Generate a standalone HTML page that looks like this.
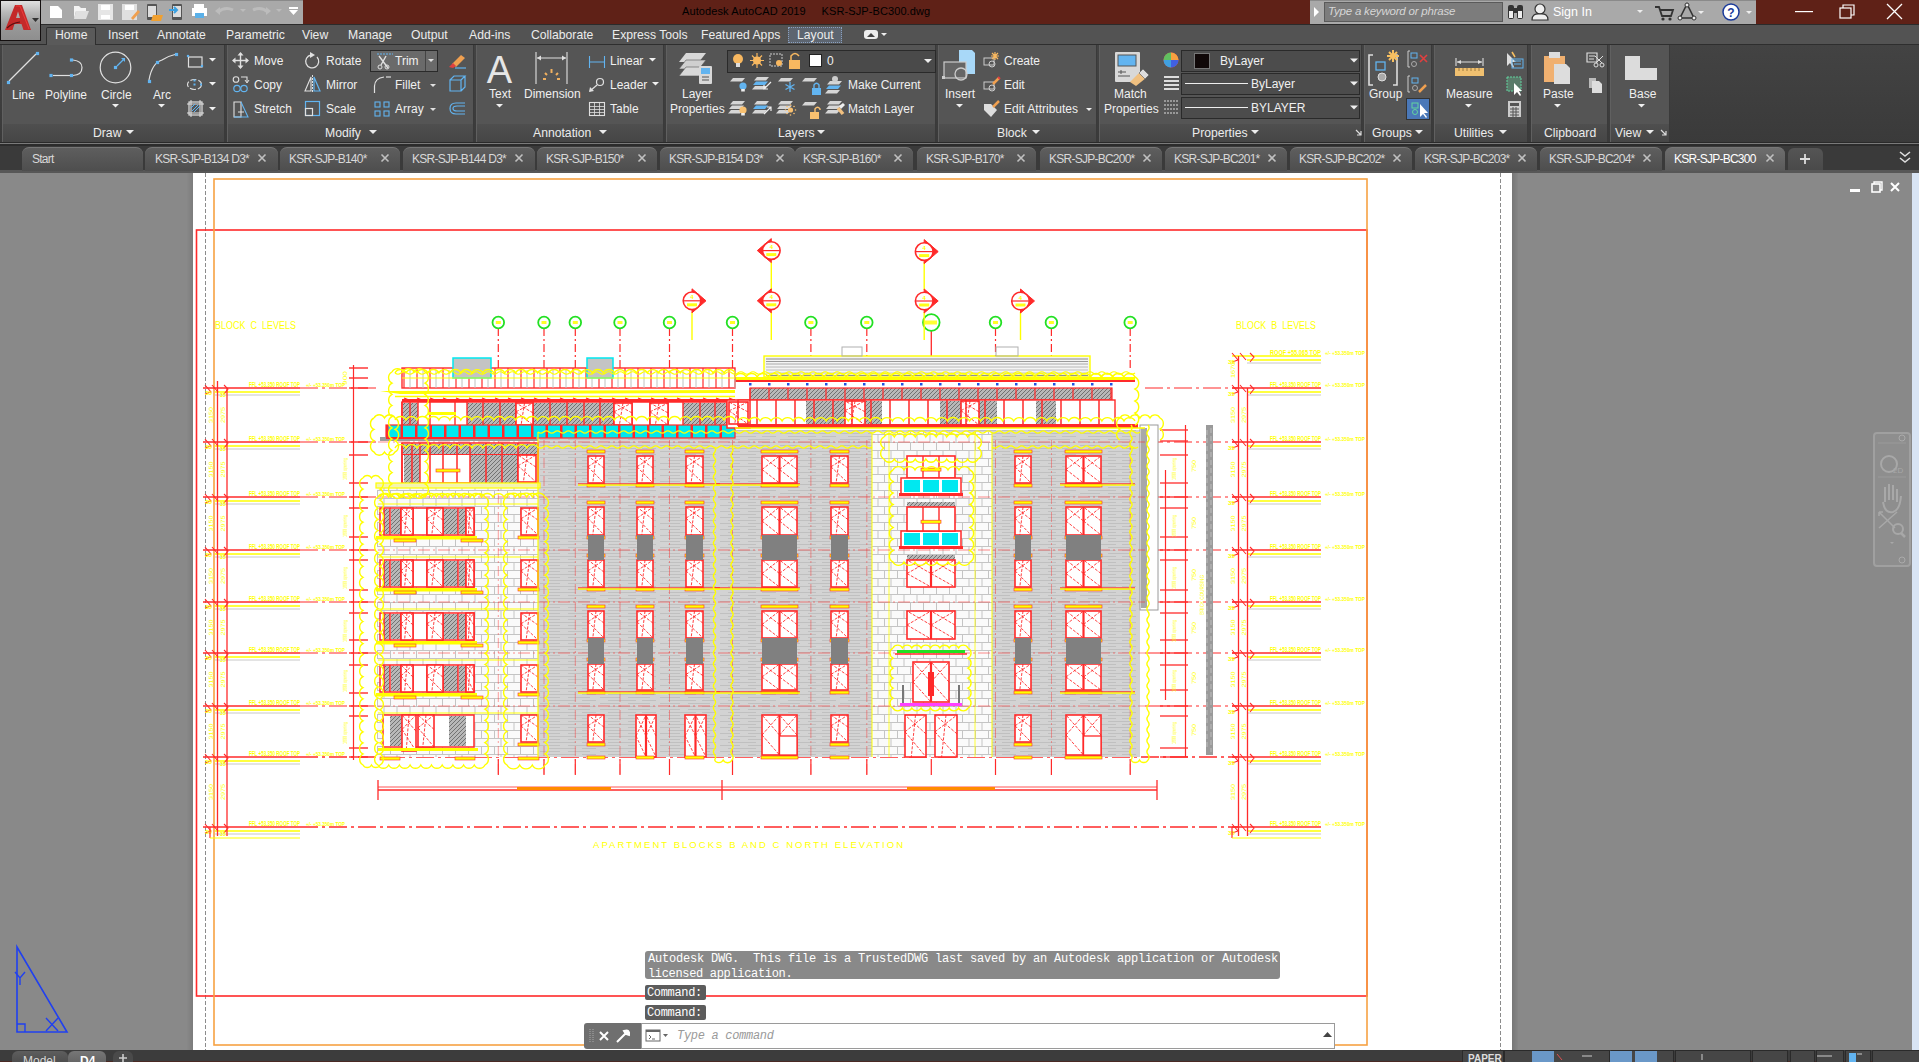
<!DOCTYPE html>
<html><head><meta charset="utf-8"><style>
html,body{margin:0;padding:0;width:1919px;height:1062px;overflow:hidden;background:#3a3a3a;}
body{position:relative;font-family:"Liberation Sans",sans-serif;}
.r{position:absolute;}
.t{position:absolute;white-space:nowrap;line-height:1;}
.s{position:absolute;overflow:visible;}
</style></head><body>
<div class="r" style="left:0px;top:0px;width:1919px;height:24px;background:#5f2117;"></div><div class="r" style="left:0px;top:24px;width:1919px;height:1px;background:#2b2b2b;"></div><div class="r" style="left:41px;top:0px;width:262px;height:24px;background:#a9a9a9;border-top:1px solid #8a8a8a;box-sizing:border-box"></div><svg class="s" style="left:41px;top:0px;" width="262" height="24" viewBox="0 0 262 24"><path d="M9 6 L17 6 L21 10 L21 18 L9 18Z" fill="#fff"/><path d="M33 6 L38 6 L40 8 L45 8 L45 11 L35 11 L33 19Z" fill="#f4f4f4"/><path d="M35 11 L48 11 L45 19 L33 19Z" fill="#e0e0e0"/><path d="M57 4 L72 4 L72 20 L57 20Z" fill="#e6e6e6"/><rect x="60" y="5" width="9" height="5" fill="#fff"/><rect x="60" y="15" width="9" height="4" fill="#fff"/><path d="M81 4 L96 4 L96 20 L81 20Z" fill="#e0e0e0"/><rect x="84" y="5" width="9" height="5" fill="#fff"/><path d="M90 18 L97 10 L99 12 L92 20Z" fill="#f0a050"/><rect x="106" y="4" width="10" height="16" fill="#555" rx="1"/><rect x="107" y="6" width="8" height="11" fill="#ddd"/><path d="M112 15 L122 15 L120 21 L110 21Z" fill="#f0a030"/><rect x="131" y="4" width="10" height="16" fill="#555" rx="1"/><rect x="132" y="6" width="8" height="11" fill="#ddd"/><path d="M128 10 L136 10 M133 7 L136 10 L133 13" stroke="#3aa0e0" stroke-width="2" fill="none"/><rect x="153" y="4" width="10" height="4" fill="#fff"/><rect x="151" y="8" width="15" height="8" fill="#fff"/><rect x="154" y="13" width="9" height="5" fill="#5ab0e8"/><path d="M177 12 Q184 6 192 10" stroke="#bcbcbc" stroke-width="3" fill="none"/><path d="M174 11 L179 7 L179 15Z" fill="#bcbcbc"/><path d="M199 9L205 9L202 12Z" fill="#bcbcbc"/><path d="M212 10 Q220 6 227 12" stroke="#bcbcbc" stroke-width="3" fill="none"/><path d="M230 11 L225 7 L225 15Z" fill="#bcbcbc"/><path d="M235 9L241 9L238 12Z" fill="#bcbcbc"/><rect x="248" y="7" width="9" height="2" fill="#fff"/><path d="M248 10L257 10L252.5 15Z" fill="#fff"/></svg><div class="t" style="left:682px;top:6.3px;font-size:11px;color:#000;letter-spacing:0.1px">Autodesk AutoCAD 2019&nbsp;&nbsp;&nbsp;&nbsp;&nbsp;KSR-SJP-BC300.dwg</div><div class="r" style="left:1310px;top:0px;width:446px;height:24px;background:#a9a9a9;border-top:1px solid #8a8a8a;box-sizing:border-box"></div><svg class="s" style="left:1313px;top:6px;" width="8" height="12" viewBox="0 0 8 12"><path d="M1 1L6 6L1 11Z" fill="#fff"/></svg><div class="r" style="left:1324px;top:2px;width:179px;height:20px;background:#7c7c7c;border:1px solid #5a5a5a;box-sizing:border-box"></div><div class="t" style="left:1328px;top:6.3px;font-size:11.5px;color:#d6d6d6;font-style:italic;letter-spacing:-0.2px">Type a keyword or phrase</div><svg class="s" style="left:1310px;top:0px;" width="446" height="24" viewBox="0 0 446 24"><rect x="198" y="5" width="6" height="14" rx="2" fill="#333"/><rect x="207" y="5" width="6" height="14" rx="2" fill="#333"/><rect x="203" y="8" width="5" height="5" fill="#333"/><rect x="199" y="11" width="4" height="7" fill="#eee"/><rect x="208" y="11" width="4" height="7" fill="#eee"/><circle cx="230" cy="9" r="5" fill="#eee" stroke="#333" stroke-width="1.2"/><path d="M222 20 Q222 13 230 14 Q238 13 238 20Z" fill="#eee" stroke="#333" stroke-width="1.2"/><path d="M327 10L333 10L330 13Z" fill="#eee"/><path d="M345 7 L349 7 L352 16 L361 16 L363 10 L350 10" stroke="#333" stroke-width="1.8" fill="none"/><circle cx="353" cy="19" r="1.6" fill="#333"/><circle cx="360" cy="19" r="1.6" fill="#333"/><path d="M377 4 L384 18 L370 18Z" stroke="#333" stroke-width="1.6" fill="none"/><circle cx="377" cy="5" r="2" fill="#eee" stroke="#333"/><circle cx="370" cy="18" r="2" fill="#eee" stroke="#333"/><circle cx="384" cy="18" r="2" fill="#eee" stroke="#333"/><path d="M388 11L394 11L391 14Z" fill="#eee"/><circle cx="421" cy="12" r="8" fill="#fff" stroke="#1a3a9a" stroke-width="1.5"/><text x="421" y="16.5" font-size="12" font-weight="bold" text-anchor="middle" fill="#1a3a9a" font-family="Liberation Sans">?</text><path d="M436 11L442 11L439 14Z" fill="#eee"/></svg><div class="t" style="left:1553px;top:6.4px;font-size:12.5px;color:#ffffff;">Sign In</div><svg class="s" style="left:1780px;top:0px;" width="139" height="24" viewBox="0 0 139 24"><rect x="15" y="11" width="18" height="1.2" fill="#fff"/><rect x="60" y="8" width="11" height="10" fill="none" stroke="#fff" stroke-width="1.2"/><path d="M63 8 L63 5 L74 5 L74 15 L71 15" fill="none" stroke="#fff" stroke-width="1.2"/><path d="M107 4 L122 19 M122 4 L107 19" stroke="#fff" stroke-width="1.3"/></svg><div class="r" style="left:0px;top:25px;width:1919px;height:19px;background:#535353;"></div><div class="r" style="left:0px;top:44px;width:1919px;height:1px;background:#2e2e2e;"></div><div class="r" style="left:46px;top:27px;width:50px;height:18px;background:#5a5a5a;border:1px solid #2e2e2e;border-bottom:none;border-radius:2px 2px 0 0;box-sizing:border-box"></div><div class="r" style="left:788px;top:27px;width:54px;height:16px;background:#5d6570;border:1px dotted #8aa0c0;box-sizing:border-box"></div><div class="t" style="left:55px;top:28.7px;font-size:12.2px;color:#ececec;">Home</div><div class="t" style="left:108px;top:28.7px;font-size:12.2px;color:#ececec;">Insert</div><div class="t" style="left:157px;top:28.7px;font-size:12.2px;color:#ececec;">Annotate</div><div class="t" style="left:226px;top:28.7px;font-size:12.2px;color:#ececec;">Parametric</div><div class="t" style="left:302px;top:28.7px;font-size:12.2px;color:#ececec;">View</div><div class="t" style="left:348px;top:28.7px;font-size:12.2px;color:#ececec;">Manage</div><div class="t" style="left:411px;top:28.7px;font-size:12.2px;color:#ececec;">Output</div><div class="t" style="left:469px;top:28.7px;font-size:12.2px;color:#ececec;">Add-ins</div><div class="t" style="left:531px;top:28.7px;font-size:12.2px;color:#ececec;">Collaborate</div><div class="t" style="left:612px;top:28.7px;font-size:12.2px;color:#ececec;">Express Tools</div><div class="t" style="left:701px;top:28.7px;font-size:12.2px;color:#ececec;">Featured Apps</div><div class="t" style="left:797px;top:28.7px;font-size:12.2px;color:#ececec;">Layout</div><svg class="s" style="left:862px;top:28px;" width="28" height="14" viewBox="0 0 28 14"><rect x="2" y="2" width="14" height="9" rx="3" fill="#eee"/><path d="M5 9 L9 5 L13 9Z" fill="#444"/><path d="M19 5L25 5L22 8Z" fill="#eee"/></svg><div class="r" style="left:0px;top:0px;width:41px;height:41px;background:#141010;"></div><div class="r" style="left:1px;top:1px;width:39px;height:39px;background:linear-gradient(#e0e0e0,#b8b8b8 30%,#9a9a9a 60%,#8e8e8e);"></div><svg class="s" style="left:3px;top:2px;" width="32" height="30" viewBox="0 0 32 30"><path d="M2 28 L12 3 L19 3 L28 28 L20.5 28 L18.5 22 L11.5 22 L9.5 28Z M13 16 L17 16 L15 9.5Z" fill="#c42a2a" fill-rule="evenodd"/><path d="M4 26 Q9 21 17 20" stroke="#5a1010" stroke-width="1.2" fill="none"/><path d="M13 4 L17 4 L26 27" stroke="#ff4040" stroke-width="1" fill="none" opacity="0.7"/></svg><svg class="s" style="left:31px;top:17px;" width="9" height="6" viewBox="0 0 9 6"><path d="M1 1L8 1L4.5 5Z" fill="#333"/></svg><div class="r" style="left:0px;top:45px;width:1919px;height:98px;background:linear-gradient(#434343,#3a3a3a);"></div><div class="r" style="left:0px;top:142px;width:1919px;height:4px;background:linear-gradient(#2a2a2a,#2a2a2a 25%,#7a7a7a 25%,#7a7a7a 50%,#2c2c2c 50%);"></div><div class="r" style="left:2px;top:45px;width:223px;height:97px;background:#555555;border-left:1px solid #606060;border-right:1px solid #3a3a3a;box-sizing:border-box"></div><div class="r" style="left:3px;top:124px;width:221px;height:18px;background:linear-gradient(#4f4f4f,#464646);"></div><div class="t" style="left:93px;top:126.7px;font-size:12.2px;color:#ececec;">Draw</div><svg class="s" style="left:125px;top:128.5px" width="10" height="6"><path d="M1 1 L9 1 L5 5Z" fill="#ececec"/></svg><div class="r" style="left:227px;top:45px;width:247px;height:97px;background:#555555;border-left:1px solid #606060;border-right:1px solid #3a3a3a;box-sizing:border-box"></div><div class="r" style="left:228px;top:124px;width:245px;height:18px;background:linear-gradient(#4f4f4f,#464646);"></div><div class="t" style="left:325px;top:126.7px;font-size:12.2px;color:#ececec;">Modify</div><svg class="s" style="left:368px;top:128.5px" width="10" height="6"><path d="M1 1 L9 1 L5 5Z" fill="#ececec"/></svg><div class="r" style="left:476px;top:45px;width:188px;height:97px;background:#555555;border-left:1px solid #606060;border-right:1px solid #3a3a3a;box-sizing:border-box"></div><div class="r" style="left:477px;top:124px;width:186px;height:18px;background:linear-gradient(#4f4f4f,#464646);"></div><div class="t" style="left:533px;top:126.7px;font-size:12.2px;color:#ececec;">Annotation</div><svg class="s" style="left:598px;top:128.5px" width="10" height="6"><path d="M1 1 L9 1 L5 5Z" fill="#ececec"/></svg><div class="r" style="left:666px;top:45px;width:270px;height:97px;background:#555555;border-left:1px solid #606060;border-right:1px solid #3a3a3a;box-sizing:border-box"></div><div class="r" style="left:667px;top:124px;width:268px;height:18px;background:linear-gradient(#4f4f4f,#464646);"></div><div class="t" style="left:778px;top:126.7px;font-size:12.2px;color:#ececec;">Layers</div><svg class="s" style="left:816px;top:128.5px" width="10" height="6"><path d="M1 1 L9 1 L5 5Z" fill="#ececec"/></svg><div class="r" style="left:938px;top:45px;width:159px;height:97px;background:#555555;border-left:1px solid #606060;border-right:1px solid #3a3a3a;box-sizing:border-box"></div><div class="r" style="left:939px;top:124px;width:157px;height:18px;background:linear-gradient(#4f4f4f,#464646);"></div><div class="t" style="left:997px;top:126.7px;font-size:12.2px;color:#ececec;">Block</div><svg class="s" style="left:1031px;top:128.5px" width="10" height="6"><path d="M1 1 L9 1 L5 5Z" fill="#ececec"/></svg><div class="r" style="left:1099px;top:45px;width:263px;height:97px;background:#555555;border-left:1px solid #606060;border-right:1px solid #3a3a3a;box-sizing:border-box"></div><div class="r" style="left:1100px;top:124px;width:261px;height:18px;background:linear-gradient(#4f4f4f,#464646);"></div><div class="t" style="left:1192px;top:126.7px;font-size:12.2px;color:#ececec;">Properties</div><svg class="s" style="left:1250px;top:128.5px" width="10" height="6"><path d="M1 1 L9 1 L5 5Z" fill="#ececec"/></svg><svg class="s" style="left:1355px;top:129px;" width="8" height="8" viewBox="0 0 8 8"><path d="M1 1 L6 6 M6 2 L6 6 L2 6" stroke="#ddd" stroke-width="1.2" fill="none"/></svg><div class="r" style="left:1364px;top:45px;width:68px;height:97px;background:#555555;border-left:1px solid #606060;border-right:1px solid #3a3a3a;box-sizing:border-box"></div><div class="r" style="left:1365px;top:124px;width:66px;height:18px;background:linear-gradient(#4f4f4f,#464646);"></div><div class="t" style="left:1372px;top:126.7px;font-size:12.2px;color:#ececec;">Groups</div><svg class="s" style="left:1414px;top:128.5px" width="10" height="6"><path d="M1 1 L9 1 L5 5Z" fill="#ececec"/></svg><div class="r" style="left:1434px;top:45px;width:94px;height:97px;background:#555555;border-left:1px solid #606060;border-right:1px solid #3a3a3a;box-sizing:border-box"></div><div class="r" style="left:1435px;top:124px;width:92px;height:18px;background:linear-gradient(#4f4f4f,#464646);"></div><div class="t" style="left:1454px;top:126.7px;font-size:12.2px;color:#ececec;">Utilities</div><svg class="s" style="left:1498px;top:128.5px" width="10" height="6"><path d="M1 1 L9 1 L5 5Z" fill="#ececec"/></svg><div class="r" style="left:1531px;top:45px;width:77px;height:97px;background:#555555;border-left:1px solid #606060;border-right:1px solid #3a3a3a;box-sizing:border-box"></div><div class="r" style="left:1532px;top:124px;width:75px;height:18px;background:linear-gradient(#4f4f4f,#464646);"></div><div class="t" style="left:1544px;top:126.7px;font-size:12.2px;color:#ececec;">Clipboard</div><div class="r" style="left:1610px;top:45px;width:60px;height:97px;background:#555555;border-left:1px solid #606060;border-right:1px solid #3a3a3a;box-sizing:border-box"></div><div class="r" style="left:1611px;top:124px;width:58px;height:18px;background:linear-gradient(#4f4f4f,#464646);"></div><div class="t" style="left:1615px;top:126.7px;font-size:12.2px;color:#ececec;">View</div><svg class="s" style="left:1645px;top:128.5px" width="10" height="6"><path d="M1 1 L9 1 L5 5Z" fill="#ececec"/></svg><svg class="s" style="left:1660px;top:129px;" width="8" height="8" viewBox="0 0 8 8"><path d="M1 1 L6 6 M6 2 L6 6 L2 6" stroke="#ddd" stroke-width="1.2" fill="none"/></svg><div class="r" style="left:0px;top:146px;width:1919px;height:27px;background:#3a3a3a;"></div><div class="r" style="left:0px;top:170px;width:1919px;height:3px;background:#575757;"></div><div class="r" style="left:22px;top:147px;width:121px;height:24px;background:linear-gradient(#5e5e5e,#4e4e4e);border-radius:7px 7px 0 0;border-top:1px solid #777;box-sizing:border-box"></div><div class="t" style="left:32px;top:153.3px;font-size:12px;color:#d8d8d8;letter-spacing:-0.75px">Start</div><div class="r" style="left:145px;top:147px;width:133px;height:24px;background:linear-gradient(#5e5e5e,#4e4e4e);border-radius:7px 7px 0 0;border-top:1px solid #777;box-sizing:border-box"></div><div class="t" style="left:155px;top:153.3px;font-size:12px;color:#d8d8d8;letter-spacing:-0.75px">KSR-SJP-B134 D3*</div><svg class="s" style="left:257px;top:153px;" width="10" height="10" viewBox="0 0 10 10"><path d="M1.5 1.5 L8.5 8.5 M8.5 1.5 L1.5 8.5" stroke="#c0c0c0" stroke-width="1.6"/></svg><div class="r" style="left:280px;top:147px;width:120px;height:24px;background:linear-gradient(#5e5e5e,#4e4e4e);border-radius:7px 7px 0 0;border-top:1px solid #777;box-sizing:border-box"></div><div class="t" style="left:289px;top:153.3px;font-size:12px;color:#d8d8d8;letter-spacing:-0.75px">KSR-SJP-B140*</div><svg class="s" style="left:380px;top:153px;" width="10" height="10" viewBox="0 0 10 10"><path d="M1.5 1.5 L8.5 8.5 M8.5 1.5 L1.5 8.5" stroke="#c0c0c0" stroke-width="1.6"/></svg><div class="r" style="left:403px;top:147px;width:132px;height:24px;background:linear-gradient(#5e5e5e,#4e4e4e);border-radius:7px 7px 0 0;border-top:1px solid #777;box-sizing:border-box"></div><div class="t" style="left:412px;top:153.3px;font-size:12px;color:#d8d8d8;letter-spacing:-0.75px">KSR-SJP-B144 D3*</div><svg class="s" style="left:514px;top:153px;" width="10" height="10" viewBox="0 0 10 10"><path d="M1.5 1.5 L8.5 8.5 M8.5 1.5 L1.5 8.5" stroke="#c0c0c0" stroke-width="1.6"/></svg><div class="r" style="left:537px;top:147px;width:120px;height:24px;background:linear-gradient(#5e5e5e,#4e4e4e);border-radius:7px 7px 0 0;border-top:1px solid #777;box-sizing:border-box"></div><div class="t" style="left:546px;top:153.3px;font-size:12px;color:#d8d8d8;letter-spacing:-0.75px">KSR-SJP-B150*</div><svg class="s" style="left:637px;top:153px;" width="10" height="10" viewBox="0 0 10 10"><path d="M1.5 1.5 L8.5 8.5 M8.5 1.5 L1.5 8.5" stroke="#c0c0c0" stroke-width="1.6"/></svg><div class="r" style="left:660px;top:147px;width:135px;height:24px;background:linear-gradient(#5e5e5e,#4e4e4e);border-radius:7px 7px 0 0;border-top:1px solid #777;box-sizing:border-box"></div><div class="t" style="left:669px;top:153.3px;font-size:12px;color:#d8d8d8;letter-spacing:-0.75px">KSR-SJP-B154 D3*</div><svg class="s" style="left:775px;top:153px;" width="10" height="10" viewBox="0 0 10 10"><path d="M1.5 1.5 L8.5 8.5 M8.5 1.5 L1.5 8.5" stroke="#c0c0c0" stroke-width="1.6"/></svg><div class="r" style="left:795px;top:147px;width:118px;height:24px;background:linear-gradient(#5e5e5e,#4e4e4e);border-radius:7px 7px 0 0;border-top:1px solid #777;box-sizing:border-box"></div><div class="t" style="left:803px;top:153.3px;font-size:12px;color:#d8d8d8;letter-spacing:-0.75px">KSR-SJP-B160*</div><svg class="s" style="left:893px;top:153px;" width="10" height="10" viewBox="0 0 10 10"><path d="M1.5 1.5 L8.5 8.5 M8.5 1.5 L1.5 8.5" stroke="#c0c0c0" stroke-width="1.6"/></svg><div class="r" style="left:917px;top:147px;width:119px;height:24px;background:linear-gradient(#5e5e5e,#4e4e4e);border-radius:7px 7px 0 0;border-top:1px solid #777;box-sizing:border-box"></div><div class="t" style="left:926px;top:153.3px;font-size:12px;color:#d8d8d8;letter-spacing:-0.75px">KSR-SJP-B170*</div><svg class="s" style="left:1016px;top:153px;" width="10" height="10" viewBox="0 0 10 10"><path d="M1.5 1.5 L8.5 8.5 M8.5 1.5 L1.5 8.5" stroke="#c0c0c0" stroke-width="1.6"/></svg><div class="r" style="left:1040px;top:147px;width:122px;height:24px;background:linear-gradient(#5e5e5e,#4e4e4e);border-radius:7px 7px 0 0;border-top:1px solid #777;box-sizing:border-box"></div><div class="t" style="left:1049px;top:153.3px;font-size:12px;color:#d8d8d8;letter-spacing:-0.75px">KSR-SJP-BC200*</div><svg class="s" style="left:1142px;top:153px;" width="10" height="10" viewBox="0 0 10 10"><path d="M1.5 1.5 L8.5 8.5 M8.5 1.5 L1.5 8.5" stroke="#c0c0c0" stroke-width="1.6"/></svg><div class="r" style="left:1165px;top:147px;width:122px;height:24px;background:linear-gradient(#5e5e5e,#4e4e4e);border-radius:7px 7px 0 0;border-top:1px solid #777;box-sizing:border-box"></div><div class="t" style="left:1174px;top:153.3px;font-size:12px;color:#d8d8d8;letter-spacing:-0.75px">KSR-SJP-BC201*</div><svg class="s" style="left:1267px;top:153px;" width="10" height="10" viewBox="0 0 10 10"><path d="M1.5 1.5 L8.5 8.5 M8.5 1.5 L1.5 8.5" stroke="#c0c0c0" stroke-width="1.6"/></svg><div class="r" style="left:1290px;top:147px;width:122px;height:24px;background:linear-gradient(#5e5e5e,#4e4e4e);border-radius:7px 7px 0 0;border-top:1px solid #777;box-sizing:border-box"></div><div class="t" style="left:1299px;top:153.3px;font-size:12px;color:#d8d8d8;letter-spacing:-0.75px">KSR-SJP-BC202*</div><svg class="s" style="left:1392px;top:153px;" width="10" height="10" viewBox="0 0 10 10"><path d="M1.5 1.5 L8.5 8.5 M8.5 1.5 L1.5 8.5" stroke="#c0c0c0" stroke-width="1.6"/></svg><div class="r" style="left:1415px;top:147px;width:122px;height:24px;background:linear-gradient(#5e5e5e,#4e4e4e);border-radius:7px 7px 0 0;border-top:1px solid #777;box-sizing:border-box"></div><div class="t" style="left:1424px;top:153.3px;font-size:12px;color:#d8d8d8;letter-spacing:-0.75px">KSR-SJP-BC203*</div><svg class="s" style="left:1517px;top:153px;" width="10" height="10" viewBox="0 0 10 10"><path d="M1.5 1.5 L8.5 8.5 M8.5 1.5 L1.5 8.5" stroke="#c0c0c0" stroke-width="1.6"/></svg><div class="r" style="left:1540px;top:147px;width:122px;height:24px;background:linear-gradient(#5e5e5e,#4e4e4e);border-radius:7px 7px 0 0;border-top:1px solid #777;box-sizing:border-box"></div><div class="t" style="left:1549px;top:153.3px;font-size:12px;color:#d8d8d8;letter-spacing:-0.75px">KSR-SJP-BC204*</div><svg class="s" style="left:1642px;top:153px;" width="10" height="10" viewBox="0 0 10 10"><path d="M1.5 1.5 L8.5 8.5 M8.5 1.5 L1.5 8.5" stroke="#c0c0c0" stroke-width="1.6"/></svg><div class="r" style="left:1665px;top:147px;width:120px;height:24px;background:linear-gradient(#6e6e6e,#5a5a5a);border-radius:7px 7px 0 0;border-top:1px solid #777;box-sizing:border-box"></div><div class="t" style="left:1674px;top:153.3px;font-size:12px;color:#ffffff;letter-spacing:-0.75px">KSR-SJP-BC300</div><svg class="s" style="left:1765px;top:153px;" width="10" height="10" viewBox="0 0 10 10"><path d="M1.5 1.5 L8.5 8.5 M8.5 1.5 L1.5 8.5" stroke="#c0c0c0" stroke-width="1.6"/></svg><div class="r" style="left:1788px;top:148px;width:35px;height:22px;background:linear-gradient(#555,#4a4a4a);border-radius:6px 6px 0 0"></div><svg class="s" style="left:1798px;top:152px;" width="14" height="14" viewBox="0 0 14 14"><path d="M7 2 L7 12 M2 7 L12 7" stroke="#ddd" stroke-width="1.8"/></svg><svg class="s" style="left:1898px;top:150px;" width="14" height="16" viewBox="0 0 14 16"><path d="M2 2 L7 6 L12 2 M2 8 L7 12 L12 8" stroke="#ddd" stroke-width="1.6" fill="none"/></svg>
<svg class="s" style="left:0px;top:45px;display:none" width="225" height="80" viewBox="0 0 225 80"></svg><svg class="s" style="left:0;top:0" width="1919" height="145"><path d="M9 81 L36 54" stroke="#e0e0e0" stroke-width="1.2"/><rect x="6.9" y="80.9" width="3.2" height="3.2" fill="#62b4f0"/><rect x="35.9" y="51.9" width="3.2" height="3.2" fill="#62b4f0"/><path d="M53 75.5 L70 75.5" stroke="#e0e0e0" stroke-width="1.2"/><path d="M73 60 Q82 61 82 67.5 Q82 75 73 75.5" stroke="#e0e0e0" stroke-width="1.2" fill="none"/><rect x="49.4" y="73.9" width="3.2" height="3.2" fill="#62b4f0"/><rect x="69.9" y="58.4" width="3.2" height="3.2" fill="#62b4f0"/><rect x="69.9" y="73.9" width="3.2" height="3.2" fill="#62b4f0"/><circle cx="115.5" cy="67.5" r="15.3" stroke="#e0e0e0" stroke-width="1.2" fill="none"/><path d="M117 66 L124 59" stroke="#62b4f0" stroke-width="1.3"/><path d="M121 58 L125 58 L125 62Z" fill="#62b4f0"/><rect x="113.9" y="65.9" width="3.2" height="3.2" fill="#62b4f0"/><path d="M149 80 Q152 63 162 60 Q168 56 175 54.5" stroke="#e0e0e0" stroke-width="1.2" fill="none"/><rect x="147.9" y="79.9" width="3.2" height="3.2" fill="#62b4f0"/><rect x="155.9" y="60.9" width="3.2" height="3.2" fill="#62b4f0"/><rect x="174.9" y="52.9" width="3.2" height="3.2" fill="#62b4f0"/><rect x="188.5" y="57" width="13.5" height="10" stroke="#e0e0e0" stroke-width="1.2" fill="none"/><rect x="186.9" y="54.9" width="2.2" height="2.2" fill="#62b4f0"/><rect x="200.9" y="64.9" width="2.2" height="2.2" fill="#62b4f0"/><ellipse cx="194.5" cy="84.5" rx="7" ry="5" stroke="#e0e0e0" stroke-width="1.1" fill="none" stroke-dasharray="6 2"/><rect x="193.5" y="79.5" width="2" height="2" fill="#62b4f0"/><rect x="193.5" y="83.5" width="2" height="2" fill="#62b4f0"/><rect x="200.0" y="83.5" width="2" height="2" fill="#62b4f0"/><rect x="189" y="102" width="13" height="13" stroke="#e0e0e0" stroke-width="1.2" fill="none"/><path d="M187 104 L204 104 M187 113 L204 113 M191 100 L191 117 M200 100 L200 117" stroke="#e0e0e0" stroke-width="1"/><path d="M192 111 L198 105 M194 112 L200 106 M191 108 L195 104" stroke="#62b4f0" stroke-width="1"/></svg><div class="t" style="left:12px;top:88.8px;font-size:12px;color:#f0f0f0;">Line</div><div class="t" style="left:45px;top:88.8px;font-size:12px;color:#f0f0f0;">Polyline</div><div class="t" style="left:101px;top:88.8px;font-size:12px;color:#f0f0f0;">Circle</div><div class="t" style="left:153px;top:88.8px;font-size:12px;color:#f0f0f0;">Arc</div><svg class="s" style="left:111.0px;top:102.5px" width="9.0" height="5.5"><path d="M1 1 L8.0 1 L4.5 4.5Z" fill="#f0f0f0"/></svg><svg class="s" style="left:157.0px;top:102.5px" width="9.0" height="5.5"><path d="M1 1 L8.0 1 L4.5 4.5Z" fill="#f0f0f0"/></svg><svg class="s" style="left:208.0px;top:56.5px" width="9.0" height="5.5"><path d="M1 1 L8.0 1 L4.5 4.5Z" fill="#f0f0f0"/></svg><svg class="s" style="left:208.0px;top:81.0px" width="9.0" height="5.5"><path d="M1 1 L8.0 1 L4.5 4.5Z" fill="#f0f0f0"/></svg><svg class="s" style="left:208.0px;top:105.5px" width="9.0" height="5.5"><path d="M1 1 L8.0 1 L4.5 4.5Z" fill="#f0f0f0"/></svg><svg class="s" style="left:0;top:0" width="1919" height="145"><path d="M240.5 53 L240.5 68 M233 60.5 L248 60.5" stroke="#e0e0e0" stroke-width="1.4"/><path d="M240.5 52 L237.5 55.5 L243.5 55.5Z M240.5 69 L237.5 65.5 L243.5 65.5Z M232 60.5 L235.5 57.5 L235.5 63.5Z M249 60.5 L245.5 57.5 L245.5 63.5Z" fill="#e0e0e0"/><path d="M317 57 A6.5 6.5 0 1 1 311 55" stroke="#e0e0e0" stroke-width="1.3" fill="none"/><path d="M310 52 L315 55 L310 58Z" fill="#e0e0e0"/><rect x="370.5" y="50.5" width="67" height="21" fill="#6a6a6a" stroke="#2a2a2a"/><path d="M425.5 51 L425.5 71" stroke="#444"/><path d="M377 54 L393 54" stroke="#62b4f0" stroke-width="1" stroke-dasharray="2 1"/><path d="M379 56 L388 68 M386 56 L381 65" stroke="#e0e0e0" stroke-width="1.4"/><circle cx="380" cy="67" r="2" stroke="#e0e0e0" fill="none"/><circle cx="387" cy="67" r="2" stroke="#e0e0e0" fill="none"/><path d="M428 59 L434 59 L431 62Z" fill="#e0e0e0"/><path d="M452 64 L461 55 L465 58 L456 67Z" fill="#f0a050"/><path d="M449 67 L453 63 L456 66 L453 68Z" fill="#e04040"/><path d="M455 68 L466 68" stroke="#62b4f0" stroke-width="1.2"/><circle cx="236" cy="79.5" r="2.8" stroke="#e0e0e0" fill="none" stroke-width="1.1"/><path d="M241 77 L247 77 L247 82" stroke="#e0e0e0" fill="none" stroke-width="1.1"/><path d="M245 80 L247 83 L249 80" stroke="#e0e0e0" fill="none"/><circle cx="237" cy="88.5" r="3.2" stroke="#62b4f0" fill="none" stroke-width="1.2"/><circle cx="244" cy="88.5" r="3.2" stroke="#62b4f0" fill="none" stroke-width="1.2"/><path d="M311 77 L305 91 L311 91Z" stroke="#e0e0e0" fill="none" stroke-width="1.1"/><path d="M314 77 L320 91 L314 91Z" stroke="#62b4f0" fill="none" stroke-width="1.2"/><path d="M312.5 75 L312.5 93" stroke="#e0e0e0" stroke-width="1" stroke-dasharray="2 1"/><path d="M374.5 93 L374.5 86 Q375 78 384 77" stroke="#e0e0e0" fill="none" stroke-width="1.2"/><path d="M386 77 L391 77" stroke="#e0e0e0" stroke-width="1.2"/><path d="M430 84 L436 84 L433 87Z" fill="#e0e0e0"/><path d="M450 80 L461 80 L461 91 L450 91Z M450 80 L454 76 L465 76 L461 80 M465 76 L465 87 L461 91" stroke="#62b4f0" fill="none" stroke-width="1.2"/><path d="M234 117 L234 102 L241 102 L241 117Z" stroke="#e0e0e0" fill="none" stroke-width="1.1"/><path d="M241 102 L248 117 L234 117" stroke="#62b4f0" fill="none" stroke-width="1.1"/><path d="M238 112 L244 112" stroke="#e0e0e0" stroke-width="1"/><rect x="305.5" y="101.5" width="14" height="14" stroke="#62b4f0" fill="none" stroke-width="1.2"/><rect x="305.5" y="108.5" width="7" height="7" stroke="#e0e0e0" fill="none" stroke-width="1.2"/><rect x="375" y="102" width="5" height="5" stroke="#62b4f0" fill="none" stroke-width="1.1"/><rect x="384" y="102" width="5" height="5" stroke="#62b4f0" fill="none" stroke-width="1.1"/><rect x="375" y="111" width="5" height="5" stroke="#62b4f0" fill="none" stroke-width="1.1"/><rect x="384" y="111" width="5" height="5" stroke="#62b4f0" fill="none" stroke-width="1.1"/><path d="M430 108 L436 108 L433 111Z" fill="#e0e0e0"/><path d="M465 103 L456 103 Q450 103 450 108.5 Q450 114 456 114 L465 114 M465 106 L457 106 Q453 106 453 108.5 Q453 111 457 111 L465 111" stroke="#62b4f0" fill="none" stroke-width="1.2"/></svg><div class="t" style="left:254px;top:54.8px;font-size:12px;color:#f0f0f0;">Move</div><div class="t" style="left:326px;top:54.8px;font-size:12px;color:#f0f0f0;">Rotate</div><div class="t" style="left:395px;top:54.8px;font-size:12px;color:#f0f0f0;">Trim</div><div class="t" style="left:254px;top:78.8px;font-size:12px;color:#f0f0f0;">Copy</div><div class="t" style="left:326px;top:78.8px;font-size:12px;color:#f0f0f0;">Mirror</div><div class="t" style="left:395px;top:78.8px;font-size:12px;color:#f0f0f0;">Fillet</div><div class="t" style="left:254px;top:102.8px;font-size:12px;color:#f0f0f0;">Stretch</div><div class="t" style="left:326px;top:102.8px;font-size:12px;color:#f0f0f0;">Scale</div><div class="t" style="left:395px;top:102.8px;font-size:12px;color:#f0f0f0;">Array</div><svg class="s" style="left:0;top:0" width="1919" height="145"><text x="499.5" y="83" font-family="Liberation Sans" font-size="38" fill="#e6e6e6" text-anchor="middle">A</text><path d="M536 52 L536 84 M567 52 L567 84 M537 58 L566 58" stroke="#e0e0e0" stroke-width="1.1"/><path d="M537 58 L541 55.5 L541 60.5Z M566 58 L562 55.5 L562 60.5Z" fill="#e0e0e0"/><path d="M551.5 69 L551.5 73 M545 73 L547 75 M558 73 L556 75 M543 79 L546 79 M557 79 L560 79" stroke="#f0b060" stroke-width="2"/><path d="M589.5 56 L589.5 68 M604.5 56 L604.5 68 M590 62 L604 62" stroke="#62b4f0" stroke-width="1.1"/><circle cx="600" cy="82" r="3.5" stroke="#e0e0e0" fill="none" stroke-width="1.2"/><path d="M597 85 L590 91" stroke="#e0e0e0" stroke-width="1.2"/><path d="M589 92 L590 87 L594 91Z" fill="#e0e0e0"/><rect x="589.5" y="102.5" width="15" height="13" stroke="#e0e0e0" fill="none" stroke-width="1.1"/><path d="M590 106.5 L604 106.5 M590 109.5 L604 109.5 M590 112.5 L604 112.5 M594.5 103 L594.5 115 M599.5 103 L599.5 115" stroke="#e0e0e0" stroke-width="0.8"/></svg><div class="t" style="left:489px;top:87.8px;font-size:12px;color:#f0f0f0;">Text</div><svg class="s" style="left:495.0px;top:102.5px" width="9.0" height="5.5"><path d="M1 1 L8.0 1 L4.5 4.5Z" fill="#f0f0f0"/></svg><div class="t" style="left:524px;top:87.8px;font-size:12px;color:#f0f0f0;">Dimension</div><div class="t" style="left:610px;top:54.8px;font-size:12px;color:#f0f0f0;">Linear</div><svg class="s" style="left:647.5px;top:57.0px" width="9.0" height="5.5"><path d="M1 1 L8.0 1 L4.5 4.5Z" fill="#f0f0f0"/></svg><div class="t" style="left:610px;top:78.8px;font-size:12px;color:#f0f0f0;">Leader</div><svg class="s" style="left:650.5px;top:81.0px" width="9.0" height="5.5"><path d="M1 1 L8.0 1 L4.5 4.5Z" fill="#f0f0f0"/></svg><div class="t" style="left:610px;top:102.8px;font-size:12px;color:#f0f0f0;">Table</div><svg class="s" style="left:0;top:0" width="1919" height="145"><path d="M686 53 L706 53 L699 62 L679 62Z" fill="#d8d8d8"/><path d="M686 60 L706 60 L699 69 L679 69Z" fill="#cfcfcf" stroke="#555" stroke-width="0.6"/><path d="M686 67 L706 67 L699 76 L679 76Z" fill="#d8d8d8" stroke="#555" stroke-width="0.6"/><rect x="699" y="66" width="13" height="18" rx="1" fill="#d8d8d8"/><rect x="701" y="68" width="9" height="6" fill="#62b4f0"/><path d="M702 77 L709 77 M702 80 L709 80" stroke="#555" stroke-width="1"/><rect x="727.5" y="50.5" width="208" height="22" fill="#4a4a4a" stroke="#2a2a2a"/><circle cx="738" cy="59" r="5" fill="#f8b860"/><rect x="736" y="63" width="4" height="4" fill="#ddd"/><circle cx="757" cy="60.5" r="4" fill="#f8b860"/><path d="M757 53 L757 68 M750 60.5 L764 60.5 M752 55.5 L762 65.5 M762 55.5 L752 65.5" stroke="#f8b860" stroke-width="1.2"/><rect x="770" y="54" width="12" height="12" fill="none" stroke="#ccc" stroke-dasharray="2 1"/><circle cx="779" cy="63" r="3" fill="#f8b860"/><rect x="789" y="60" width="11" height="9" fill="#f8b860"/><path d="M791 60 L791 56 Q795 51 799 56" stroke="#f8b860" stroke-width="1.5" fill="none"/><rect x="809.5" y="54.5" width="12" height="12" fill="#fff" stroke="#222"/><path d="M924 59 L932 59 L928 63Z" fill="#eee"/><path d="M733 78 L745 78 L742 81.5 L730 81.5Z" fill="#d6d6d6"/><circle cx="743" cy="86" r="3.6" fill="#62b4f0"/><rect x="741.2" y="89" width="3.6" height="2.5" fill="#eee"/><path d="M757 77 L769 77 L766 80.5 L754 80.5Z" fill="#d6d6d6"/><path d="M756 81.5 L768 81.5 L765 85.0 L753 85.0Z" fill="#62b4f0"/><path d="M755 86 L767 86 L764 89.5 L752 89.5Z" fill="#d6d6d6"/><path d="M771 82 L764 89 M764 85 L764 89 L768 89" stroke="#eee" stroke-width="1.2" fill="none"/><path d="M781 78 L793 78 L790 81.5 L778 81.5Z" fill="#d6d6d6"/><path d="M790 82 L790 92 M785.5 84.5 L794.5 89.5 M794.5 84.5 L785.5 89.5" stroke="#62b4f0" stroke-width="1.3"/><path d="M805 78 L817 78 L814 81.5 L802 81.5Z" fill="#d6d6d6"/><path d="M814 88 L814 85 Q816.5 81.5 819 85 L819 88" stroke="#62b4f0" stroke-width="1.4" fill="none"/><rect x="812" y="88" width="9" height="7" fill="#62b4f0"/><path d="M830 81 L842 81 L839 84.5 L827 84.5Z" fill="#d6d6d6"/><path d="M829 85.5 L841 85.5 L838 89.0 L826 89.0Z" fill="#62b4f0"/><path d="M828 90 L840 90 L837 93.5 L825 93.5Z" fill="#d6d6d6"/><circle cx="835" cy="79" r="3" fill="#ccc"/><path d="M733 101 L745 101 L742 104.5 L730 104.5Z" fill="#d6d6d6"/><path d="M732 105.5 L744 105.5 L741 109.0 L729 109.0Z" fill="#d6d6d6"/><path d="M731 110 L743 110 L740 113.5 L728 113.5Z" fill="#d6d6d6"/><circle cx="743" cy="110" r="3.6" fill="#f8c070"/><rect x="741.2" y="113" width="3.6" height="2.5" fill="#eee"/><path d="M757 101 L769 101 L766 104.5 L754 104.5Z" fill="#d6d6d6"/><path d="M756 105.5 L768 105.5 L765 109.0 L753 109.0Z" fill="#62b4f0"/><path d="M755 110 L767 110 L764 113.5 L752 113.5Z" fill="#d6d6d6"/><path d="M764 114 L771 107 M767 107 L771 107 L771 111" stroke="#eee" stroke-width="1.2" fill="none"/><path d="M781 101 L793 101 L790 104.5 L778 104.5Z" fill="#d6d6d6"/><path d="M780 105.5 L792 105.5 L789 109.0 L777 109.0Z" fill="#d6d6d6"/><path d="M779 110 L791 110 L788 113.5 L776 113.5Z" fill="#d6d6d6"/><circle cx="790.5" cy="110" r="2.6" fill="#f8c070"/><circle cx="795.5" cy="110.0" r="0.8" fill="#f8c070"/><circle cx="794.0" cy="113.5" r="0.8" fill="#f8c070"/><circle cx="790.5" cy="115.0" r="0.8" fill="#f8c070"/><circle cx="787.0" cy="113.5" r="0.8" fill="#f8c070"/><circle cx="785.5" cy="110.0" r="0.8" fill="#f8c070"/><circle cx="787.0" cy="106.5" r="0.8" fill="#f8c070"/><circle cx="790.5" cy="105.0" r="0.8" fill="#f8c070"/><circle cx="794.0" cy="106.5" r="0.8" fill="#f8c070"/><path d="M805 102 L817 102 L814 105.5 L802 105.5Z" fill="#d6d6d6"/><path d="M815 112 L815 109 Q817.5 105.5 820 109 L820 110" stroke="#f8c070" stroke-width="1.4" fill="none"/><rect x="810" y="112" width="9" height="7" fill="#f8c070"/><path d="M830 101 L842 101 L839 104.5 L827 104.5Z" fill="#d6d6d6"/><path d="M829 105.5 L841 105.5 L838 109.0 L826 109.0Z" fill="#d6d6d6"/><path d="M828 110 L840 110 L837 113.5 L825 113.5Z" fill="#d6d6d6"/><path d="M838 108 L843 114" stroke="#f0c080" stroke-width="3.5"/><path d="M839 106 L843 103 L845 105 L841 109Z" fill="#eee"/></svg><div class="t" style="left:827px;top:55.3px;font-size:12px;color:#f0f0f0;">0</div><div class="t" style="left:682px;top:87.8px;font-size:12px;color:#f0f0f0;">Layer</div><div class="t" style="left:670px;top:102.8px;font-size:12px;color:#f0f0f0;">Properties</div><div class="t" style="left:848px;top:78.8px;font-size:12px;color:#f0f0f0;">Make Current</div><div class="t" style="left:848px;top:102.8px;font-size:12px;color:#f0f0f0;">Match Layer</div><svg class="s" style="left:0;top:0" width="1919" height="145"><path d="M959 50 L972 50 L975 53 L975 74 L959 74Z" fill="#a8d8f8"/><rect x="944" y="62" width="22" height="16" fill="#666" stroke="#ccc" stroke-width="1.2"/><circle cx="961" cy="74" r="6" fill="none" stroke="#ccc" stroke-width="1.3"/><rect x="942" y="76" width="3" height="3" fill="#ccc"/><rect x="984" y="58" width="10" height="7" fill="none" stroke="#ccc"/><circle cx="992" cy="64" r="3" fill="none" stroke="#ccc"/><path d="M995 52 L995 60 M991 56 L999 56 M992 53 L998 59 M998 53 L992 59" stroke="#f8b860" stroke-width="1.2"/><rect x="984" y="82" width="10" height="7" fill="none" stroke="#ccc"/><circle cx="992" cy="88" r="3" fill="none" stroke="#ccc"/><path d="M993 84 L999 78" stroke="#f0a050" stroke-width="2.5"/><path d="M998 77 L1000 79" stroke="#e04040" stroke-width="2"/><path d="M984 104 L991 104 L997 110 L991 117 L984 110Z" fill="#ddd"/><path d="M993 107 L999 101" stroke="#f0a050" stroke-width="2.5"/><path d="M1086 108 L1092 108 L1089 111Z" fill="#eee"/></svg><div class="t" style="left:945px;top:87.8px;font-size:12px;color:#f0f0f0;">Insert</div><svg class="s" style="left:955.0px;top:102.5px" width="9.0" height="5.5"><path d="M1 1 L8.0 1 L4.5 4.5Z" fill="#f0f0f0"/></svg><div class="t" style="left:1004px;top:54.8px;font-size:12px;color:#f0f0f0;">Create</div><div class="t" style="left:1004px;top:78.8px;font-size:12px;color:#f0f0f0;">Edit</div><div class="t" style="left:1004px;top:102.8px;font-size:12px;color:#f0f0f0;">Edit Attributes</div><svg class="s" style="left:0;top:0" width="1919" height="145"><rect x="1115" y="52" width="25" height="30" rx="1" fill="#d8d8d8"/><rect x="1118" y="55" width="18" height="11" fill="#62b4f0" stroke="#555"/><path d="M1118 72 L1126 72 M1118 76 L1130 76 M1121 70 L1121 74" stroke="#555" stroke-width="1"/><path d="M1130 82 L1140 72 L1146 78 L1136 86Z" fill="#f0c080"/><path d="M1139 73 L1143 69 L1149 75 L1145 79Z" fill="#ddd" stroke="#555" stroke-width="0.6"/><circle cx="1171" cy="60" r="7.5" fill="#e05050"/><path d="M1171 60 L1171 52.5 A7.5 7.5 0 0 1 1178.5 60Z" fill="#f8a040"/><path d="M1171 60 L1178.5 60 A7.5 7.5 0 0 1 1171 67.5Z" fill="#4060e0"/><path d="M1171 60 L1171 67.5 A7.5 7.5 0 0 1 1163.5 60Z" fill="#40a0e0"/><path d="M1171 60 L1163.5 60 A7.5 7.5 0 0 1 1171 52.5Z" fill="#60c060"/><path d="M1164 77 L1179 77 M1164 81 L1179 81 M1164 85 L1179 85 M1164 89 L1179 89" stroke="#ddd" stroke-width="2"/><path d="M1164 101 L1178 101 M1164 105 L1178 105 M1164 109 L1178 109 M1164 113 L1178 113" stroke="#ddd" stroke-width="1" stroke-dasharray="2 1"/><rect x="1181.5" y="50.5" width="178" height="21" fill="#4c4c4c" stroke="#2a2a2a"/><path d="M1350 58.5 L1358 58.5 L1354 62.5Z" fill="#eee"/><rect x="1181.5" y="73.5" width="178" height="21" fill="#4c4c4c" stroke="#2a2a2a"/><path d="M1350 81.5 L1358 81.5 L1354 85.5Z" fill="#eee"/><rect x="1181.5" y="97.5" width="178" height="21" fill="#4c4c4c" stroke="#2a2a2a"/><path d="M1350 105.5 L1358 105.5 L1354 109.5Z" fill="#eee"/><rect x="1194.5" y="53.5" width="15" height="15" fill="#100808" stroke="#777"/><path d="M1185 83.5 L1248 83.5 M1185 107.5 L1248 107.5" stroke="#eee" stroke-width="1"/></svg><div class="t" style="left:1114px;top:87.8px;font-size:12px;color:#f0f0f0;">Match</div><div class="t" style="left:1104px;top:102.8px;font-size:12px;color:#f0f0f0;">Properties</div><div class="t" style="left:1220px;top:55.3px;font-size:12px;color:#f0f0f0;">ByLayer</div><div class="t" style="left:1251px;top:78.3px;font-size:12px;color:#f0f0f0;">ByLayer</div><div class="t" style="left:1251px;top:101.8px;font-size:12px;color:#f0f0f0;">BYLAYER</div><svg class="s" style="left:0;top:0" width="1919" height="145"><path d="M1373 55 L1369 55 L1369 85 L1373 85 M1393 55 L1397 55 L1397 85 L1393 85" stroke="#ddd" stroke-width="1.6" fill="none"/><rect x="1376" y="62" width="9" height="8" fill="none" stroke="#62b4f0" stroke-width="1.3"/><circle cx="1382" cy="77" r="4" fill="#aaa" stroke="#ddd"/><path d="M1393 50 L1393 62 M1387 56 L1399 56 M1389 52 L1397 60 M1397 52 L1389 60" stroke="#f8c060" stroke-width="2"/><rect x="1411" y="53" width="6" height="5" fill="none" stroke="#62b4f0"/><circle cx="1414" cy="64" r="2.5" fill="none" stroke="#aaa"/><path d="M1420 55 L1427 62 M1427 55 L1420 62" stroke="#e04040" stroke-width="1.6"/><path d="M1410 51 L1408 51 L1408 67 L1410 67" stroke="#ccc" fill="none"/><rect x="1412" y="78" width="6" height="5" fill="none" stroke="#62b4f0"/><circle cx="1415" cy="88" r="2.5" fill="none" stroke="#aaa"/><path d="M1419 92 L1426 85" stroke="#f0a050" stroke-width="2.5"/><path d="M1410 76 L1408 76 L1408 92 L1410 92" stroke="#ccc" fill="none"/><rect x="1406.5" y="98.5" width="23" height="21" fill="#4a78b8" stroke="#333"/><rect x="1412" y="103" width="6" height="5" fill="none" stroke="#62d4a0"/><circle cx="1415" cy="112" r="2.5" fill="none" stroke="#62d4a0"/><path d="M1420 104 L1420 117 L1423 114 L1426 118 L1427 117 L1424 113 L1428 113Z" fill="#fff"/></svg><div class="t" style="left:1369px;top:87.8px;font-size:12px;color:#f0f0f0;">Group</div><svg class="s" style="left:0;top:0" width="1919" height="145"><path d="M1456 58 L1456 66 M1483 58 L1483 66 M1457 62 L1482 62" stroke="#ddd" stroke-width="1.1"/><path d="M1457 62 L1461 60 L1461 64Z M1482 62 L1478 60 L1478 64Z" fill="#ddd"/><rect x="1455" y="68" width="29" height="8" fill="#f0c070"/><path d="M1459 68 L1459 71 M1463 68 L1463 71 M1467 68 L1467 71 M1471 68 L1471 71 M1475 68 L1475 71 M1479 68 L1479 71" stroke="#8a6a30" stroke-width="0.8"/><path d="M1507 53 L1507 66 L1510 63 L1513 68 L1514 67 L1512 62 L1516 62Z" fill="#ddd"/><rect x="1512" y="59" width="11" height="9" fill="none" stroke="#62b4f0"/><path d="M1514 61 L1521 61 M1514 64 L1521 64" stroke="#62b4f0"/><path d="M1512 52 L1515 57" stroke="#f8c060" stroke-width="1.5"/><rect x="1507" y="77" width="14" height="14" fill="#5a7a6a" stroke="#62d4a0" stroke-dasharray="2 1"/><path d="M1514 83 L1514 95 L1517 92 L1520 96 L1521 95 L1519 91 L1522 91Z" fill="#fff"/><rect x="1508" y="101" width="13" height="16" fill="#ccc"/><rect x="1510" y="103" width="9" height="3" fill="#555"/><path d="M1510 109 L1519 109 M1510 112 L1519 112 M1510 115 L1519 115 M1513 107 L1513 117 M1516 107 L1516 117" stroke="#555" stroke-width="1"/></svg><div class="t" style="left:1446px;top:87.8px;font-size:12px;color:#f0f0f0;">Measure</div><svg class="s" style="left:1464.0px;top:102.5px" width="9.0" height="5.5"><path d="M1 1 L8.0 1 L4.5 4.5Z" fill="#f0f0f0"/></svg><svg class="s" style="left:0;top:0" width="1919" height="145"><rect x="1544" y="56" width="21" height="26" fill="#f0b070"/><rect x="1549" y="52" width="11" height="6" fill="#ddd"/><path d="M1554 64 L1566 64 L1570 68 L1570 84 L1554 84Z" fill="#ddd"/><path d="M1587 53 L1597 53 L1597 62 L1587 62Z" fill="none" stroke="#ddd" stroke-width="1.2"/><path d="M1589 56 L1595 56 M1589 59 L1594 59" stroke="#ddd"/><circle cx="1596" cy="65" r="2" fill="none" stroke="#ddd"/><circle cx="1602" cy="65" r="2" fill="none" stroke="#ddd"/><path d="M1596 63 L1603 56 M1602 63 L1595 56" stroke="#ddd"/><path d="M1589 78 L1596 78 L1596 88 L1589 88Z" fill="#bbb"/><path d="M1592 81 L1599 81 L1602 84 L1602 93 L1592 93Z" fill="#ddd"/></svg><div class="t" style="left:1543px;top:87.8px;font-size:12px;color:#f0f0f0;">Paste</div><svg class="s" style="left:1553.0px;top:102.5px" width="9.0" height="5.5"><path d="M1 1 L8.0 1 L4.5 4.5Z" fill="#f0f0f0"/></svg><svg class="s" style="left:0;top:0" width="1919" height="145"><path d="M1625 56 L1640 56 L1640 68 L1657 68 L1657 80 L1625 80Z" fill="#dcdcdc"/></svg><div class="t" style="left:1629px;top:87.8px;font-size:12px;color:#f0f0f0;">Base</div><svg class="s" style="left:1637.0px;top:102.5px" width="9.0" height="5.5"><path d="M1 1 L8.0 1 L4.5 4.5Z" fill="#f0f0f0"/></svg>
<div class="r" style="left:0px;top:173px;width:1919px;height:877px;background:#898989;"></div><div class="r" style="left:187px;top:173px;width:6px;height:877px;background:linear-gradient(to right,#888,#7c7c7c);"></div><div class="r" style="left:1512px;top:173px;width:6px;height:877px;background:linear-gradient(to right,#777,#868686);"></div><div class="r" style="left:193px;top:173px;width:1319px;height:877px;background:#ffffff;"></div><div class="r" style="left:1912px;top:173px;width:7px;height:877px;background:#d8e4f4;"></div><svg class="s" style="left:1846px;top:180px;" width="60" height="16" viewBox="0 0 60 16"><rect x="4" y="9" width="10" height="3" fill="#fff"/><rect x="26" y="4" width="8" height="8" fill="none" stroke="#fff" stroke-width="1.6"/><path d="M28 4 L28 2 L36 2 L36 10 L34 10" fill="none" stroke="#fff" stroke-width="1.4"/><path d="M45 3 L53 11 M53 3 L45 11" stroke="#fff" stroke-width="2"/></svg><div class="r" style="left:1873px;top:432px;width:38px;height:135px;background:#8e8e8e;border:2px solid #a0a0a0;border-radius:4px;box-sizing:border-box"></div><svg class="s" style="left:1873px;top:432px;" width="38" height="135" viewBox="0 0 38 135"><circle cx="29" cy="6" r="3" fill="none" stroke="#aaa"/><path d="M5 11 L33 11 M5 45 L33 45" stroke="#9a9a9a"/><circle cx="16" cy="32" r="8" fill="none" stroke="#a8a8a8" stroke-width="2"/><text x="20" y="41" font-size="8" fill="#a8a8a8" font-family="Liberation Sans">2D</text><path d="M12 70 L12 55 M16 68 L16 52 M20 68 L20 53 M24 70 L24 57 M10 70 Q12 82 20 80 Q27 78 28 64" stroke="#a8a8a8" stroke-width="2" fill="none"/><path d="M6 80 L22 96 M6 80 L10 80 M6 80 L6 84 M24 80 L6 96" stroke="#a8a8a8" stroke-width="1.5"/><circle cx="25" cy="97" r="5" fill="none" stroke="#a8a8a8" stroke-width="2"/><path d="M28 101 L32 105" stroke="#a8a8a8" stroke-width="2.5"/><path d="M17 110 L21 110 L19 112Z" fill="#a8a8a8"/><circle cx="29" cy="128" r="3" fill="none" stroke="#aaa"/></svg><svg class="s" style="left:10px;top:940px;" width="70" height="100" viewBox="0 0 70 100"><path d="M7 7 L7 92 L57 92Z" fill="none" stroke="#2040f0" stroke-width="1.6"/><path d="M7 84 L15 84 L15 92" fill="none" stroke="#2040f0" stroke-width="1.4"/><path d="M5 32 L10 38 L15 32 M10 38 L10 45" stroke="#2040f0" stroke-width="1.4" fill="none"/><path d="M36 78 L48 91 M48 78 L36 91" stroke="#2040f0" stroke-width="1.4"/></svg><div class="r" style="left:0px;top:1050px;width:1919px;height:12px;background:#3c3c3c;"></div><div class="r" style="left:0px;top:1061px;width:1919px;height:1px;background:#4a2a24;"></div><div class="r" style="left:12px;top:1051px;width:56px;height:11px;background:linear-gradient(#5e5e5e,#4e4e4e);border-radius:6px 6px 0 0"></div><div class="t" style="left:23px;top:1054.8px;font-size:12px;color:#d8d8d8;">Model</div><div class="r" style="left:68px;top:1051px;width:38px;height:11px;background:linear-gradient(#777,#666);border-radius:6px 6px 0 0"></div><div class="t" style="left:80px;top:1054.8px;font-size:12px;color:#ffffff;font-weight:bold">D4</div><div class="r" style="left:113px;top:1051px;width:20px;height:11px;background:#4a4a4a;border-radius:6px 6px 0 0"></div><svg class="s" style="left:117px;top:1052px;" width="12" height="10" viewBox="0 0 12 10"><path d="M6 2 L6 10 M2 6 L10 6" stroke="#ccc" stroke-width="1.6"/></svg><svg class="s" style="left:1462px;top:1048px;" width="457" height="14" viewBox="0 0 457 14"><rect x="0.5" y="2.5" width="41" height="12" fill="#464646" stroke="#2a2a2a"/><rect x="42.5" y="2.5" width="105" height="12" fill="#464646" stroke="#2a2a2a"/><rect x="149.5" y="2.5" width="62" height="12" fill="#464646" stroke="#2a2a2a"/><rect x="213.5" y="2.5" width="75" height="12" fill="#464646" stroke="#2a2a2a"/><rect x="290.5" y="2.5" width="35" height="12" fill="#464646" stroke="#2a2a2a"/><rect x="328.5" y="2.5" width="24" height="12" fill="#464646" stroke="#2a2a2a"/><rect x="354.5" y="2.5" width="27" height="12" fill="#464646" stroke="#2a2a2a"/><rect x="383.5" y="2.5" width="25" height="12" fill="#464646" stroke="#2a2a2a"/><rect x="410.5" y="2.5" width="47" height="12" fill="#464646" stroke="#2a2a2a"/><rect x="70" y="3" width="22" height="12" fill="#6a98c8"/><rect x="148" y="3" width="22" height="12" fill="#6a98c8"/><rect x="173" y="3" width="22" height="12" fill="#6a98c8"/><rect x="387" y="5" width="7" height="10" fill="#62b4f0"/><text x="6" y="14" font-size="10" fill="#ddd" font-family="Liberation Sans" font-weight="bold">PAPER</text><path d="M95 6 L100 12" stroke="#e05050"/><path d="M120 8 L130 8 M240 6 L240 12 M 355 8 L370 8 M395 6 L400 6" stroke="#ccc"/></svg>
<svg class="s" style="left:0;top:0" width="1919" height="1062"><defs>
<pattern id="brick" width="26" height="16" patternUnits="userSpaceOnUse" x="377" y="490">
<rect width="26" height="16" fill="#fafafa"/>
<path d="M0 0.5 H26 M0 8.5 H26 M0.5 0 V8 M13.5 0 V8 M7 8 V16 M20 8 V16" stroke="#c4c4c4" stroke-width="1"/>
</pattern>
<pattern id="grayf" width="60" height="6" patternUnits="userSpaceOnUse" x="538" y="432">
<rect width="60" height="6" fill="#d3d3d3"/>
<path d="M2 1.5 H22 M30 1.5 H52 M10 4.5 H38 M44 4.5 H58" stroke="#c0c0c0" stroke-width="1"/>
</pattern>
<pattern id="hatch" width="4" height="4" patternUnits="userSpaceOnUse">
<rect width="4" height="4" fill="#b8b8b8"/>
<path d="M0 4 L4 0 M-1 1 L1 -1 M3 5 L5 3" stroke="#6a6a6a" stroke-width="0.9"/>
</pattern>
</defs><line x1="205.5" y1="173" x2="205.5" y2="1050" stroke="#8c8c8c" stroke-width="1" stroke-dasharray="4 2"/><line x1="1500.5" y1="173" x2="1500.5" y2="1050" stroke="#8c8c8c" stroke-width="1" stroke-dasharray="4 2"/><rect x="196.5" y="230" width="1170.5" height="766" fill="none" stroke="#ff2a2a" stroke-width="1.6" /><rect x="214" y="179" width="1153" height="866" fill="none" stroke="#f7a243" stroke-width="1.6" /><text x="215" y="328.5" font-family="Liberation Sans" font-size="10" fill="#ffff00" textLength="81" lengthAdjust="spacingAndGlyphs">BLOCK&#160; C&#160; LEVELS</text><text x="1236" y="328.5" font-family="Liberation Sans" font-size="10" fill="#ffff00" textLength="80" lengthAdjust="spacingAndGlyphs">BLOCK&#160; B&#160; LEVELS</text><text x="593" y="848" font-family="Liberation Sans" font-size="9.5" fill="#ffff00" textLength="310" lengthAdjust="spacing">APARTMENT BLOCKS B AND C NORTH ELEVATION</text><line x1="203" y1="388" x2="300" y2="388" stroke="#ff2a2a" stroke-width="1.4" /><line x1="215" y1="392" x2="300" y2="392" stroke="#ffff00" stroke-width="1.6" /><line x1="215" y1="395" x2="300" y2="395" stroke="#c8c8c8" stroke-width="1" /><path d="M205 385 L211 392 L205 394 M212 385 L218 392 M224 385 L228 389 L224 394" stroke="#ff2a2a" stroke-width="1.1" fill="none"/><text x="249" y="387" font-family="Liberation Sans" font-size="6.5" font-weight="bold" fill="#ffff00" textLength="51" lengthAdjust="spacingAndGlyphs">FFL +53.350 ROOF TOP</text><text x="306" y="387" font-family="Liberation Sans" font-size="6" font-weight="bold" fill="#ffff00" textLength="39" lengthAdjust="spacingAndGlyphs">+/- +53.350m TOP</text><text x="205" y="395" font-family="Liberation Sans" font-size="5" font-weight="bold" fill="#ffff00" textLength="7" lengthAdjust="spacingAndGlyphs">35</text><text x="220" y="397" font-family="Liberation Sans" font-size="5" font-weight="bold" fill="#ffff00" textLength="6" lengthAdjust="spacingAndGlyphs">35</text><line x1="1232" y1="388" x2="1321" y2="388" stroke="#ff2a2a" stroke-width="1.4" /><line x1="1247" y1="392" x2="1321" y2="392" stroke="#ffff00" stroke-width="1.6" /><line x1="1247" y1="395" x2="1321" y2="395" stroke="#c8c8c8" stroke-width="1" /><path d="M1232 385 L1238 392 L1232 394 M1240 385 L1246 392 M1250 385 L1254 389 L1250 394" stroke="#ff2a2a" stroke-width="1.1" fill="none"/><text x="1270" y="387" font-family="Liberation Sans" font-size="6.5" font-weight="bold" fill="#ffff00" textLength="51" lengthAdjust="spacingAndGlyphs">FFL +53.350 ROOF TOP</text><text x="1325" y="387" font-family="Liberation Sans" font-size="6" font-weight="bold" fill="#ffff00" textLength="40" lengthAdjust="spacingAndGlyphs">+/- +53.350m TOP</text><text x="1228" y="396" font-family="Liberation Sans" font-size="5" font-weight="bold" fill="#ffff00" textLength="7" lengthAdjust="spacingAndGlyphs">35</text><line x1="203" y1="442" x2="300" y2="442" stroke="#ff2a2a" stroke-width="1.4" /><line x1="215" y1="446" x2="300" y2="446" stroke="#ffff00" stroke-width="1.6" /><line x1="215" y1="449" x2="300" y2="449" stroke="#c8c8c8" stroke-width="1" /><path d="M205 439 L211 446 L205 448 M212 439 L218 446 M224 439 L228 443 L224 448" stroke="#ff2a2a" stroke-width="1.1" fill="none"/><text x="249" y="441" font-family="Liberation Sans" font-size="6.5" font-weight="bold" fill="#ffff00" textLength="51" lengthAdjust="spacingAndGlyphs">FFL +53.350 ROOF TOP</text><text x="306" y="441" font-family="Liberation Sans" font-size="6" font-weight="bold" fill="#ffff00" textLength="39" lengthAdjust="spacingAndGlyphs">+/- +53.350m TOP</text><text x="205" y="449" font-family="Liberation Sans" font-size="5" font-weight="bold" fill="#ffff00" textLength="7" lengthAdjust="spacingAndGlyphs">35</text><text x="220" y="451" font-family="Liberation Sans" font-size="5" font-weight="bold" fill="#ffff00" textLength="6" lengthAdjust="spacingAndGlyphs">35</text><line x1="1232" y1="442" x2="1321" y2="442" stroke="#ff2a2a" stroke-width="1.4" /><line x1="1247" y1="446" x2="1321" y2="446" stroke="#ffff00" stroke-width="1.6" /><line x1="1247" y1="449" x2="1321" y2="449" stroke="#c8c8c8" stroke-width="1" /><path d="M1232 439 L1238 446 L1232 448 M1240 439 L1246 446 M1250 439 L1254 443 L1250 448" stroke="#ff2a2a" stroke-width="1.1" fill="none"/><text x="1270" y="441" font-family="Liberation Sans" font-size="6.5" font-weight="bold" fill="#ffff00" textLength="51" lengthAdjust="spacingAndGlyphs">FFL +53.350 ROOF TOP</text><text x="1325" y="441" font-family="Liberation Sans" font-size="6" font-weight="bold" fill="#ffff00" textLength="40" lengthAdjust="spacingAndGlyphs">+/- +53.350m TOP</text><text x="1228" y="450" font-family="Liberation Sans" font-size="5" font-weight="bold" fill="#ffff00" textLength="7" lengthAdjust="spacingAndGlyphs">35</text><line x1="203" y1="497" x2="300" y2="497" stroke="#ff2a2a" stroke-width="1.4" /><line x1="215" y1="501" x2="300" y2="501" stroke="#ffff00" stroke-width="1.6" /><line x1="215" y1="504" x2="300" y2="504" stroke="#c8c8c8" stroke-width="1" /><path d="M205 494 L211 501 L205 503 M212 494 L218 501 M224 494 L228 498 L224 503" stroke="#ff2a2a" stroke-width="1.1" fill="none"/><text x="249" y="496" font-family="Liberation Sans" font-size="6.5" font-weight="bold" fill="#ffff00" textLength="51" lengthAdjust="spacingAndGlyphs">FFL +53.350 ROOF TOP</text><text x="306" y="496" font-family="Liberation Sans" font-size="6" font-weight="bold" fill="#ffff00" textLength="39" lengthAdjust="spacingAndGlyphs">+/- +53.350m TOP</text><text x="205" y="504" font-family="Liberation Sans" font-size="5" font-weight="bold" fill="#ffff00" textLength="7" lengthAdjust="spacingAndGlyphs">35</text><text x="220" y="506" font-family="Liberation Sans" font-size="5" font-weight="bold" fill="#ffff00" textLength="6" lengthAdjust="spacingAndGlyphs">35</text><line x1="1232" y1="497" x2="1321" y2="497" stroke="#ff2a2a" stroke-width="1.4" /><line x1="1247" y1="501" x2="1321" y2="501" stroke="#ffff00" stroke-width="1.6" /><line x1="1247" y1="504" x2="1321" y2="504" stroke="#c8c8c8" stroke-width="1" /><path d="M1232 494 L1238 501 L1232 503 M1240 494 L1246 501 M1250 494 L1254 498 L1250 503" stroke="#ff2a2a" stroke-width="1.1" fill="none"/><text x="1270" y="496" font-family="Liberation Sans" font-size="6.5" font-weight="bold" fill="#ffff00" textLength="51" lengthAdjust="spacingAndGlyphs">FFL +53.350 ROOF TOP</text><text x="1325" y="496" font-family="Liberation Sans" font-size="6" font-weight="bold" fill="#ffff00" textLength="40" lengthAdjust="spacingAndGlyphs">+/- +53.350m TOP</text><text x="1228" y="505" font-family="Liberation Sans" font-size="5" font-weight="bold" fill="#ffff00" textLength="7" lengthAdjust="spacingAndGlyphs">35</text><line x1="203" y1="550" x2="300" y2="550" stroke="#ff2a2a" stroke-width="1.4" /><line x1="215" y1="554" x2="300" y2="554" stroke="#ffff00" stroke-width="1.6" /><line x1="215" y1="557" x2="300" y2="557" stroke="#c8c8c8" stroke-width="1" /><path d="M205 547 L211 554 L205 556 M212 547 L218 554 M224 547 L228 551 L224 556" stroke="#ff2a2a" stroke-width="1.1" fill="none"/><text x="249" y="549" font-family="Liberation Sans" font-size="6.5" font-weight="bold" fill="#ffff00" textLength="51" lengthAdjust="spacingAndGlyphs">FFL +53.350 ROOF TOP</text><text x="306" y="549" font-family="Liberation Sans" font-size="6" font-weight="bold" fill="#ffff00" textLength="39" lengthAdjust="spacingAndGlyphs">+/- +53.350m TOP</text><text x="205" y="557" font-family="Liberation Sans" font-size="5" font-weight="bold" fill="#ffff00" textLength="7" lengthAdjust="spacingAndGlyphs">35</text><text x="220" y="559" font-family="Liberation Sans" font-size="5" font-weight="bold" fill="#ffff00" textLength="6" lengthAdjust="spacingAndGlyphs">35</text><line x1="1232" y1="550" x2="1321" y2="550" stroke="#ff2a2a" stroke-width="1.4" /><line x1="1247" y1="554" x2="1321" y2="554" stroke="#ffff00" stroke-width="1.6" /><line x1="1247" y1="557" x2="1321" y2="557" stroke="#c8c8c8" stroke-width="1" /><path d="M1232 547 L1238 554 L1232 556 M1240 547 L1246 554 M1250 547 L1254 551 L1250 556" stroke="#ff2a2a" stroke-width="1.1" fill="none"/><text x="1270" y="549" font-family="Liberation Sans" font-size="6.5" font-weight="bold" fill="#ffff00" textLength="51" lengthAdjust="spacingAndGlyphs">FFL +53.350 ROOF TOP</text><text x="1325" y="549" font-family="Liberation Sans" font-size="6" font-weight="bold" fill="#ffff00" textLength="40" lengthAdjust="spacingAndGlyphs">+/- +53.350m TOP</text><text x="1228" y="558" font-family="Liberation Sans" font-size="5" font-weight="bold" fill="#ffff00" textLength="7" lengthAdjust="spacingAndGlyphs">35</text><line x1="203" y1="602" x2="300" y2="602" stroke="#ff2a2a" stroke-width="1.4" /><line x1="215" y1="606" x2="300" y2="606" stroke="#ffff00" stroke-width="1.6" /><line x1="215" y1="609" x2="300" y2="609" stroke="#c8c8c8" stroke-width="1" /><path d="M205 599 L211 606 L205 608 M212 599 L218 606 M224 599 L228 603 L224 608" stroke="#ff2a2a" stroke-width="1.1" fill="none"/><text x="249" y="601" font-family="Liberation Sans" font-size="6.5" font-weight="bold" fill="#ffff00" textLength="51" lengthAdjust="spacingAndGlyphs">FFL +53.350 ROOF TOP</text><text x="306" y="601" font-family="Liberation Sans" font-size="6" font-weight="bold" fill="#ffff00" textLength="39" lengthAdjust="spacingAndGlyphs">+/- +53.350m TOP</text><text x="205" y="609" font-family="Liberation Sans" font-size="5" font-weight="bold" fill="#ffff00" textLength="7" lengthAdjust="spacingAndGlyphs">35</text><text x="220" y="611" font-family="Liberation Sans" font-size="5" font-weight="bold" fill="#ffff00" textLength="6" lengthAdjust="spacingAndGlyphs">35</text><line x1="1232" y1="602" x2="1321" y2="602" stroke="#ff2a2a" stroke-width="1.4" /><line x1="1247" y1="606" x2="1321" y2="606" stroke="#ffff00" stroke-width="1.6" /><line x1="1247" y1="609" x2="1321" y2="609" stroke="#c8c8c8" stroke-width="1" /><path d="M1232 599 L1238 606 L1232 608 M1240 599 L1246 606 M1250 599 L1254 603 L1250 608" stroke="#ff2a2a" stroke-width="1.1" fill="none"/><text x="1270" y="601" font-family="Liberation Sans" font-size="6.5" font-weight="bold" fill="#ffff00" textLength="51" lengthAdjust="spacingAndGlyphs">FFL +53.350 ROOF TOP</text><text x="1325" y="601" font-family="Liberation Sans" font-size="6" font-weight="bold" fill="#ffff00" textLength="40" lengthAdjust="spacingAndGlyphs">+/- +53.350m TOP</text><text x="1228" y="610" font-family="Liberation Sans" font-size="5" font-weight="bold" fill="#ffff00" textLength="7" lengthAdjust="spacingAndGlyphs">35</text><line x1="203" y1="653" x2="300" y2="653" stroke="#ff2a2a" stroke-width="1.4" /><line x1="215" y1="657" x2="300" y2="657" stroke="#ffff00" stroke-width="1.6" /><line x1="215" y1="660" x2="300" y2="660" stroke="#c8c8c8" stroke-width="1" /><path d="M205 650 L211 657 L205 659 M212 650 L218 657 M224 650 L228 654 L224 659" stroke="#ff2a2a" stroke-width="1.1" fill="none"/><text x="249" y="652" font-family="Liberation Sans" font-size="6.5" font-weight="bold" fill="#ffff00" textLength="51" lengthAdjust="spacingAndGlyphs">FFL +53.350 ROOF TOP</text><text x="306" y="652" font-family="Liberation Sans" font-size="6" font-weight="bold" fill="#ffff00" textLength="39" lengthAdjust="spacingAndGlyphs">+/- +53.350m TOP</text><text x="205" y="660" font-family="Liberation Sans" font-size="5" font-weight="bold" fill="#ffff00" textLength="7" lengthAdjust="spacingAndGlyphs">35</text><text x="220" y="662" font-family="Liberation Sans" font-size="5" font-weight="bold" fill="#ffff00" textLength="6" lengthAdjust="spacingAndGlyphs">35</text><line x1="1232" y1="653" x2="1321" y2="653" stroke="#ff2a2a" stroke-width="1.4" /><line x1="1247" y1="657" x2="1321" y2="657" stroke="#ffff00" stroke-width="1.6" /><line x1="1247" y1="660" x2="1321" y2="660" stroke="#c8c8c8" stroke-width="1" /><path d="M1232 650 L1238 657 L1232 659 M1240 650 L1246 657 M1250 650 L1254 654 L1250 659" stroke="#ff2a2a" stroke-width="1.1" fill="none"/><text x="1270" y="652" font-family="Liberation Sans" font-size="6.5" font-weight="bold" fill="#ffff00" textLength="51" lengthAdjust="spacingAndGlyphs">FFL +53.350 ROOF TOP</text><text x="1325" y="652" font-family="Liberation Sans" font-size="6" font-weight="bold" fill="#ffff00" textLength="40" lengthAdjust="spacingAndGlyphs">+/- +53.350m TOP</text><text x="1228" y="661" font-family="Liberation Sans" font-size="5" font-weight="bold" fill="#ffff00" textLength="7" lengthAdjust="spacingAndGlyphs">35</text><line x1="203" y1="706" x2="300" y2="706" stroke="#ff2a2a" stroke-width="1.4" /><line x1="215" y1="710" x2="300" y2="710" stroke="#ffff00" stroke-width="1.6" /><line x1="215" y1="713" x2="300" y2="713" stroke="#c8c8c8" stroke-width="1" /><path d="M205 703 L211 710 L205 712 M212 703 L218 710 M224 703 L228 707 L224 712" stroke="#ff2a2a" stroke-width="1.1" fill="none"/><text x="249" y="705" font-family="Liberation Sans" font-size="6.5" font-weight="bold" fill="#ffff00" textLength="51" lengthAdjust="spacingAndGlyphs">FFL +53.350 ROOF TOP</text><text x="306" y="705" font-family="Liberation Sans" font-size="6" font-weight="bold" fill="#ffff00" textLength="39" lengthAdjust="spacingAndGlyphs">+/- +53.350m TOP</text><text x="205" y="713" font-family="Liberation Sans" font-size="5" font-weight="bold" fill="#ffff00" textLength="7" lengthAdjust="spacingAndGlyphs">35</text><text x="220" y="715" font-family="Liberation Sans" font-size="5" font-weight="bold" fill="#ffff00" textLength="6" lengthAdjust="spacingAndGlyphs">35</text><line x1="1232" y1="706" x2="1321" y2="706" stroke="#ff2a2a" stroke-width="1.4" /><line x1="1247" y1="710" x2="1321" y2="710" stroke="#ffff00" stroke-width="1.6" /><line x1="1247" y1="713" x2="1321" y2="713" stroke="#c8c8c8" stroke-width="1" /><path d="M1232 703 L1238 710 L1232 712 M1240 703 L1246 710 M1250 703 L1254 707 L1250 712" stroke="#ff2a2a" stroke-width="1.1" fill="none"/><text x="1270" y="705" font-family="Liberation Sans" font-size="6.5" font-weight="bold" fill="#ffff00" textLength="51" lengthAdjust="spacingAndGlyphs">FFL +53.350 ROOF TOP</text><text x="1325" y="705" font-family="Liberation Sans" font-size="6" font-weight="bold" fill="#ffff00" textLength="40" lengthAdjust="spacingAndGlyphs">+/- +53.350m TOP</text><text x="1228" y="714" font-family="Liberation Sans" font-size="5" font-weight="bold" fill="#ffff00" textLength="7" lengthAdjust="spacingAndGlyphs">35</text><line x1="203" y1="757" x2="300" y2="757" stroke="#ff2a2a" stroke-width="1.4" /><line x1="215" y1="761" x2="300" y2="761" stroke="#ffff00" stroke-width="1.6" /><line x1="215" y1="764" x2="300" y2="764" stroke="#c8c8c8" stroke-width="1" /><path d="M205 754 L211 761 L205 763 M212 754 L218 761 M224 754 L228 758 L224 763" stroke="#ff2a2a" stroke-width="1.1" fill="none"/><text x="249" y="756" font-family="Liberation Sans" font-size="6.5" font-weight="bold" fill="#ffff00" textLength="51" lengthAdjust="spacingAndGlyphs">FFL +53.350 ROOF TOP</text><text x="306" y="756" font-family="Liberation Sans" font-size="6" font-weight="bold" fill="#ffff00" textLength="39" lengthAdjust="spacingAndGlyphs">+/- +53.350m TOP</text><text x="205" y="764" font-family="Liberation Sans" font-size="5" font-weight="bold" fill="#ffff00" textLength="7" lengthAdjust="spacingAndGlyphs">35</text><text x="220" y="766" font-family="Liberation Sans" font-size="5" font-weight="bold" fill="#ffff00" textLength="6" lengthAdjust="spacingAndGlyphs">35</text><line x1="1232" y1="757" x2="1321" y2="757" stroke="#ff2a2a" stroke-width="1.4" /><line x1="1247" y1="761" x2="1321" y2="761" stroke="#ffff00" stroke-width="1.6" /><line x1="1247" y1="764" x2="1321" y2="764" stroke="#c8c8c8" stroke-width="1" /><path d="M1232 754 L1238 761 L1232 763 M1240 754 L1246 761 M1250 754 L1254 758 L1250 763" stroke="#ff2a2a" stroke-width="1.1" fill="none"/><text x="1270" y="756" font-family="Liberation Sans" font-size="6.5" font-weight="bold" fill="#ffff00" textLength="51" lengthAdjust="spacingAndGlyphs">FFL +53.350 ROOF TOP</text><text x="1325" y="756" font-family="Liberation Sans" font-size="6" font-weight="bold" fill="#ffff00" textLength="40" lengthAdjust="spacingAndGlyphs">+/- +53.350m TOP</text><text x="1228" y="765" font-family="Liberation Sans" font-size="5" font-weight="bold" fill="#ffff00" textLength="7" lengthAdjust="spacingAndGlyphs">35</text><line x1="203" y1="827" x2="300" y2="827" stroke="#ff2a2a" stroke-width="1.4" /><line x1="215" y1="831" x2="300" y2="831" stroke="#ffff00" stroke-width="1.6" /><line x1="215" y1="834" x2="300" y2="834" stroke="#c8c8c8" stroke-width="1" /><path d="M205 824 L211 831 L205 833 M212 824 L218 831 M224 824 L228 828 L224 833" stroke="#ff2a2a" stroke-width="1.1" fill="none"/><text x="249" y="826" font-family="Liberation Sans" font-size="6.5" font-weight="bold" fill="#ffff00" textLength="51" lengthAdjust="spacingAndGlyphs">FFL +53.350 ROOF TOP</text><text x="306" y="826" font-family="Liberation Sans" font-size="6" font-weight="bold" fill="#ffff00" textLength="39" lengthAdjust="spacingAndGlyphs">+/- +53.350m TOP</text><text x="205" y="834" font-family="Liberation Sans" font-size="5" font-weight="bold" fill="#ffff00" textLength="7" lengthAdjust="spacingAndGlyphs">35</text><text x="220" y="836" font-family="Liberation Sans" font-size="5" font-weight="bold" fill="#ffff00" textLength="6" lengthAdjust="spacingAndGlyphs">35</text><line x1="1232" y1="827" x2="1321" y2="827" stroke="#ff2a2a" stroke-width="1.4" /><line x1="1247" y1="831" x2="1321" y2="831" stroke="#ffff00" stroke-width="1.6" /><line x1="1247" y1="834" x2="1321" y2="834" stroke="#c8c8c8" stroke-width="1" /><path d="M1232 824 L1238 831 L1232 833 M1240 824 L1246 831 M1250 824 L1254 828 L1250 833" stroke="#ff2a2a" stroke-width="1.1" fill="none"/><text x="1270" y="826" font-family="Liberation Sans" font-size="6.5" font-weight="bold" fill="#ffff00" textLength="51" lengthAdjust="spacingAndGlyphs">FFL +53.350 ROOF TOP</text><text x="1325" y="826" font-family="Liberation Sans" font-size="6" font-weight="bold" fill="#ffff00" textLength="40" lengthAdjust="spacingAndGlyphs">+/- +53.350m TOP</text><text x="1228" y="835" font-family="Liberation Sans" font-size="5" font-weight="bold" fill="#ffff00" textLength="7" lengthAdjust="spacingAndGlyphs">35</text><line x1="1232" y1="356" x2="1321" y2="356" stroke="#ffff00" stroke-width="1.4" /><line x1="1247" y1="360" x2="1321" y2="360" stroke="#ffff00" stroke-width="1.6" /><line x1="1247" y1="363" x2="1321" y2="363" stroke="#c8c8c8" stroke-width="1" /><path d="M1232 353 L1238 360 L1232 362 M1240 353 L1246 360 M1250 353 L1254 357 L1250 362" stroke="#ff2a2a" stroke-width="1.1" fill="none"/><text x="1270" y="355" font-family="Liberation Sans" font-size="6.5" font-weight="bold" fill="#ffff00" textLength="51" lengthAdjust="spacingAndGlyphs">ROOF +55.065 TOP</text><text x="1325" y="355" font-family="Liberation Sans" font-size="6" font-weight="bold" fill="#ffff00" textLength="40" lengthAdjust="spacingAndGlyphs">+/- +53.350m TOP</text><text x="1228" y="364" font-family="Liberation Sans" font-size="5" font-weight="bold" fill="#ffff00" textLength="7" lengthAdjust="spacingAndGlyphs">35</text><line x1="217.5" y1="381" x2="217.5" y2="836" stroke="#ff2a2a" stroke-width="1.3" /><line x1="227" y1="388" x2="227" y2="836" stroke="#ff2a2a" stroke-width="1.3" /><line x1="1238.5" y1="356" x2="1238.5" y2="836" stroke="#ff2a2a" stroke-width="1.3" /><line x1="1247.5" y1="388" x2="1247.5" y2="836" stroke="#ff2a2a" stroke-width="1.3" /><line x1="210" y1="827" x2="210" y2="838" stroke="#ff2a2a" stroke-width="1.2" /><line x1="210" y1="838" x2="300" y2="838" stroke="#ffff00" stroke-width="1.2" /><line x1="1232" y1="827" x2="1232" y2="838" stroke="#ff2a2a" stroke-width="1.2" /><line x1="1232" y1="838" x2="1321" y2="838" stroke="#ffff00" stroke-width="1.2" /><text transform="translate(213 423) rotate(-90)" font-family="Liberation Sans" font-size="6" fill="#ffff00" textLength="16" lengthAdjust="spacingAndGlyphs">3150</text><text transform="translate(224.5 423) rotate(-90)" font-family="Liberation Sans" font-size="6" fill="#ffff00" textLength="16" lengthAdjust="spacingAndGlyphs">2975</text><text transform="translate(1235 423) rotate(-90)" font-family="Liberation Sans" font-size="6" fill="#ffff00" textLength="16" lengthAdjust="spacingAndGlyphs">3150</text><text transform="translate(1245.5 423) rotate(-90)" font-family="Liberation Sans" font-size="6" fill="#ffff00" textLength="16" lengthAdjust="spacingAndGlyphs">2975</text><text transform="translate(213 477.5) rotate(-90)" font-family="Liberation Sans" font-size="6" fill="#ffff00" textLength="16" lengthAdjust="spacingAndGlyphs">3150</text><text transform="translate(224.5 477.5) rotate(-90)" font-family="Liberation Sans" font-size="6" fill="#ffff00" textLength="16" lengthAdjust="spacingAndGlyphs">2975</text><text transform="translate(1235 477.5) rotate(-90)" font-family="Liberation Sans" font-size="6" fill="#ffff00" textLength="16" lengthAdjust="spacingAndGlyphs">3150</text><text transform="translate(1245.5 477.5) rotate(-90)" font-family="Liberation Sans" font-size="6" fill="#ffff00" textLength="16" lengthAdjust="spacingAndGlyphs">2975</text><text transform="translate(213 531.5) rotate(-90)" font-family="Liberation Sans" font-size="6" fill="#ffff00" textLength="16" lengthAdjust="spacingAndGlyphs">3150</text><text transform="translate(224.5 531.5) rotate(-90)" font-family="Liberation Sans" font-size="6" fill="#ffff00" textLength="16" lengthAdjust="spacingAndGlyphs">2975</text><text transform="translate(1235 531.5) rotate(-90)" font-family="Liberation Sans" font-size="6" fill="#ffff00" textLength="16" lengthAdjust="spacingAndGlyphs">3150</text><text transform="translate(1245.5 531.5) rotate(-90)" font-family="Liberation Sans" font-size="6" fill="#ffff00" textLength="16" lengthAdjust="spacingAndGlyphs">2975</text><text transform="translate(213 584) rotate(-90)" font-family="Liberation Sans" font-size="6" fill="#ffff00" textLength="16" lengthAdjust="spacingAndGlyphs">3150</text><text transform="translate(224.5 584) rotate(-90)" font-family="Liberation Sans" font-size="6" fill="#ffff00" textLength="16" lengthAdjust="spacingAndGlyphs">2975</text><text transform="translate(1235 584) rotate(-90)" font-family="Liberation Sans" font-size="6" fill="#ffff00" textLength="16" lengthAdjust="spacingAndGlyphs">3150</text><text transform="translate(1245.5 584) rotate(-90)" font-family="Liberation Sans" font-size="6" fill="#ffff00" textLength="16" lengthAdjust="spacingAndGlyphs">2975</text><text transform="translate(213 635.5) rotate(-90)" font-family="Liberation Sans" font-size="6" fill="#ffff00" textLength="16" lengthAdjust="spacingAndGlyphs">3150</text><text transform="translate(224.5 635.5) rotate(-90)" font-family="Liberation Sans" font-size="6" fill="#ffff00" textLength="16" lengthAdjust="spacingAndGlyphs">2975</text><text transform="translate(1235 635.5) rotate(-90)" font-family="Liberation Sans" font-size="6" fill="#ffff00" textLength="16" lengthAdjust="spacingAndGlyphs">3150</text><text transform="translate(1245.5 635.5) rotate(-90)" font-family="Liberation Sans" font-size="6" fill="#ffff00" textLength="16" lengthAdjust="spacingAndGlyphs">2975</text><text transform="translate(213 687.5) rotate(-90)" font-family="Liberation Sans" font-size="6" fill="#ffff00" textLength="16" lengthAdjust="spacingAndGlyphs">3150</text><text transform="translate(224.5 687.5) rotate(-90)" font-family="Liberation Sans" font-size="6" fill="#ffff00" textLength="16" lengthAdjust="spacingAndGlyphs">2975</text><text transform="translate(1235 687.5) rotate(-90)" font-family="Liberation Sans" font-size="6" fill="#ffff00" textLength="16" lengthAdjust="spacingAndGlyphs">3150</text><text transform="translate(1245.5 687.5) rotate(-90)" font-family="Liberation Sans" font-size="6" fill="#ffff00" textLength="16" lengthAdjust="spacingAndGlyphs">2975</text><text transform="translate(213 739.5) rotate(-90)" font-family="Liberation Sans" font-size="6" fill="#ffff00" textLength="16" lengthAdjust="spacingAndGlyphs">3150</text><text transform="translate(224.5 739.5) rotate(-90)" font-family="Liberation Sans" font-size="6" fill="#ffff00" textLength="16" lengthAdjust="spacingAndGlyphs">2975</text><text transform="translate(1235 739.5) rotate(-90)" font-family="Liberation Sans" font-size="6" fill="#ffff00" textLength="16" lengthAdjust="spacingAndGlyphs">3150</text><text transform="translate(1245.5 739.5) rotate(-90)" font-family="Liberation Sans" font-size="6" fill="#ffff00" textLength="16" lengthAdjust="spacingAndGlyphs">2975</text><text transform="translate(213 800) rotate(-90)" font-family="Liberation Sans" font-size="6" fill="#ffff00" textLength="16" lengthAdjust="spacingAndGlyphs">3150</text><text transform="translate(224.5 800) rotate(-90)" font-family="Liberation Sans" font-size="6" fill="#ffff00" textLength="16" lengthAdjust="spacingAndGlyphs">2975</text><text transform="translate(1235 800) rotate(-90)" font-family="Liberation Sans" font-size="6" fill="#ffff00" textLength="16" lengthAdjust="spacingAndGlyphs">3150</text><text transform="translate(1245.5 800) rotate(-90)" font-family="Liberation Sans" font-size="6" fill="#ffff00" textLength="16" lengthAdjust="spacingAndGlyphs">2975</text><text transform="translate(1235 378) rotate(-90)" font-family="Liberation Sans" font-size="6" fill="#ffff00" textLength="16" lengthAdjust="spacingAndGlyphs">1670</text><line x1="300" y1="388" x2="378" y2="388" stroke="#ff2a2a" stroke-width="1.2" stroke-dasharray="18 4 3 4"/><line x1="1145" y1="388" x2="1238" y2="388" stroke="#ff2a2a" stroke-width="1.2" stroke-dasharray="18 4 3 4"/><line x1="300" y1="442" x2="378" y2="442" stroke="#ff2a2a" stroke-width="1.2" stroke-dasharray="18 4 3 4"/><line x1="1145" y1="442" x2="1238" y2="442" stroke="#ff2a2a" stroke-width="1.2" stroke-dasharray="18 4 3 4"/><line x1="300" y1="497" x2="378" y2="497" stroke="#ff2a2a" stroke-width="1.2" stroke-dasharray="18 4 3 4"/><line x1="1145" y1="497" x2="1238" y2="497" stroke="#ff2a2a" stroke-width="1.2" stroke-dasharray="18 4 3 4"/><line x1="300" y1="550" x2="378" y2="550" stroke="#ff2a2a" stroke-width="1.2" stroke-dasharray="18 4 3 4"/><line x1="1145" y1="550" x2="1238" y2="550" stroke="#ff2a2a" stroke-width="1.2" stroke-dasharray="18 4 3 4"/><line x1="300" y1="602" x2="378" y2="602" stroke="#ff2a2a" stroke-width="1.2" stroke-dasharray="18 4 3 4"/><line x1="1145" y1="602" x2="1238" y2="602" stroke="#ff2a2a" stroke-width="1.2" stroke-dasharray="18 4 3 4"/><line x1="300" y1="653" x2="378" y2="653" stroke="#ff2a2a" stroke-width="1.2" stroke-dasharray="18 4 3 4"/><line x1="1145" y1="653" x2="1238" y2="653" stroke="#ff2a2a" stroke-width="1.2" stroke-dasharray="18 4 3 4"/><line x1="300" y1="706" x2="378" y2="706" stroke="#ff2a2a" stroke-width="1.2" stroke-dasharray="18 4 3 4"/><line x1="1145" y1="706" x2="1238" y2="706" stroke="#ff2a2a" stroke-width="1.2" stroke-dasharray="18 4 3 4"/><line x1="300" y1="757" x2="1238" y2="757" stroke="#ff2a2a" stroke-width="1.3" stroke-dasharray="18 4 3 4"/><line x1="300" y1="827" x2="1238" y2="827" stroke="#ff2a2a" stroke-width="1.3" stroke-dasharray="18 4 3 4"/><line x1="353.5" y1="365" x2="353.5" y2="760" stroke="#ff2a2a" stroke-width="1.2" /><line x1="349" y1="368" x2="368" y2="368" stroke="#ff2a2a" stroke-width="1.4" /><line x1="349" y1="378" x2="368" y2="378" stroke="#ff2a2a" stroke-width="1.4" /><line x1="349" y1="388" x2="368" y2="388" stroke="#ff2a2a" stroke-width="1.4" /><line x1="349" y1="442" x2="368" y2="442" stroke="#ff2a2a" stroke-width="1.4" /><line x1="349" y1="455" x2="368" y2="455" stroke="#ff2a2a" stroke-width="1.4" /><line x1="349" y1="483" x2="368" y2="483" stroke="#ff2a2a" stroke-width="1.4" /><line x1="349" y1="497" x2="368" y2="497" stroke="#ff2a2a" stroke-width="1.4" /><line x1="349" y1="508" x2="368" y2="508" stroke="#ff2a2a" stroke-width="1.4" /><line x1="349" y1="537" x2="368" y2="537" stroke="#ff2a2a" stroke-width="1.4" /><line x1="349" y1="550" x2="368" y2="550" stroke="#ff2a2a" stroke-width="1.4" /><line x1="349" y1="560" x2="368" y2="560" stroke="#ff2a2a" stroke-width="1.4" /><line x1="349" y1="590" x2="368" y2="590" stroke="#ff2a2a" stroke-width="1.4" /><line x1="349" y1="602" x2="368" y2="602" stroke="#ff2a2a" stroke-width="1.4" /><line x1="349" y1="613" x2="368" y2="613" stroke="#ff2a2a" stroke-width="1.4" /><line x1="349" y1="640" x2="368" y2="640" stroke="#ff2a2a" stroke-width="1.4" /><line x1="349" y1="653" x2="368" y2="653" stroke="#ff2a2a" stroke-width="1.4" /><line x1="349" y1="665" x2="368" y2="665" stroke="#ff2a2a" stroke-width="1.4" /><line x1="349" y1="693" x2="368" y2="693" stroke="#ff2a2a" stroke-width="1.4" /><line x1="349" y1="706" x2="368" y2="706" stroke="#ff2a2a" stroke-width="1.4" /><line x1="349" y1="716" x2="368" y2="716" stroke="#ff2a2a" stroke-width="1.4" /><line x1="349" y1="748" x2="368" y2="748" stroke="#ff2a2a" stroke-width="1.4" /><line x1="349" y1="757" x2="368" y2="757" stroke="#ff2a2a" stroke-width="1.4" /><text transform="translate(347 480) rotate(-90)" font-family="Liberation Sans" font-size="5.5" fill="#ffff00" textLength="22" lengthAdjust="spacingAndGlyphs">1800 opening</text><text transform="translate(347 537) rotate(-90)" font-family="Liberation Sans" font-size="5.5" fill="#ffff00" textLength="22" lengthAdjust="spacingAndGlyphs">1800 opening</text><text transform="translate(347 589) rotate(-90)" font-family="Liberation Sans" font-size="5.5" fill="#ffff00" textLength="22" lengthAdjust="spacingAndGlyphs">1800 opening</text><text transform="translate(347 642) rotate(-90)" font-family="Liberation Sans" font-size="5.5" fill="#ffff00" textLength="22" lengthAdjust="spacingAndGlyphs">1800 opening</text><text transform="translate(347 692) rotate(-90)" font-family="Liberation Sans" font-size="5.5" fill="#ffff00" textLength="22" lengthAdjust="spacingAndGlyphs">1800 opening</text><text transform="translate(347 744) rotate(-90)" font-family="Liberation Sans" font-size="5.5" fill="#ffff00" textLength="22" lengthAdjust="spacingAndGlyphs">1800 opening</text><text transform="translate(347 385) rotate(-90)" font-family="Liberation Sans" font-size="5.5" fill="#ffff00" textLength="14" lengthAdjust="spacingAndGlyphs">900</text><line x1="1185.5" y1="425" x2="1185.5" y2="757" stroke="#ff2a2a" stroke-width="1.2" /><line x1="1165.5" y1="470" x2="1165.5" y2="700" stroke="#ff2a2a" stroke-width="1.2" /><line x1="1160" y1="430" x2="1188" y2="430" stroke="#ff2a2a" stroke-width="1.3" /><line x1="1160" y1="441" x2="1188" y2="441" stroke="#ff2a2a" stroke-width="1.3" /><line x1="1160" y1="455" x2="1188" y2="455" stroke="#ff2a2a" stroke-width="1.3" /><line x1="1160" y1="483" x2="1188" y2="483" stroke="#ff2a2a" stroke-width="1.3" /><line x1="1160" y1="497" x2="1188" y2="497" stroke="#ff2a2a" stroke-width="1.3" /><line x1="1160" y1="508" x2="1188" y2="508" stroke="#ff2a2a" stroke-width="1.3" /><line x1="1160" y1="537" x2="1188" y2="537" stroke="#ff2a2a" stroke-width="1.3" /><line x1="1160" y1="550" x2="1188" y2="550" stroke="#ff2a2a" stroke-width="1.3" /><line x1="1160" y1="560" x2="1188" y2="560" stroke="#ff2a2a" stroke-width="1.3" /><line x1="1160" y1="590" x2="1188" y2="590" stroke="#ff2a2a" stroke-width="1.3" /><line x1="1160" y1="602" x2="1188" y2="602" stroke="#ff2a2a" stroke-width="1.3" /><line x1="1160" y1="613" x2="1188" y2="613" stroke="#ff2a2a" stroke-width="1.3" /><line x1="1160" y1="640" x2="1188" y2="640" stroke="#ff2a2a" stroke-width="1.3" /><line x1="1160" y1="653" x2="1188" y2="653" stroke="#ff2a2a" stroke-width="1.3" /><line x1="1160" y1="665" x2="1188" y2="665" stroke="#ff2a2a" stroke-width="1.3" /><line x1="1160" y1="690" x2="1188" y2="690" stroke="#ff2a2a" stroke-width="1.3" /><line x1="1160" y1="706" x2="1188" y2="706" stroke="#ff2a2a" stroke-width="1.3" /><line x1="1160" y1="716" x2="1188" y2="716" stroke="#ff2a2a" stroke-width="1.3" /><line x1="1160" y1="748" x2="1188" y2="748" stroke="#ff2a2a" stroke-width="1.3" /><line x1="1160" y1="757" x2="1188" y2="757" stroke="#ff2a2a" stroke-width="1.3" /><text transform="translate(1176 480) rotate(-90)" font-family="Liberation Sans" font-size="5.5" fill="#ffff00" textLength="22" lengthAdjust="spacingAndGlyphs">1800 opening</text><text transform="translate(1196 472) rotate(-90)" font-family="Liberation Sans" font-size="5.5" fill="#ffff00" textLength="12" lengthAdjust="spacingAndGlyphs">750</text><text transform="translate(1176 537) rotate(-90)" font-family="Liberation Sans" font-size="5.5" fill="#ffff00" textLength="22" lengthAdjust="spacingAndGlyphs">1800 opening</text><text transform="translate(1196 529) rotate(-90)" font-family="Liberation Sans" font-size="5.5" fill="#ffff00" textLength="12" lengthAdjust="spacingAndGlyphs">750</text><text transform="translate(1176 589) rotate(-90)" font-family="Liberation Sans" font-size="5.5" fill="#ffff00" textLength="22" lengthAdjust="spacingAndGlyphs">1800 opening</text><text transform="translate(1196 581) rotate(-90)" font-family="Liberation Sans" font-size="5.5" fill="#ffff00" textLength="12" lengthAdjust="spacingAndGlyphs">750</text><text transform="translate(1176 642) rotate(-90)" font-family="Liberation Sans" font-size="5.5" fill="#ffff00" textLength="22" lengthAdjust="spacingAndGlyphs">1800 opening</text><text transform="translate(1196 634) rotate(-90)" font-family="Liberation Sans" font-size="5.5" fill="#ffff00" textLength="12" lengthAdjust="spacingAndGlyphs">750</text><text transform="translate(1176 692) rotate(-90)" font-family="Liberation Sans" font-size="5.5" fill="#ffff00" textLength="22" lengthAdjust="spacingAndGlyphs">1800 opening</text><text transform="translate(1196 684) rotate(-90)" font-family="Liberation Sans" font-size="5.5" fill="#ffff00" textLength="12" lengthAdjust="spacingAndGlyphs">750</text><text transform="translate(1176 744) rotate(-90)" font-family="Liberation Sans" font-size="5.5" fill="#ffff00" textLength="22" lengthAdjust="spacingAndGlyphs">1800 opening</text><text transform="translate(1196 736) rotate(-90)" font-family="Liberation Sans" font-size="5.5" fill="#ffff00" textLength="12" lengthAdjust="spacingAndGlyphs">750</text><rect x="1206" y="425" width="7" height="330" fill="#9a9a9a" stroke="none" stroke-width="1" /><path d="M1207 430 V750 M1211 428 V752" stroke="#c8c8c8" stroke-width="0.8" stroke-dasharray="5 3"/><text transform="translate(1204 615) rotate(-90)" font-family="Liberation Sans" font-size="6" fill="#ffff00" textLength="40" lengthAdjust="spacingAndGlyphs">BRICK COURSING</text><line x1="498.3" y1="328" x2="498.3" y2="368" stroke="#ff2a2a" stroke-width="1.2" stroke-dasharray="8 3 2 3"/><circle cx="498.3" cy="322.5" r="5.8" fill="#fff" stroke="#22e022" stroke-width="1.8"/><rect x="495.8" y="321" width="5" height="3" fill="#ffff00" opacity="0.85"/><line x1="544" y1="328" x2="544" y2="368" stroke="#ff2a2a" stroke-width="1.2" stroke-dasharray="8 3 2 3"/><circle cx="544" cy="322.5" r="5.8" fill="#fff" stroke="#22e022" stroke-width="1.8"/><rect x="541.5" y="321" width="5" height="3" fill="#ffff00" opacity="0.85"/><line x1="575.3" y1="328" x2="575.3" y2="368" stroke="#ff2a2a" stroke-width="1.2" stroke-dasharray="8 3 2 3"/><circle cx="575.3" cy="322.5" r="5.8" fill="#fff" stroke="#22e022" stroke-width="1.8"/><rect x="572.8" y="321" width="5" height="3" fill="#ffff00" opacity="0.85"/><line x1="620" y1="328" x2="620" y2="368" stroke="#ff2a2a" stroke-width="1.2" stroke-dasharray="8 3 2 3"/><circle cx="620" cy="322.5" r="5.8" fill="#fff" stroke="#22e022" stroke-width="1.8"/><rect x="617.5" y="321" width="5" height="3" fill="#ffff00" opacity="0.85"/><line x1="669.5" y1="328" x2="669.5" y2="368" stroke="#ff2a2a" stroke-width="1.2" stroke-dasharray="8 3 2 3"/><circle cx="669.5" cy="322.5" r="5.8" fill="#fff" stroke="#22e022" stroke-width="1.8"/><rect x="667" y="321" width="5" height="3" fill="#ffff00" opacity="0.85"/><line x1="732.5" y1="328" x2="732.5" y2="368" stroke="#ff2a2a" stroke-width="1.2" stroke-dasharray="8 3 2 3"/><circle cx="732.5" cy="322.5" r="5.8" fill="#fff" stroke="#22e022" stroke-width="1.8"/><rect x="730" y="321" width="5" height="3" fill="#ffff00" opacity="0.85"/><line x1="810.9" y1="328" x2="810.9" y2="368" stroke="#ff2a2a" stroke-width="1.2" stroke-dasharray="8 3 2 3"/><circle cx="810.9" cy="322.5" r="5.8" fill="#fff" stroke="#22e022" stroke-width="1.8"/><rect x="808.4" y="321" width="5" height="3" fill="#ffff00" opacity="0.85"/><line x1="866.8" y1="328" x2="866.8" y2="368" stroke="#ff2a2a" stroke-width="1.2" stroke-dasharray="8 3 2 3"/><circle cx="866.8" cy="322.5" r="5.8" fill="#fff" stroke="#22e022" stroke-width="1.8"/><rect x="864.3" y="321" width="5" height="3" fill="#ffff00" opacity="0.85"/><line x1="995.5" y1="328" x2="995.5" y2="368" stroke="#ff2a2a" stroke-width="1.2" stroke-dasharray="8 3 2 3"/><circle cx="995.5" cy="322.5" r="5.8" fill="#fff" stroke="#22e022" stroke-width="1.8"/><rect x="993" y="321" width="5" height="3" fill="#ffff00" opacity="0.85"/><line x1="1051.4" y1="328" x2="1051.4" y2="368" stroke="#ff2a2a" stroke-width="1.2" stroke-dasharray="8 3 2 3"/><circle cx="1051.4" cy="322.5" r="5.8" fill="#fff" stroke="#22e022" stroke-width="1.8"/><rect x="1048.9" y="321" width="5" height="3" fill="#ffff00" opacity="0.85"/><line x1="1130.2" y1="328" x2="1130.2" y2="368" stroke="#ff2a2a" stroke-width="1.2" stroke-dasharray="8 3 2 3"/><circle cx="1130.2" cy="322.5" r="5.8" fill="#fff" stroke="#22e022" stroke-width="1.8"/><rect x="1127.7" y="321" width="5" height="3" fill="#ffff00" opacity="0.85"/><line x1="931.3" y1="331" x2="931.3" y2="368" stroke="#ff2a2a" stroke-width="1.3" /><circle cx="931.3" cy="322.5" r="8.3" fill="#fff" stroke="#22e022" stroke-width="1.8"/><rect x="925" y="320.5" width="12" height="4" fill="#ffff00" opacity="0.8"/><line x1="692" y1="312" x2="692" y2="340" stroke="#ffff00" stroke-width="1.4" /><line x1="771.3" y1="312" x2="771.3" y2="340" stroke="#ffff00" stroke-width="1.4" /><line x1="924.2" y1="312" x2="924.2" y2="340" stroke="#ffff00" stroke-width="1.4" /><line x1="1020.5" y1="312" x2="1020.5" y2="340" stroke="#ffff00" stroke-width="1.4" /><line x1="771.3" y1="262" x2="771.3" y2="290" stroke="#ffff00" stroke-width="1.4" /><line x1="924.2" y1="262" x2="924.2" y2="290" stroke="#ffff00" stroke-width="1.4" /><path d="M692 288.8 L706 300.8 L692 312.8 Z" fill="#ff2a2a" stroke="#ff2a2a" stroke-width="1"/><circle cx="692" cy="300.8" r="8.8" fill="#fff" stroke="#ff2a2a" stroke-width="1.6"/><line x1="683.5" y1="300.8" x2="700.5" y2="300.8" stroke="#ff2a2a" stroke-width="1.2"/><text x="692" y="299.3" font-family="Liberation Sans" font-size="6" font-weight="bold" fill="#ffff00" text-anchor="middle">4</text><rect x="687" y="303.3" width="10" height="3" fill="#ffff00" opacity="0.9"/><path d="M771.3 288.8 L757.3 300.8 L771.3 312.8 Z" fill="#ff2a2a" stroke="#ff2a2a" stroke-width="1"/><circle cx="771.3" cy="300.8" r="8.8" fill="#fff" stroke="#ff2a2a" stroke-width="1.6"/><line x1="762.8" y1="300.8" x2="779.8" y2="300.8" stroke="#ff2a2a" stroke-width="1.2"/><text x="771.3" y="299.3" font-family="Liberation Sans" font-size="6" font-weight="bold" fill="#ffff00" text-anchor="middle">4</text><rect x="766.3" y="303.3" width="10" height="3" fill="#ffff00" opacity="0.9"/><path d="M771.3 238.6 L757.3 250.6 L771.3 262.6 Z" fill="#ff2a2a" stroke="#ff2a2a" stroke-width="1"/><circle cx="771.3" cy="250.6" r="8.8" fill="#fff" stroke="#ff2a2a" stroke-width="1.6"/><line x1="762.8" y1="250.6" x2="779.8" y2="250.6" stroke="#ff2a2a" stroke-width="1.2"/><text x="771.3" y="249.1" font-family="Liberation Sans" font-size="6" font-weight="bold" fill="#ffff00" text-anchor="middle">4</text><rect x="766.3" y="253.1" width="10" height="3" fill="#ffff00" opacity="0.9"/><path d="M924.2 239.6 L938.2 251.6 L924.2 263.6 Z" fill="#ff2a2a" stroke="#ff2a2a" stroke-width="1"/><circle cx="924.2" cy="251.6" r="8.8" fill="#fff" stroke="#ff2a2a" stroke-width="1.6"/><line x1="915.7" y1="251.6" x2="932.7" y2="251.6" stroke="#ff2a2a" stroke-width="1.2"/><text x="924.2" y="250.1" font-family="Liberation Sans" font-size="6" font-weight="bold" fill="#ffff00" text-anchor="middle">4</text><rect x="919.2" y="254.1" width="10" height="3" fill="#ffff00" opacity="0.9"/><path d="M924.2 289 L938.2 301 L924.2 313 Z" fill="#ff2a2a" stroke="#ff2a2a" stroke-width="1"/><circle cx="924.2" cy="301" r="8.8" fill="#fff" stroke="#ff2a2a" stroke-width="1.6"/><line x1="915.7" y1="301" x2="932.7" y2="301" stroke="#ff2a2a" stroke-width="1.2"/><text x="924.2" y="299.5" font-family="Liberation Sans" font-size="6" font-weight="bold" fill="#ffff00" text-anchor="middle">4</text><rect x="919.2" y="303.5" width="10" height="3" fill="#ffff00" opacity="0.9"/><path d="M1020.5 289 L1034.5 301 L1020.5 313 Z" fill="#ff2a2a" stroke="#ff2a2a" stroke-width="1"/><circle cx="1020.5" cy="301" r="8.8" fill="#fff" stroke="#ff2a2a" stroke-width="1.6"/><line x1="1012" y1="301" x2="1029" y2="301" stroke="#ff2a2a" stroke-width="1.2"/><text x="1020.5" y="299.5" font-family="Liberation Sans" font-size="6" font-weight="bold" fill="#ffff00" text-anchor="middle">4</text><rect x="1015.5" y="303.5" width="10" height="3" fill="#ffff00" opacity="0.9"/><rect x="377" y="488" width="161" height="269" fill="url(#brick)" stroke="none" stroke-width="1" /><rect x="538" y="430" width="602" height="327" fill="url(#grayf)" stroke="none" stroke-width="1" /><rect x="872" y="432" width="120" height="325" fill="url(#brick)" stroke="none" stroke-width="1" /><line x1="872" y1="432" x2="872" y2="757" stroke="#ffff00" stroke-width="1" /><line x1="992" y1="432" x2="992" y2="757" stroke="#ffff00" stroke-width="1" /><line x1="889" y1="432" x2="889" y2="757" stroke="#ffff00" stroke-width="0.8" /><line x1="975" y1="432" x2="975" y2="757" stroke="#ffff00" stroke-width="0.8" /><rect x="1140" y="425" width="18" height="185" fill="#ffffff" stroke="#9a9a9a" stroke-width="1" /><rect x="1141" y="428" width="6" height="180" fill="#a8a8a8" stroke="none" stroke-width="1" /><line x1="544" y1="440" x2="544" y2="775" stroke="#ff2a2a" stroke-width="0.8" stroke-dasharray="10 3 2 3" opacity="0.55"/><line x1="575.3" y1="440" x2="575.3" y2="775" stroke="#ff2a2a" stroke-width="0.8" stroke-dasharray="10 3 2 3" opacity="0.55"/><line x1="620" y1="440" x2="620" y2="775" stroke="#ff2a2a" stroke-width="0.8" stroke-dasharray="10 3 2 3" opacity="0.55"/><line x1="669.5" y1="440" x2="669.5" y2="775" stroke="#ff2a2a" stroke-width="0.8" stroke-dasharray="10 3 2 3" opacity="0.55"/><line x1="732.5" y1="440" x2="732.5" y2="775" stroke="#ff2a2a" stroke-width="0.8" stroke-dasharray="10 3 2 3" opacity="0.55"/><line x1="810.9" y1="440" x2="810.9" y2="775" stroke="#ff2a2a" stroke-width="0.8" stroke-dasharray="10 3 2 3" opacity="0.55"/><line x1="866.8" y1="440" x2="866.8" y2="775" stroke="#ff2a2a" stroke-width="0.8" stroke-dasharray="10 3 2 3" opacity="0.55"/><line x1="995.5" y1="440" x2="995.5" y2="775" stroke="#ff2a2a" stroke-width="0.8" stroke-dasharray="10 3 2 3" opacity="0.55"/><line x1="1051.4" y1="440" x2="1051.4" y2="775" stroke="#ff2a2a" stroke-width="0.8" stroke-dasharray="10 3 2 3" opacity="0.55"/><line x1="1130.2" y1="440" x2="1130.2" y2="775" stroke="#ff2a2a" stroke-width="0.8" stroke-dasharray="10 3 2 3" opacity="0.55"/><line x1="498.3" y1="440" x2="498.3" y2="775" stroke="#ff2a2a" stroke-width="0.8" stroke-dasharray="10 3 2 3" opacity="0.55"/><line x1="498.3" y1="759" x2="498.3" y2="775" stroke="#ff2a2a" stroke-width="1.2" /><line x1="544" y1="759" x2="544" y2="775" stroke="#ff2a2a" stroke-width="1.2" /><line x1="575.3" y1="759" x2="575.3" y2="775" stroke="#ff2a2a" stroke-width="1.2" /><line x1="620" y1="759" x2="620" y2="775" stroke="#ff2a2a" stroke-width="1.2" /><line x1="669.5" y1="759" x2="669.5" y2="775" stroke="#ff2a2a" stroke-width="1.2" /><line x1="732.5" y1="759" x2="732.5" y2="775" stroke="#ff2a2a" stroke-width="1.2" /><line x1="810.9" y1="759" x2="810.9" y2="775" stroke="#ff2a2a" stroke-width="1.2" /><line x1="866.8" y1="759" x2="866.8" y2="775" stroke="#ff2a2a" stroke-width="1.2" /><line x1="931.3" y1="759" x2="931.3" y2="775" stroke="#ff2a2a" stroke-width="1.2" /><line x1="995.5" y1="759" x2="995.5" y2="775" stroke="#ff2a2a" stroke-width="1.2" /><line x1="1051.4" y1="759" x2="1051.4" y2="775" stroke="#ff2a2a" stroke-width="1.2" /><line x1="1130.2" y1="759" x2="1130.2" y2="775" stroke="#ff2a2a" stroke-width="1.2" /><line x1="378" y1="442" x2="1145" y2="442" stroke="#ff2a2a" stroke-width="0.9" stroke-dasharray="12 3 2 3" opacity="0.6"/><line x1="378" y1="497" x2="1145" y2="497" stroke="#ff2a2a" stroke-width="0.9" stroke-dasharray="12 3 2 3" opacity="0.6"/><line x1="378" y1="550" x2="1145" y2="550" stroke="#ff2a2a" stroke-width="0.9" stroke-dasharray="12 3 2 3" opacity="0.6"/><line x1="378" y1="602" x2="1145" y2="602" stroke="#ff2a2a" stroke-width="0.9" stroke-dasharray="12 3 2 3" opacity="0.6"/><line x1="378" y1="653" x2="1145" y2="653" stroke="#ff2a2a" stroke-width="0.9" stroke-dasharray="12 3 2 3" opacity="0.6"/><line x1="378" y1="706" x2="1145" y2="706" stroke="#ff2a2a" stroke-width="0.9" stroke-dasharray="12 3 2 3" opacity="0.6"/><rect x="764" y="356" width="326" height="21" fill="#f4f4f4" stroke="#ffff00" stroke-width="1.4" /><line x1="766" y1="359" x2="1088" y2="359" stroke="#808080" stroke-width="0.9" /><line x1="766" y1="361.5" x2="1088" y2="361.5" stroke="#909090" stroke-width="0.9" /><line x1="766" y1="364" x2="1088" y2="364" stroke="#a0a0a0" stroke-width="0.9" /><line x1="766" y1="367" x2="1088" y2="367" stroke="#b0b0b0" stroke-width="0.9" /><line x1="766" y1="370" x2="1088" y2="370" stroke="#b8b8b8" stroke-width="0.9" /><line x1="766" y1="373" x2="1088" y2="373" stroke="#c0c0c0" stroke-width="0.9" /><line x1="766" y1="375.5" x2="1088" y2="375.5" stroke="#888" stroke-width="0.9" /><rect x="842" y="347" width="20" height="9" fill="none" stroke="#b0b0b0" stroke-width="1" /><rect x="996" y="347" width="22" height="9" fill="none" stroke="#b0b0b0" stroke-width="1" /><rect x="735" y="377" width="400" height="3.5" fill="#ffff00" stroke="none" stroke-width="1" /><rect x="735" y="380" width="400" height="2" fill="#ff2a2a" stroke="none" stroke-width="1" /><rect x="402" y="368" width="333" height="20" fill="#ffffff" stroke="#ff2a2a" stroke-width="1.4" /><line x1="404" y1="368" x2="404" y2="388" stroke="#ff2a2a" stroke-width="1.2" /><line x1="410" y1="370" x2="410" y2="388" stroke="#c0c0c0" stroke-width="1" /><line x1="417" y1="368" x2="417" y2="388" stroke="#ff2a2a" stroke-width="1.2" /><line x1="423" y1="370" x2="423" y2="388" stroke="#c0c0c0" stroke-width="1" /><line x1="430" y1="368" x2="430" y2="388" stroke="#ff2a2a" stroke-width="1.2" /><line x1="436" y1="370" x2="436" y2="388" stroke="#c0c0c0" stroke-width="1" /><line x1="443" y1="368" x2="443" y2="388" stroke="#ff2a2a" stroke-width="1.2" /><line x1="449" y1="370" x2="449" y2="388" stroke="#c0c0c0" stroke-width="1" /><line x1="456" y1="368" x2="456" y2="388" stroke="#ff2a2a" stroke-width="1.2" /><line x1="462" y1="370" x2="462" y2="388" stroke="#c0c0c0" stroke-width="1" /><line x1="469" y1="368" x2="469" y2="388" stroke="#ff2a2a" stroke-width="1.2" /><line x1="475" y1="370" x2="475" y2="388" stroke="#c0c0c0" stroke-width="1" /><line x1="482" y1="368" x2="482" y2="388" stroke="#ff2a2a" stroke-width="1.2" /><line x1="488" y1="370" x2="488" y2="388" stroke="#c0c0c0" stroke-width="1" /><line x1="495" y1="368" x2="495" y2="388" stroke="#ff2a2a" stroke-width="1.2" /><line x1="501" y1="370" x2="501" y2="388" stroke="#c0c0c0" stroke-width="1" /><line x1="508" y1="368" x2="508" y2="388" stroke="#ff2a2a" stroke-width="1.2" /><line x1="514" y1="370" x2="514" y2="388" stroke="#c0c0c0" stroke-width="1" /><line x1="521" y1="368" x2="521" y2="388" stroke="#ff2a2a" stroke-width="1.2" /><line x1="527" y1="370" x2="527" y2="388" stroke="#c0c0c0" stroke-width="1" /><line x1="534" y1="368" x2="534" y2="388" stroke="#ff2a2a" stroke-width="1.2" /><line x1="540" y1="370" x2="540" y2="388" stroke="#c0c0c0" stroke-width="1" /><line x1="547" y1="368" x2="547" y2="388" stroke="#ff2a2a" stroke-width="1.2" /><line x1="553" y1="370" x2="553" y2="388" stroke="#c0c0c0" stroke-width="1" /><line x1="560" y1="368" x2="560" y2="388" stroke="#ff2a2a" stroke-width="1.2" /><line x1="566" y1="370" x2="566" y2="388" stroke="#c0c0c0" stroke-width="1" /><line x1="573" y1="368" x2="573" y2="388" stroke="#ff2a2a" stroke-width="1.2" /><line x1="579" y1="370" x2="579" y2="388" stroke="#c0c0c0" stroke-width="1" /><line x1="586" y1="368" x2="586" y2="388" stroke="#ff2a2a" stroke-width="1.2" /><line x1="592" y1="370" x2="592" y2="388" stroke="#c0c0c0" stroke-width="1" /><line x1="599" y1="368" x2="599" y2="388" stroke="#ff2a2a" stroke-width="1.2" /><line x1="605" y1="370" x2="605" y2="388" stroke="#c0c0c0" stroke-width="1" /><line x1="612" y1="368" x2="612" y2="388" stroke="#ff2a2a" stroke-width="1.2" /><line x1="618" y1="370" x2="618" y2="388" stroke="#c0c0c0" stroke-width="1" /><line x1="625" y1="368" x2="625" y2="388" stroke="#ff2a2a" stroke-width="1.2" /><line x1="631" y1="370" x2="631" y2="388" stroke="#c0c0c0" stroke-width="1" /><line x1="638" y1="368" x2="638" y2="388" stroke="#ff2a2a" stroke-width="1.2" /><line x1="644" y1="370" x2="644" y2="388" stroke="#c0c0c0" stroke-width="1" /><line x1="651" y1="368" x2="651" y2="388" stroke="#ff2a2a" stroke-width="1.2" /><line x1="657" y1="370" x2="657" y2="388" stroke="#c0c0c0" stroke-width="1" /><line x1="664" y1="368" x2="664" y2="388" stroke="#ff2a2a" stroke-width="1.2" /><line x1="670" y1="370" x2="670" y2="388" stroke="#c0c0c0" stroke-width="1" /><line x1="677" y1="368" x2="677" y2="388" stroke="#ff2a2a" stroke-width="1.2" /><line x1="683" y1="370" x2="683" y2="388" stroke="#c0c0c0" stroke-width="1" /><line x1="690" y1="368" x2="690" y2="388" stroke="#ff2a2a" stroke-width="1.2" /><line x1="696" y1="370" x2="696" y2="388" stroke="#c0c0c0" stroke-width="1" /><line x1="703" y1="368" x2="703" y2="388" stroke="#ff2a2a" stroke-width="1.2" /><line x1="709" y1="370" x2="709" y2="388" stroke="#c0c0c0" stroke-width="1" /><line x1="716" y1="368" x2="716" y2="388" stroke="#ff2a2a" stroke-width="1.2" /><line x1="722" y1="370" x2="722" y2="388" stroke="#c0c0c0" stroke-width="1" /><line x1="729" y1="368" x2="729" y2="388" stroke="#ff2a2a" stroke-width="1.2" /><line x1="735" y1="370" x2="735" y2="388" stroke="#c0c0c0" stroke-width="1" /><rect x="453" y="358" width="38" height="20" fill="#c4c4c4" stroke="#00e8f0" stroke-width="1.5" /><rect x="587" y="358" width="26" height="20" fill="#c4c4c4" stroke="#00e8f0" stroke-width="1.5" /><line x1="402" y1="378" x2="735" y2="378" stroke="#ffff00" stroke-width="1.2" /><path d="M395 373Q398 375.5 401 373Q404 370.5 407 373Q410 375.5 413 373Q416.1 370.5 419.1 373Q422.1 375.5 425.1 373Q428.1 370.5 431.1 373Q434.1 375.5 437.1 373Q440.1 370.5 443.1 373Q446.1 375.5 449.1 373Q452.2 370.5 455.2 373Q458.2 375.5 461.2 373Q464.2 370.5 467.2 373Q470.2 375.5 473.2 373Q476.2 370.5 479.2 373Q482.2 375.5 485.2 373Q488.3 370.5 491.3 373Q494.3 375.5 497.3 373Q500.3 370.5 503.3 373Q506.3 375.5 509.3 373Q512.3 370.5 515.3 373Q518.3 375.5 521.3 373Q524.3 370.5 527.4 373Q530.4 375.5 533.4 373Q536.4 370.5 539.4 373Q542.4 375.5 545.4 373Q548.4 370.5 551.4 373Q554.4 375.5 557.4 373Q560.4 370.5 563.5 373Q566.5 375.5 569.5 373Q572.5 370.5 575.5 373Q578.5 375.5 581.5 373Q584.5 370.5 587.5 373Q590.5 375.5 593.5 373Q596.5 370.5 599.6 373Q602.6 375.5 605.6 373Q608.6 370.5 611.6 373Q614.6 375.5 617.6 373Q620.6 370.5 623.6 373Q626.6 375.5 629.6 373Q632.6 370.5 635.7 373Q638.7 375.5 641.7 373Q644.7 370.5 647.7 373Q650.7 375.5 653.7 373Q656.7 370.5 659.7 373Q662.7 375.5 665.7 373Q668.7 370.5 671.7 373Q674.8 375.5 677.8 373Q680.8 370.5 683.8 373Q686.8 375.5 689.8 373Q692.8 370.5 695.8 373Q698.8 375.5 701.8 373Q704.8 370.5 707.8 373Q710.9 375.5 713.9 373Q716.9 370.5 719.9 373Q722.9 375.5 725.9 373Q728.9 370.5 731.9 373Q734.9 375.5 737.9 373Q740.9 370.5 743.9 373Q747 375.5 750 373Q753 370.5 756 373Q759 375.5 762 373Q765 370.5 768 373Q771 375.5 774 373Q777 370.5 780 373Q783 375.5 786.1 373Q789.1 370.5 792.1 373Q795.1 375.5 798.1 373Q801.1 370.5 804.1 373Q807.1 375.5 810.1 373Q813.1 370.5 816.1 373Q819.1 375.5 822.2 373Q825.2 370.5 828.2 373Q831.2 375.5 834.2 373Q837.2 370.5 840.2 373Q843.2 375.5 846.2 373Q849.2 370.5 852.2 373Q855.2 375.5 858.3 373Q861.3 370.5 864.3 373Q867.3 375.5 870.3 373Q873.3 370.5 876.3 373Q879.3 375.5 882.3 373Q885.3 370.5 888.3 373Q891.3 375.5 894.3 373Q897.4 370.5 900.4 373Q903.4 375.5 906.4 373Q909.4 370.5 912.4 373Q915.4 375.5 918.4 373Q921.4 370.5 924.4 373Q927.4 375.5 930.4 373Q933.5 370.5 936.5 373Q939.5 375.5 942.5 373Q945.5 370.5 948.5 373Q951.5 375.5 954.5 373Q957.5 370.5 960.5 373Q963.5 375.5 966.5 373Q969.6 370.5 972.6 373Q975.6 375.5 978.6 373Q981.6 370.5 984.6 373Q987.6 375.5 990.6 373Q993.6 370.5 996.6 373Q999.6 375.5 1002.6 373Q1005.7 370.5 1008.7 373Q1011.7 375.5 1014.7 373Q1017.7 370.5 1020.7 373Q1023.7 375.5 1026.7 373Q1029.7 370.5 1032.7 373Q1035.7 375.5 1038.7 373Q1041.7 370.5 1044.8 373Q1047.8 375.5 1050.8 373Q1053.8 370.5 1056.8 373Q1059.8 375.5 1062.8 373Q1065.8 370.5 1068.8 373Q1071.8 375.5 1074.8 373Q1077.8 370.5 1080.9 373Q1083.9 375.5 1086.9 373Q1089.9 370.5 1092.9 373Q1095.9 375.5 1098.9 373Q1101.9 370.5 1104.9 373Q1107.9 375.5 1110.9 373Q1113.9 370.5 1117 373Q1120 375.5 1123 373Q1126 370.5 1129 373Q1132 375.5 1135 373" stroke="#ffff00" stroke-width="1.1" fill="none"/><path d="M380 391 L735 390 L735 393 L400 394Z" fill="#ffff00"/><line x1="395" y1="396.5" x2="735" y2="396.5" stroke="#ffff00" stroke-width="1.5" /><line x1="404" y1="398" x2="414" y2="402" stroke="#ff2a2a" stroke-width="1.2" /><line x1="417" y1="398" x2="427" y2="402" stroke="#ff2a2a" stroke-width="1.2" /><line x1="430" y1="398" x2="440" y2="402" stroke="#ff2a2a" stroke-width="1.2" /><line x1="443" y1="398" x2="453" y2="402" stroke="#ff2a2a" stroke-width="1.2" /><line x1="456" y1="398" x2="466" y2="402" stroke="#ff2a2a" stroke-width="1.2" /><line x1="469" y1="398" x2="479" y2="402" stroke="#ff2a2a" stroke-width="1.2" /><line x1="482" y1="398" x2="492" y2="402" stroke="#ff2a2a" stroke-width="1.2" /><line x1="495" y1="398" x2="505" y2="402" stroke="#ff2a2a" stroke-width="1.2" /><line x1="508" y1="398" x2="518" y2="402" stroke="#ff2a2a" stroke-width="1.2" /><line x1="521" y1="398" x2="531" y2="402" stroke="#ff2a2a" stroke-width="1.2" /><line x1="534" y1="398" x2="544" y2="402" stroke="#ff2a2a" stroke-width="1.2" /><line x1="547" y1="398" x2="557" y2="402" stroke="#ff2a2a" stroke-width="1.2" /><line x1="560" y1="398" x2="570" y2="402" stroke="#ff2a2a" stroke-width="1.2" /><line x1="573" y1="398" x2="583" y2="402" stroke="#ff2a2a" stroke-width="1.2" /><line x1="586" y1="398" x2="596" y2="402" stroke="#ff2a2a" stroke-width="1.2" /><line x1="599" y1="398" x2="609" y2="402" stroke="#ff2a2a" stroke-width="1.2" /><line x1="612" y1="398" x2="622" y2="402" stroke="#ff2a2a" stroke-width="1.2" /><line x1="625" y1="398" x2="635" y2="402" stroke="#ff2a2a" stroke-width="1.2" /><line x1="638" y1="398" x2="648" y2="402" stroke="#ff2a2a" stroke-width="1.2" /><line x1="651" y1="398" x2="661" y2="402" stroke="#ff2a2a" stroke-width="1.2" /><line x1="664" y1="398" x2="674" y2="402" stroke="#ff2a2a" stroke-width="1.2" /><line x1="677" y1="398" x2="687" y2="402" stroke="#ff2a2a" stroke-width="1.2" /><line x1="690" y1="398" x2="700" y2="402" stroke="#ff2a2a" stroke-width="1.2" /><line x1="703" y1="398" x2="713" y2="402" stroke="#ff2a2a" stroke-width="1.2" /><line x1="716" y1="398" x2="726" y2="402" stroke="#ff2a2a" stroke-width="1.2" /><line x1="729" y1="398" x2="739" y2="402" stroke="#ff2a2a" stroke-width="1.2" /><rect x="402" y="399" width="333" height="3" fill="#ff2a2a" stroke="none" stroke-width="1" /><rect x="402" y="402" width="333" height="24" fill="#ffffff" stroke="#ff2a2a" stroke-width="1.5" /><rect x="403" y="403" width="15" height="22" fill="url(#hatch)" stroke="none" stroke-width="1" /><rect x="467" y="403" width="49" height="22" fill="url(#hatch)" stroke="none" stroke-width="1" /><rect x="533" y="403" width="81" height="22" fill="url(#hatch)" stroke="none" stroke-width="1" /><rect x="683" y="403" width="44" height="22" fill="url(#hatch)" stroke="none" stroke-width="1" /><line x1="402" y1="402" x2="402" y2="426" stroke="#ff2a2a" stroke-width="1.4" /><line x1="410" y1="402" x2="410" y2="426" stroke="#ff2a2a" stroke-width="1.4" /><line x1="418" y1="402" x2="418" y2="426" stroke="#ff2a2a" stroke-width="1.4" /><line x1="430" y1="402" x2="430" y2="426" stroke="#ff2a2a" stroke-width="1.4" /><line x1="455" y1="402" x2="455" y2="426" stroke="#ff2a2a" stroke-width="1.4" /><line x1="467" y1="402" x2="467" y2="426" stroke="#ff2a2a" stroke-width="1.4" /><line x1="483" y1="402" x2="483" y2="426" stroke="#ff2a2a" stroke-width="1.4" /><line x1="500" y1="402" x2="500" y2="426" stroke="#ff2a2a" stroke-width="1.4" /><line x1="516" y1="402" x2="516" y2="426" stroke="#ff2a2a" stroke-width="1.4" /><line x1="533" y1="402" x2="533" y2="426" stroke="#ff2a2a" stroke-width="1.4" /><line x1="550" y1="402" x2="550" y2="426" stroke="#ff2a2a" stroke-width="1.4" /><line x1="567" y1="402" x2="567" y2="426" stroke="#ff2a2a" stroke-width="1.4" /><line x1="584" y1="402" x2="584" y2="426" stroke="#ff2a2a" stroke-width="1.4" /><line x1="600" y1="402" x2="600" y2="426" stroke="#ff2a2a" stroke-width="1.4" /><line x1="614" y1="402" x2="614" y2="426" stroke="#ff2a2a" stroke-width="1.4" /><line x1="632" y1="402" x2="632" y2="426" stroke="#ff2a2a" stroke-width="1.4" /><line x1="650" y1="402" x2="650" y2="426" stroke="#ff2a2a" stroke-width="1.4" /><line x1="668" y1="402" x2="668" y2="426" stroke="#ff2a2a" stroke-width="1.4" /><line x1="683" y1="402" x2="683" y2="426" stroke="#ff2a2a" stroke-width="1.4" /><line x1="700" y1="402" x2="700" y2="426" stroke="#ff2a2a" stroke-width="1.4" /><line x1="715" y1="402" x2="715" y2="426" stroke="#ff2a2a" stroke-width="1.4" /><line x1="727" y1="402" x2="727" y2="426" stroke="#ff2a2a" stroke-width="1.4" /><line x1="735" y1="402" x2="735" y2="426" stroke="#ff2a2a" stroke-width="1.4" /><rect x="516" y="403" width="17" height="22" fill="#ffffff" stroke="#ff2a2a" stroke-width="1.6" /><path d="M516 411.8 L533 403 M516 411.8 L533 425 M533 412.9 L516 403 M524.5 403 L521.1 425" stroke="#ff2a2a" stroke-width="0.9" fill="none" stroke-dasharray="3 1.5"/><rect x="614" y="403" width="18" height="22" fill="#ffffff" stroke="#ff2a2a" stroke-width="1.6" /><path d="M614 411.8 L632 403 M614 411.8 L632 425 M632 412.9 L614 403 M623 403 L619.4 425" stroke="#ff2a2a" stroke-width="0.9" fill="none" stroke-dasharray="3 1.5"/><rect x="650" y="403" width="18" height="22" fill="#ffffff" stroke="#ff2a2a" stroke-width="1.6" /><path d="M650 411.8 L668 403 M650 411.8 L668 425 M668 412.9 L650 403 M659 403 L655.4 425" stroke="#ff2a2a" stroke-width="0.9" fill="none" stroke-dasharray="3 1.5"/><rect x="428" y="412" width="28" height="3" fill="#ffff00" stroke="none" stroke-width="1" /><rect x="386" y="425" width="349" height="13" fill="#00e8f0" stroke="#ff2a2a" stroke-width="1.2" /><rect x="386" y="425" width="2.5" height="13" fill="#ff2a2a" stroke="none" stroke-width="1" /><rect x="400.5" y="425" width="2.5" height="13" fill="#ff2a2a" stroke="none" stroke-width="1" /><rect x="415" y="425" width="2.5" height="13" fill="#ff2a2a" stroke="none" stroke-width="1" /><rect x="429.5" y="425" width="2.5" height="13" fill="#ff2a2a" stroke="none" stroke-width="1" /><rect x="444" y="425" width="2.5" height="13" fill="#ff2a2a" stroke="none" stroke-width="1" /><rect x="458.5" y="425" width="2.5" height="13" fill="#ff2a2a" stroke="none" stroke-width="1" /><rect x="473" y="425" width="2.5" height="13" fill="#ff2a2a" stroke="none" stroke-width="1" /><rect x="487.5" y="425" width="2.5" height="13" fill="#ff2a2a" stroke="none" stroke-width="1" /><rect x="502" y="425" width="2.5" height="13" fill="#ff2a2a" stroke="none" stroke-width="1" /><rect x="516.5" y="425" width="2.5" height="13" fill="#ff2a2a" stroke="none" stroke-width="1" /><rect x="531" y="425" width="2.5" height="13" fill="#ff2a2a" stroke="none" stroke-width="1" /><rect x="545.5" y="425" width="2.5" height="13" fill="#ff2a2a" stroke="none" stroke-width="1" /><rect x="560" y="425" width="2.5" height="13" fill="#ff2a2a" stroke="none" stroke-width="1" /><rect x="574.5" y="425" width="2.5" height="13" fill="#ff2a2a" stroke="none" stroke-width="1" /><rect x="589" y="425" width="2.5" height="13" fill="#ff2a2a" stroke="none" stroke-width="1" /><rect x="603.5" y="425" width="2.5" height="13" fill="#ff2a2a" stroke="none" stroke-width="1" /><rect x="618" y="425" width="2.5" height="13" fill="#ff2a2a" stroke="none" stroke-width="1" /><rect x="632.5" y="425" width="2.5" height="13" fill="#ff2a2a" stroke="none" stroke-width="1" /><rect x="647" y="425" width="2.5" height="13" fill="#ff2a2a" stroke="none" stroke-width="1" /><rect x="661.5" y="425" width="2.5" height="13" fill="#ff2a2a" stroke="none" stroke-width="1" /><rect x="676" y="425" width="2.5" height="13" fill="#ff2a2a" stroke="none" stroke-width="1" /><rect x="690.5" y="425" width="2.5" height="13" fill="#ff2a2a" stroke="none" stroke-width="1" /><rect x="705" y="425" width="2.5" height="13" fill="#ff2a2a" stroke="none" stroke-width="1" /><rect x="719.5" y="425" width="2.5" height="13" fill="#ff2a2a" stroke="none" stroke-width="1" /><rect x="380" y="437" width="158" height="4" fill="#9a9a9a" stroke="none" stroke-width="1" /><rect x="386" y="437" width="150" height="2" fill="#ff2a2a" stroke="none" stroke-width="1" /><rect x="750" y="388" width="362" height="12" fill="url(#hatch)" stroke="#ff2a2a" stroke-width="1.2" /><line x1="750" y1="388" x2="750" y2="400" stroke="#ff2a2a" stroke-width="1.2" /><line x1="769" y1="388" x2="769" y2="400" stroke="#ff2a2a" stroke-width="1.2" /><line x1="788" y1="388" x2="788" y2="400" stroke="#ff2a2a" stroke-width="1.2" /><line x1="807" y1="388" x2="807" y2="400" stroke="#ff2a2a" stroke-width="1.2" /><line x1="826" y1="388" x2="826" y2="400" stroke="#ff2a2a" stroke-width="1.2" /><line x1="845" y1="388" x2="845" y2="400" stroke="#ff2a2a" stroke-width="1.2" /><line x1="864" y1="388" x2="864" y2="400" stroke="#ff2a2a" stroke-width="1.2" /><line x1="883" y1="388" x2="883" y2="400" stroke="#ff2a2a" stroke-width="1.2" /><line x1="902" y1="388" x2="902" y2="400" stroke="#ff2a2a" stroke-width="1.2" /><line x1="921" y1="388" x2="921" y2="400" stroke="#ff2a2a" stroke-width="1.2" /><line x1="940" y1="388" x2="940" y2="400" stroke="#ff2a2a" stroke-width="1.2" /><line x1="959" y1="388" x2="959" y2="400" stroke="#ff2a2a" stroke-width="1.2" /><line x1="978" y1="388" x2="978" y2="400" stroke="#ff2a2a" stroke-width="1.2" /><line x1="997" y1="388" x2="997" y2="400" stroke="#ff2a2a" stroke-width="1.2" /><line x1="1016" y1="388" x2="1016" y2="400" stroke="#ff2a2a" stroke-width="1.2" /><line x1="1035" y1="388" x2="1035" y2="400" stroke="#ff2a2a" stroke-width="1.2" /><line x1="1054" y1="388" x2="1054" y2="400" stroke="#ff2a2a" stroke-width="1.2" /><line x1="1073" y1="388" x2="1073" y2="400" stroke="#ff2a2a" stroke-width="1.2" /><line x1="1092" y1="388" x2="1092" y2="400" stroke="#ff2a2a" stroke-width="1.2" /><line x1="1111" y1="388" x2="1111" y2="400" stroke="#ff2a2a" stroke-width="1.2" /><rect x="738" y="400" width="377" height="26" fill="#ffffff" stroke="#ff2a2a" stroke-width="1.4" /><rect x="806" y="401" width="39" height="24" fill="url(#hatch)" stroke="none" stroke-width="1" /><rect x="865" y="401" width="17" height="24" fill="url(#hatch)" stroke="none" stroke-width="1" /><rect x="940" y="401" width="21" height="24" fill="url(#hatch)" stroke="none" stroke-width="1" /><rect x="979" y="401" width="18" height="24" fill="url(#hatch)" stroke="none" stroke-width="1" /><rect x="1036" y="401" width="20" height="24" fill="url(#hatch)" stroke="none" stroke-width="1" /><rect x="845" y="401" width="20" height="24" fill="#ffffff" stroke="#ff2a2a" stroke-width="1.6" /><path d="M845 410.6 L865 401 M845 410.6 L865 425 M865 411.8 L845 401 M855 401 L851 425" stroke="#ff2a2a" stroke-width="0.9" fill="none" stroke-dasharray="3 1.5"/><rect x="961" y="401" width="18" height="24" fill="#ffffff" stroke="#ff2a2a" stroke-width="1.6" /><path d="M961 410.6 L979 401 M961 410.6 L979 425 M979 411.8 L961 401 M970 401 L966.4 425" stroke="#ff2a2a" stroke-width="0.9" fill="none" stroke-dasharray="3 1.5"/><rect x="727" y="400" width="23" height="28" fill="#ffffff" stroke="#ff2a2a" stroke-width="1.5" /><rect x="729" y="402" width="19" height="22" fill="#ffffff" stroke="#ff2a2a" stroke-width="1.6" /><path d="M729 410.8 L748 402 M729 410.8 L748 424 M748 411.9 L729 402 M738.5 402 L734.7 424" stroke="#ff2a2a" stroke-width="0.9" fill="none" stroke-dasharray="3 1.5"/><line x1="738" y1="400" x2="738" y2="426" stroke="#ff2a2a" stroke-width="1.5" /><line x1="757" y1="400" x2="757" y2="426" stroke="#ff2a2a" stroke-width="1.5" /><line x1="776" y1="400" x2="776" y2="426" stroke="#ff2a2a" stroke-width="1.5" /><line x1="795" y1="400" x2="795" y2="426" stroke="#ff2a2a" stroke-width="1.5" /><line x1="814" y1="400" x2="814" y2="426" stroke="#ff2a2a" stroke-width="1.5" /><line x1="833" y1="400" x2="833" y2="426" stroke="#ff2a2a" stroke-width="1.5" /><line x1="852" y1="400" x2="852" y2="426" stroke="#ff2a2a" stroke-width="1.5" /><line x1="871" y1="400" x2="871" y2="426" stroke="#ff2a2a" stroke-width="1.5" /><line x1="890" y1="400" x2="890" y2="426" stroke="#ff2a2a" stroke-width="1.5" /><line x1="909" y1="400" x2="909" y2="426" stroke="#ff2a2a" stroke-width="1.5" /><line x1="928" y1="400" x2="928" y2="426" stroke="#ff2a2a" stroke-width="1.5" /><line x1="947" y1="400" x2="947" y2="426" stroke="#ff2a2a" stroke-width="1.5" /><line x1="966" y1="400" x2="966" y2="426" stroke="#ff2a2a" stroke-width="1.5" /><line x1="985" y1="400" x2="985" y2="426" stroke="#ff2a2a" stroke-width="1.5" /><line x1="1004" y1="400" x2="1004" y2="426" stroke="#ff2a2a" stroke-width="1.5" /><line x1="1023" y1="400" x2="1023" y2="426" stroke="#ff2a2a" stroke-width="1.5" /><line x1="1042" y1="400" x2="1042" y2="426" stroke="#ff2a2a" stroke-width="1.5" /><line x1="1061" y1="400" x2="1061" y2="426" stroke="#ff2a2a" stroke-width="1.5" /><line x1="1080" y1="400" x2="1080" y2="426" stroke="#ff2a2a" stroke-width="1.5" /><line x1="1099" y1="400" x2="1099" y2="426" stroke="#ff2a2a" stroke-width="1.5" /><rect x="738" y="424" width="400" height="4" fill="#ff2a2a" stroke="none" stroke-width="1" /><line x1="735" y1="428" x2="1145" y2="428" stroke="#ffff00" stroke-width="1.5" /><rect x="749" y="383" width="2.5" height="2.5" fill="#2050e0" stroke="none" stroke-width="1" /><rect x="768" y="383" width="2.5" height="2.5" fill="#2050e0" stroke="none" stroke-width="1" /><rect x="787" y="383" width="2.5" height="2.5" fill="#2050e0" stroke="none" stroke-width="1" /><rect x="806" y="383" width="2.5" height="2.5" fill="#2050e0" stroke="none" stroke-width="1" /><rect x="825" y="383" width="2.5" height="2.5" fill="#2050e0" stroke="none" stroke-width="1" /><rect x="844" y="383" width="2.5" height="2.5" fill="#2050e0" stroke="none" stroke-width="1" /><rect x="863" y="383" width="2.5" height="2.5" fill="#2050e0" stroke="none" stroke-width="1" /><rect x="882" y="383" width="2.5" height="2.5" fill="#2050e0" stroke="none" stroke-width="1" /><rect x="901" y="383" width="2.5" height="2.5" fill="#2050e0" stroke="none" stroke-width="1" /><rect x="920" y="383" width="2.5" height="2.5" fill="#2050e0" stroke="none" stroke-width="1" /><rect x="939" y="383" width="2.5" height="2.5" fill="#2050e0" stroke="none" stroke-width="1" /><rect x="958" y="383" width="2.5" height="2.5" fill="#2050e0" stroke="none" stroke-width="1" /><rect x="977" y="383" width="2.5" height="2.5" fill="#2050e0" stroke="none" stroke-width="1" /><rect x="996" y="383" width="2.5" height="2.5" fill="#2050e0" stroke="none" stroke-width="1" /><rect x="1015" y="383" width="2.5" height="2.5" fill="#2050e0" stroke="none" stroke-width="1" /><rect x="1034" y="383" width="2.5" height="2.5" fill="#2050e0" stroke="none" stroke-width="1" /><rect x="1053" y="383" width="2.5" height="2.5" fill="#2050e0" stroke="none" stroke-width="1" /><rect x="1072" y="383" width="2.5" height="2.5" fill="#2050e0" stroke="none" stroke-width="1" /><rect x="1091" y="383" width="2.5" height="2.5" fill="#2050e0" stroke="none" stroke-width="1" /><rect x="1110" y="383" width="2.5" height="2.5" fill="#2050e0" stroke="none" stroke-width="1" /><rect x="402" y="443" width="136" height="40" fill="#ffffff" stroke="#ff2a2a" stroke-width="1.5" /><rect x="403" y="444" width="134" height="10" fill="url(#hatch)" stroke="none" stroke-width="1" /><rect x="404" y="454" width="16" height="29" fill="url(#hatch)" stroke="none" stroke-width="1" /><rect x="470" y="454" width="48" height="29" fill="url(#hatch)" stroke="none" stroke-width="1" /><line x1="402" y1="443" x2="402" y2="483" stroke="#ff2a2a" stroke-width="1.5" /><line x1="412" y1="443" x2="412" y2="483" stroke="#ff2a2a" stroke-width="1.5" /><line x1="420" y1="443" x2="420" y2="483" stroke="#ff2a2a" stroke-width="1.5" /><line x1="430" y1="443" x2="430" y2="483" stroke="#ff2a2a" stroke-width="1.5" /><line x1="443" y1="443" x2="443" y2="483" stroke="#ff2a2a" stroke-width="1.5" /><line x1="457" y1="443" x2="457" y2="483" stroke="#ff2a2a" stroke-width="1.5" /><line x1="470" y1="443" x2="470" y2="483" stroke="#ff2a2a" stroke-width="1.5" /><line x1="486" y1="443" x2="486" y2="483" stroke="#ff2a2a" stroke-width="1.5" /><line x1="502" y1="443" x2="502" y2="483" stroke="#ff2a2a" stroke-width="1.5" /><line x1="518" y1="443" x2="518" y2="483" stroke="#ff2a2a" stroke-width="1.5" /><line x1="538" y1="443" x2="538" y2="483" stroke="#ff2a2a" stroke-width="1.5" /><rect x="518" y="455" width="18" height="27" fill="#ffffff" stroke="#ff2a2a" stroke-width="1.6" /><path d="M518 465.8 L536 455 M518 465.8 L536 482 M536 467.1 L518 455 M527 455 L523.4 482" stroke="#ff2a2a" stroke-width="0.9" fill="none" stroke-dasharray="3 1.5"/><rect x="436" y="469" width="24" height="3" fill="#ffff00" stroke="#ff2a2a" stroke-width="0.6" /><line x1="402" y1="454.5" x2="538" y2="454.5" stroke="#ff2a2a" stroke-width="1.2" /><rect x="376" y="483" width="164" height="5" fill="#f4f4b0" stroke="#ffff00" stroke-width="1.2" /><rect x="588" y="456" width="16" height="27" fill="#ffffff" stroke="#ff2a2a" stroke-width="1.6" /><path d="M588 466.8 L604 456 M588 466.8 L604 483 M604 468.1 L588 456 M596 456 L592.8 483" stroke="#ff2a2a" stroke-width="0.9" fill="none" stroke-dasharray="3 1.5"/><rect x="587" y="484" width="18" height="3" fill="#ffff00" stroke="#ff2a2a" stroke-width="0.6" /><rect x="587" y="450" width="18" height="3" fill="#ffff00" stroke="#ff2a2a" stroke-width="0.6" /><rect x="588" y="507" width="16" height="28" fill="#ffffff" stroke="#ff2a2a" stroke-width="1.6" /><path d="M588 518.2 L604 507 M588 518.2 L604 535 M604 519.6 L588 507 M596 507 L592.8 535" stroke="#ff2a2a" stroke-width="0.9" fill="none" stroke-dasharray="3 1.5"/><rect x="587" y="536" width="18" height="3" fill="#ffff00" stroke="#ff2a2a" stroke-width="0.6" /><rect x="587" y="501" width="18" height="3" fill="#ffff00" stroke="#ff2a2a" stroke-width="0.6" /><rect x="588" y="560" width="16" height="27" fill="#ffffff" stroke="#ff2a2a" stroke-width="1.6" /><path d="M588 570.8 L604 560 M588 570.8 L604 587 M604 572.1 L588 560 M596 560 L592.8 587" stroke="#ff2a2a" stroke-width="0.9" fill="none" stroke-dasharray="3 1.5"/><rect x="587" y="588" width="18" height="3" fill="#ffff00" stroke="#ff2a2a" stroke-width="0.6" /><rect x="587" y="554" width="18" height="3" fill="#ffff00" stroke="#ff2a2a" stroke-width="0.6" /><rect x="588" y="611" width="16" height="27" fill="#ffffff" stroke="#ff2a2a" stroke-width="1.6" /><path d="M588 621.8 L604 611 M588 621.8 L604 638 M604 623.1 L588 611 M596 611 L592.8 638" stroke="#ff2a2a" stroke-width="0.9" fill="none" stroke-dasharray="3 1.5"/><rect x="587" y="639" width="18" height="3" fill="#ffff00" stroke="#ff2a2a" stroke-width="0.6" /><rect x="587" y="605" width="18" height="3" fill="#ffff00" stroke="#ff2a2a" stroke-width="0.6" /><rect x="588" y="664" width="16" height="26" fill="#ffffff" stroke="#ff2a2a" stroke-width="1.6" /><path d="M588 674.4 L604 664 M588 674.4 L604 690 M604 675.7 L588 664 M596 664 L592.8 690" stroke="#ff2a2a" stroke-width="0.9" fill="none" stroke-dasharray="3 1.5"/><rect x="587" y="691" width="18" height="3" fill="#ffff00" stroke="#ff2a2a" stroke-width="0.6" /><rect x="587" y="658" width="18" height="3" fill="#ffff00" stroke="#ff2a2a" stroke-width="0.6" /><rect x="588" y="535" width="16" height="25" fill="#808080" stroke="none" stroke-width="1" /><rect x="588" y="638" width="16" height="26" fill="#808080" stroke="none" stroke-width="1" /><rect x="588" y="715" width="16" height="27" fill="#ffffff" stroke="#ff2a2a" stroke-width="1.6" /><path d="M588 725.8 L604 715 M588 725.8 L604 742 M604 727.1 L588 715 M596 715 L592.8 742" stroke="#ff2a2a" stroke-width="0.9" fill="none" stroke-dasharray="3 1.5"/><rect x="587" y="743" width="18" height="3" fill="#ffff00" stroke="#ff2a2a" stroke-width="0.6" /><rect x="587" y="756" width="18" height="3" fill="#ffff00" stroke="#ff2a2a" stroke-width="0.6" /><rect x="637" y="456" width="16" height="27" fill="#ffffff" stroke="#ff2a2a" stroke-width="1.6" /><path d="M637 466.8 L653 456 M637 466.8 L653 483 M653 468.1 L637 456 M645 456 L641.8 483" stroke="#ff2a2a" stroke-width="0.9" fill="none" stroke-dasharray="3 1.5"/><rect x="636" y="484" width="18" height="3" fill="#ffff00" stroke="#ff2a2a" stroke-width="0.6" /><rect x="636" y="450" width="18" height="3" fill="#ffff00" stroke="#ff2a2a" stroke-width="0.6" /><rect x="637" y="507" width="16" height="28" fill="#ffffff" stroke="#ff2a2a" stroke-width="1.6" /><path d="M637 518.2 L653 507 M637 518.2 L653 535 M653 519.6 L637 507 M645 507 L641.8 535" stroke="#ff2a2a" stroke-width="0.9" fill="none" stroke-dasharray="3 1.5"/><rect x="636" y="536" width="18" height="3" fill="#ffff00" stroke="#ff2a2a" stroke-width="0.6" /><rect x="636" y="501" width="18" height="3" fill="#ffff00" stroke="#ff2a2a" stroke-width="0.6" /><rect x="637" y="560" width="16" height="27" fill="#ffffff" stroke="#ff2a2a" stroke-width="1.6" /><path d="M637 570.8 L653 560 M637 570.8 L653 587 M653 572.1 L637 560 M645 560 L641.8 587" stroke="#ff2a2a" stroke-width="0.9" fill="none" stroke-dasharray="3 1.5"/><rect x="636" y="588" width="18" height="3" fill="#ffff00" stroke="#ff2a2a" stroke-width="0.6" /><rect x="636" y="554" width="18" height="3" fill="#ffff00" stroke="#ff2a2a" stroke-width="0.6" /><rect x="637" y="611" width="16" height="27" fill="#ffffff" stroke="#ff2a2a" stroke-width="1.6" /><path d="M637 621.8 L653 611 M637 621.8 L653 638 M653 623.1 L637 611 M645 611 L641.8 638" stroke="#ff2a2a" stroke-width="0.9" fill="none" stroke-dasharray="3 1.5"/><rect x="636" y="639" width="18" height="3" fill="#ffff00" stroke="#ff2a2a" stroke-width="0.6" /><rect x="636" y="605" width="18" height="3" fill="#ffff00" stroke="#ff2a2a" stroke-width="0.6" /><rect x="637" y="664" width="16" height="26" fill="#ffffff" stroke="#ff2a2a" stroke-width="1.6" /><path d="M637 674.4 L653 664 M637 674.4 L653 690 M653 675.7 L637 664 M645 664 L641.8 690" stroke="#ff2a2a" stroke-width="0.9" fill="none" stroke-dasharray="3 1.5"/><rect x="636" y="691" width="18" height="3" fill="#ffff00" stroke="#ff2a2a" stroke-width="0.6" /><rect x="636" y="658" width="18" height="3" fill="#ffff00" stroke="#ff2a2a" stroke-width="0.6" /><rect x="637" y="535" width="16" height="25" fill="#808080" stroke="none" stroke-width="1" /><rect x="637" y="638" width="16" height="26" fill="#808080" stroke="none" stroke-width="1" /><rect x="636" y="715" width="20" height="42" fill="#ffffff" stroke="#ff2a2a" stroke-width="1.6" /><line x1="646" y1="715" x2="646" y2="757" stroke="#ff2a2a" stroke-width="2.2" /><path d="M636 736 L646 715 M636 736 L646 757 M646 736 L636 715" stroke="#ff2a2a" stroke-width="0.9" fill="none" stroke-dasharray="3 1.5"/><path d="M646 736 L656 715 M646 736 L656 757 M656 736 L646 715" stroke="#ff2a2a" stroke-width="0.9" fill="none" stroke-dasharray="3 1.5"/><rect x="636" y="756" width="18" height="3" fill="#ffff00" stroke="#ff2a2a" stroke-width="0.6" /><rect x="686" y="456" width="17" height="27" fill="#ffffff" stroke="#ff2a2a" stroke-width="1.6" /><path d="M686 466.8 L703 456 M686 466.8 L703 483 M703 468.1 L686 456 M694.5 456 L691.1 483" stroke="#ff2a2a" stroke-width="0.9" fill="none" stroke-dasharray="3 1.5"/><rect x="685" y="484" width="19" height="3" fill="#ffff00" stroke="#ff2a2a" stroke-width="0.6" /><rect x="685" y="450" width="19" height="3" fill="#ffff00" stroke="#ff2a2a" stroke-width="0.6" /><rect x="686" y="507" width="17" height="28" fill="#ffffff" stroke="#ff2a2a" stroke-width="1.6" /><path d="M686 518.2 L703 507 M686 518.2 L703 535 M703 519.6 L686 507 M694.5 507 L691.1 535" stroke="#ff2a2a" stroke-width="0.9" fill="none" stroke-dasharray="3 1.5"/><rect x="685" y="536" width="19" height="3" fill="#ffff00" stroke="#ff2a2a" stroke-width="0.6" /><rect x="685" y="501" width="19" height="3" fill="#ffff00" stroke="#ff2a2a" stroke-width="0.6" /><rect x="686" y="560" width="17" height="27" fill="#ffffff" stroke="#ff2a2a" stroke-width="1.6" /><path d="M686 570.8 L703 560 M686 570.8 L703 587 M703 572.1 L686 560 M694.5 560 L691.1 587" stroke="#ff2a2a" stroke-width="0.9" fill="none" stroke-dasharray="3 1.5"/><rect x="685" y="588" width="19" height="3" fill="#ffff00" stroke="#ff2a2a" stroke-width="0.6" /><rect x="685" y="554" width="19" height="3" fill="#ffff00" stroke="#ff2a2a" stroke-width="0.6" /><rect x="686" y="611" width="17" height="27" fill="#ffffff" stroke="#ff2a2a" stroke-width="1.6" /><path d="M686 621.8 L703 611 M686 621.8 L703 638 M703 623.1 L686 611 M694.5 611 L691.1 638" stroke="#ff2a2a" stroke-width="0.9" fill="none" stroke-dasharray="3 1.5"/><rect x="685" y="639" width="19" height="3" fill="#ffff00" stroke="#ff2a2a" stroke-width="0.6" /><rect x="685" y="605" width="19" height="3" fill="#ffff00" stroke="#ff2a2a" stroke-width="0.6" /><rect x="686" y="664" width="17" height="26" fill="#ffffff" stroke="#ff2a2a" stroke-width="1.6" /><path d="M686 674.4 L703 664 M686 674.4 L703 690 M703 675.7 L686 664 M694.5 664 L691.1 690" stroke="#ff2a2a" stroke-width="0.9" fill="none" stroke-dasharray="3 1.5"/><rect x="685" y="691" width="19" height="3" fill="#ffff00" stroke="#ff2a2a" stroke-width="0.6" /><rect x="685" y="658" width="19" height="3" fill="#ffff00" stroke="#ff2a2a" stroke-width="0.6" /><rect x="686" y="535" width="17" height="25" fill="#808080" stroke="none" stroke-width="1" /><rect x="686" y="638" width="17" height="26" fill="#808080" stroke="none" stroke-width="1" /><rect x="685" y="715" width="21" height="42" fill="#ffffff" stroke="#ff2a2a" stroke-width="1.6" /><line x1="695.5" y1="715" x2="695.5" y2="757" stroke="#ff2a2a" stroke-width="2.2" /><path d="M685 736 L695.5 715 M685 736 L695.5 757 M695.5 736 L685 715" stroke="#ff2a2a" stroke-width="0.9" fill="none" stroke-dasharray="3 1.5"/><path d="M695.5 736 L706 715 M695.5 736 L706 757 M706 736 L695.5 715" stroke="#ff2a2a" stroke-width="0.9" fill="none" stroke-dasharray="3 1.5"/><rect x="685" y="756" width="19" height="3" fill="#ffff00" stroke="#ff2a2a" stroke-width="0.6" /><rect x="762" y="456" width="35" height="27" fill="#ffffff" stroke="#ff2a2a" stroke-width="1.6" /><line x1="779.5" y1="456" x2="779.5" y2="483" stroke="#ff2a2a" stroke-width="2.2" /><path d="M762 469.5 L779.5 456 M762 469.5 L779.5 483 M779.5 469.5 L762 456" stroke="#ff2a2a" stroke-width="0.9" fill="none" stroke-dasharray="3 1.5"/><path d="M779.5 469.5 L797 456 M779.5 469.5 L797 483 M797 469.5 L779.5 456" stroke="#ff2a2a" stroke-width="0.9" fill="none" stroke-dasharray="3 1.5"/><rect x="761" y="484" width="37" height="3" fill="#ffff00" stroke="#ff2a2a" stroke-width="0.6" /><rect x="761" y="450" width="37" height="3" fill="#ffff00" stroke="#ff2a2a" stroke-width="0.6" /><rect x="762" y="507" width="35" height="28" fill="#ffffff" stroke="#ff2a2a" stroke-width="1.6" /><line x1="779.5" y1="507" x2="779.5" y2="535" stroke="#ff2a2a" stroke-width="2.2" /><path d="M762 521 L779.5 507 M762 521 L779.5 535 M779.5 521 L762 507" stroke="#ff2a2a" stroke-width="0.9" fill="none" stroke-dasharray="3 1.5"/><path d="M779.5 521 L797 507 M779.5 521 L797 535 M797 521 L779.5 507" stroke="#ff2a2a" stroke-width="0.9" fill="none" stroke-dasharray="3 1.5"/><rect x="761" y="536" width="37" height="3" fill="#ffff00" stroke="#ff2a2a" stroke-width="0.6" /><rect x="761" y="501" width="37" height="3" fill="#ffff00" stroke="#ff2a2a" stroke-width="0.6" /><rect x="762" y="560" width="35" height="27" fill="#ffffff" stroke="#ff2a2a" stroke-width="1.6" /><line x1="779.5" y1="560" x2="779.5" y2="587" stroke="#ff2a2a" stroke-width="2.2" /><path d="M762 573.5 L779.5 560 M762 573.5 L779.5 587 M779.5 573.5 L762 560" stroke="#ff2a2a" stroke-width="0.9" fill="none" stroke-dasharray="3 1.5"/><path d="M779.5 573.5 L797 560 M779.5 573.5 L797 587 M797 573.5 L779.5 560" stroke="#ff2a2a" stroke-width="0.9" fill="none" stroke-dasharray="3 1.5"/><rect x="761" y="588" width="37" height="3" fill="#ffff00" stroke="#ff2a2a" stroke-width="0.6" /><rect x="761" y="554" width="37" height="3" fill="#ffff00" stroke="#ff2a2a" stroke-width="0.6" /><rect x="762" y="611" width="35" height="27" fill="#ffffff" stroke="#ff2a2a" stroke-width="1.6" /><line x1="779.5" y1="611" x2="779.5" y2="638" stroke="#ff2a2a" stroke-width="2.2" /><path d="M762 624.5 L779.5 611 M762 624.5 L779.5 638 M779.5 624.5 L762 611" stroke="#ff2a2a" stroke-width="0.9" fill="none" stroke-dasharray="3 1.5"/><path d="M779.5 624.5 L797 611 M779.5 624.5 L797 638 M797 624.5 L779.5 611" stroke="#ff2a2a" stroke-width="0.9" fill="none" stroke-dasharray="3 1.5"/><rect x="761" y="639" width="37" height="3" fill="#ffff00" stroke="#ff2a2a" stroke-width="0.6" /><rect x="761" y="605" width="37" height="3" fill="#ffff00" stroke="#ff2a2a" stroke-width="0.6" /><rect x="762" y="664" width="35" height="26" fill="#ffffff" stroke="#ff2a2a" stroke-width="1.6" /><line x1="779.5" y1="664" x2="779.5" y2="690" stroke="#ff2a2a" stroke-width="2.2" /><path d="M762 677 L779.5 664 M762 677 L779.5 690 M779.5 677 L762 664" stroke="#ff2a2a" stroke-width="0.9" fill="none" stroke-dasharray="3 1.5"/><path d="M779.5 677 L797 664 M779.5 677 L797 690 M797 677 L779.5 664" stroke="#ff2a2a" stroke-width="0.9" fill="none" stroke-dasharray="3 1.5"/><rect x="761" y="691" width="37" height="3" fill="#ffff00" stroke="#ff2a2a" stroke-width="0.6" /><rect x="761" y="658" width="37" height="3" fill="#ffff00" stroke="#ff2a2a" stroke-width="0.6" /><rect x="762" y="535" width="35" height="25" fill="#808080" stroke="none" stroke-width="1" /><rect x="762" y="638" width="35" height="26" fill="#808080" stroke="none" stroke-width="1" /><rect x="762" y="715" width="35" height="40" fill="#ffffff" stroke="#ff2a2a" stroke-width="1.6" /><line x1="779.5" y1="715" x2="779.5" y2="755" stroke="#ff2a2a" stroke-width="2.2" /><path d="M762 735 L779.5 715 M762 735 L779.5 755 M779.5 735 L762 715" stroke="#ff2a2a" stroke-width="0.9" fill="none" stroke-dasharray="3 1.5"/><path d="M779.5 735 L797 715 M779.5 735 L797 755 M797 735 L779.5 715" stroke="#ff2a2a" stroke-width="0.9" fill="none" stroke-dasharray="3 1.5"/><rect x="779.5" y="736" width="17.5" height="19" fill="#ffffff" stroke="#ff2a2a" stroke-width="1.3" /><rect x="761" y="756" width="37" height="3" fill="#ffff00" stroke="#ff2a2a" stroke-width="0.6" /><rect x="831" y="456" width="17" height="27" fill="#ffffff" stroke="#ff2a2a" stroke-width="1.6" /><path d="M831 466.8 L848 456 M831 466.8 L848 483 M848 468.1 L831 456 M839.5 456 L836.1 483" stroke="#ff2a2a" stroke-width="0.9" fill="none" stroke-dasharray="3 1.5"/><rect x="830" y="484" width="19" height="3" fill="#ffff00" stroke="#ff2a2a" stroke-width="0.6" /><rect x="830" y="450" width="19" height="3" fill="#ffff00" stroke="#ff2a2a" stroke-width="0.6" /><rect x="831" y="507" width="17" height="28" fill="#ffffff" stroke="#ff2a2a" stroke-width="1.6" /><path d="M831 518.2 L848 507 M831 518.2 L848 535 M848 519.6 L831 507 M839.5 507 L836.1 535" stroke="#ff2a2a" stroke-width="0.9" fill="none" stroke-dasharray="3 1.5"/><rect x="830" y="536" width="19" height="3" fill="#ffff00" stroke="#ff2a2a" stroke-width="0.6" /><rect x="830" y="501" width="19" height="3" fill="#ffff00" stroke="#ff2a2a" stroke-width="0.6" /><rect x="831" y="560" width="17" height="27" fill="#ffffff" stroke="#ff2a2a" stroke-width="1.6" /><path d="M831 570.8 L848 560 M831 570.8 L848 587 M848 572.1 L831 560 M839.5 560 L836.1 587" stroke="#ff2a2a" stroke-width="0.9" fill="none" stroke-dasharray="3 1.5"/><rect x="830" y="588" width="19" height="3" fill="#ffff00" stroke="#ff2a2a" stroke-width="0.6" /><rect x="830" y="554" width="19" height="3" fill="#ffff00" stroke="#ff2a2a" stroke-width="0.6" /><rect x="831" y="611" width="17" height="27" fill="#ffffff" stroke="#ff2a2a" stroke-width="1.6" /><path d="M831 621.8 L848 611 M831 621.8 L848 638 M848 623.1 L831 611 M839.5 611 L836.1 638" stroke="#ff2a2a" stroke-width="0.9" fill="none" stroke-dasharray="3 1.5"/><rect x="830" y="639" width="19" height="3" fill="#ffff00" stroke="#ff2a2a" stroke-width="0.6" /><rect x="830" y="605" width="19" height="3" fill="#ffff00" stroke="#ff2a2a" stroke-width="0.6" /><rect x="831" y="664" width="17" height="26" fill="#ffffff" stroke="#ff2a2a" stroke-width="1.6" /><path d="M831 674.4 L848 664 M831 674.4 L848 690 M848 675.7 L831 664 M839.5 664 L836.1 690" stroke="#ff2a2a" stroke-width="0.9" fill="none" stroke-dasharray="3 1.5"/><rect x="830" y="691" width="19" height="3" fill="#ffff00" stroke="#ff2a2a" stroke-width="0.6" /><rect x="830" y="658" width="19" height="3" fill="#ffff00" stroke="#ff2a2a" stroke-width="0.6" /><rect x="831" y="535" width="17" height="25" fill="#808080" stroke="none" stroke-width="1" /><rect x="831" y="638" width="17" height="26" fill="#808080" stroke="none" stroke-width="1" /><rect x="831" y="715" width="17" height="27" fill="#ffffff" stroke="#ff2a2a" stroke-width="1.6" /><path d="M831 725.8 L848 715 M831 725.8 L848 742 M848 727.1 L831 715 M839.5 715 L836.1 742" stroke="#ff2a2a" stroke-width="0.9" fill="none" stroke-dasharray="3 1.5"/><rect x="830" y="743" width="19" height="3" fill="#ffff00" stroke="#ff2a2a" stroke-width="0.6" /><rect x="830" y="756" width="19" height="3" fill="#ffff00" stroke="#ff2a2a" stroke-width="0.6" /><rect x="1015" y="456" width="16" height="27" fill="#ffffff" stroke="#ff2a2a" stroke-width="1.6" /><path d="M1015 466.8 L1031 456 M1015 466.8 L1031 483 M1031 468.1 L1015 456 M1023 456 L1019.8 483" stroke="#ff2a2a" stroke-width="0.9" fill="none" stroke-dasharray="3 1.5"/><rect x="1014" y="484" width="18" height="3" fill="#ffff00" stroke="#ff2a2a" stroke-width="0.6" /><rect x="1014" y="450" width="18" height="3" fill="#ffff00" stroke="#ff2a2a" stroke-width="0.6" /><rect x="1015" y="507" width="16" height="28" fill="#ffffff" stroke="#ff2a2a" stroke-width="1.6" /><path d="M1015 518.2 L1031 507 M1015 518.2 L1031 535 M1031 519.6 L1015 507 M1023 507 L1019.8 535" stroke="#ff2a2a" stroke-width="0.9" fill="none" stroke-dasharray="3 1.5"/><rect x="1014" y="536" width="18" height="3" fill="#ffff00" stroke="#ff2a2a" stroke-width="0.6" /><rect x="1014" y="501" width="18" height="3" fill="#ffff00" stroke="#ff2a2a" stroke-width="0.6" /><rect x="1015" y="560" width="16" height="27" fill="#ffffff" stroke="#ff2a2a" stroke-width="1.6" /><path d="M1015 570.8 L1031 560 M1015 570.8 L1031 587 M1031 572.1 L1015 560 M1023 560 L1019.8 587" stroke="#ff2a2a" stroke-width="0.9" fill="none" stroke-dasharray="3 1.5"/><rect x="1014" y="588" width="18" height="3" fill="#ffff00" stroke="#ff2a2a" stroke-width="0.6" /><rect x="1014" y="554" width="18" height="3" fill="#ffff00" stroke="#ff2a2a" stroke-width="0.6" /><rect x="1015" y="611" width="16" height="27" fill="#ffffff" stroke="#ff2a2a" stroke-width="1.6" /><path d="M1015 621.8 L1031 611 M1015 621.8 L1031 638 M1031 623.1 L1015 611 M1023 611 L1019.8 638" stroke="#ff2a2a" stroke-width="0.9" fill="none" stroke-dasharray="3 1.5"/><rect x="1014" y="639" width="18" height="3" fill="#ffff00" stroke="#ff2a2a" stroke-width="0.6" /><rect x="1014" y="605" width="18" height="3" fill="#ffff00" stroke="#ff2a2a" stroke-width="0.6" /><rect x="1015" y="664" width="16" height="26" fill="#ffffff" stroke="#ff2a2a" stroke-width="1.6" /><path d="M1015 674.4 L1031 664 M1015 674.4 L1031 690 M1031 675.7 L1015 664 M1023 664 L1019.8 690" stroke="#ff2a2a" stroke-width="0.9" fill="none" stroke-dasharray="3 1.5"/><rect x="1014" y="691" width="18" height="3" fill="#ffff00" stroke="#ff2a2a" stroke-width="0.6" /><rect x="1014" y="658" width="18" height="3" fill="#ffff00" stroke="#ff2a2a" stroke-width="0.6" /><rect x="1015" y="535" width="16" height="25" fill="#808080" stroke="none" stroke-width="1" /><rect x="1015" y="638" width="16" height="26" fill="#808080" stroke="none" stroke-width="1" /><rect x="1015" y="715" width="16" height="27" fill="#ffffff" stroke="#ff2a2a" stroke-width="1.6" /><path d="M1015 725.8 L1031 715 M1015 725.8 L1031 742 M1031 727.1 L1015 715 M1023 715 L1019.8 742" stroke="#ff2a2a" stroke-width="0.9" fill="none" stroke-dasharray="3 1.5"/><rect x="1014" y="743" width="18" height="3" fill="#ffff00" stroke="#ff2a2a" stroke-width="0.6" /><rect x="1014" y="756" width="18" height="3" fill="#ffff00" stroke="#ff2a2a" stroke-width="0.6" /><rect x="1066" y="456" width="35" height="27" fill="#ffffff" stroke="#ff2a2a" stroke-width="1.6" /><line x1="1083.5" y1="456" x2="1083.5" y2="483" stroke="#ff2a2a" stroke-width="2.2" /><path d="M1066 469.5 L1083.5 456 M1066 469.5 L1083.5 483 M1083.5 469.5 L1066 456" stroke="#ff2a2a" stroke-width="0.9" fill="none" stroke-dasharray="3 1.5"/><path d="M1083.5 469.5 L1101 456 M1083.5 469.5 L1101 483 M1101 469.5 L1083.5 456" stroke="#ff2a2a" stroke-width="0.9" fill="none" stroke-dasharray="3 1.5"/><rect x="1065" y="484" width="37" height="3" fill="#ffff00" stroke="#ff2a2a" stroke-width="0.6" /><rect x="1065" y="450" width="37" height="3" fill="#ffff00" stroke="#ff2a2a" stroke-width="0.6" /><rect x="1066" y="507" width="35" height="28" fill="#ffffff" stroke="#ff2a2a" stroke-width="1.6" /><line x1="1083.5" y1="507" x2="1083.5" y2="535" stroke="#ff2a2a" stroke-width="2.2" /><path d="M1066 521 L1083.5 507 M1066 521 L1083.5 535 M1083.5 521 L1066 507" stroke="#ff2a2a" stroke-width="0.9" fill="none" stroke-dasharray="3 1.5"/><path d="M1083.5 521 L1101 507 M1083.5 521 L1101 535 M1101 521 L1083.5 507" stroke="#ff2a2a" stroke-width="0.9" fill="none" stroke-dasharray="3 1.5"/><rect x="1065" y="536" width="37" height="3" fill="#ffff00" stroke="#ff2a2a" stroke-width="0.6" /><rect x="1065" y="501" width="37" height="3" fill="#ffff00" stroke="#ff2a2a" stroke-width="0.6" /><rect x="1066" y="560" width="35" height="27" fill="#ffffff" stroke="#ff2a2a" stroke-width="1.6" /><line x1="1083.5" y1="560" x2="1083.5" y2="587" stroke="#ff2a2a" stroke-width="2.2" /><path d="M1066 573.5 L1083.5 560 M1066 573.5 L1083.5 587 M1083.5 573.5 L1066 560" stroke="#ff2a2a" stroke-width="0.9" fill="none" stroke-dasharray="3 1.5"/><path d="M1083.5 573.5 L1101 560 M1083.5 573.5 L1101 587 M1101 573.5 L1083.5 560" stroke="#ff2a2a" stroke-width="0.9" fill="none" stroke-dasharray="3 1.5"/><rect x="1065" y="588" width="37" height="3" fill="#ffff00" stroke="#ff2a2a" stroke-width="0.6" /><rect x="1065" y="554" width="37" height="3" fill="#ffff00" stroke="#ff2a2a" stroke-width="0.6" /><rect x="1066" y="611" width="35" height="27" fill="#ffffff" stroke="#ff2a2a" stroke-width="1.6" /><line x1="1083.5" y1="611" x2="1083.5" y2="638" stroke="#ff2a2a" stroke-width="2.2" /><path d="M1066 624.5 L1083.5 611 M1066 624.5 L1083.5 638 M1083.5 624.5 L1066 611" stroke="#ff2a2a" stroke-width="0.9" fill="none" stroke-dasharray="3 1.5"/><path d="M1083.5 624.5 L1101 611 M1083.5 624.5 L1101 638 M1101 624.5 L1083.5 611" stroke="#ff2a2a" stroke-width="0.9" fill="none" stroke-dasharray="3 1.5"/><rect x="1065" y="639" width="37" height="3" fill="#ffff00" stroke="#ff2a2a" stroke-width="0.6" /><rect x="1065" y="605" width="37" height="3" fill="#ffff00" stroke="#ff2a2a" stroke-width="0.6" /><rect x="1066" y="664" width="35" height="26" fill="#ffffff" stroke="#ff2a2a" stroke-width="1.6" /><line x1="1083.5" y1="664" x2="1083.5" y2="690" stroke="#ff2a2a" stroke-width="2.2" /><path d="M1066 677 L1083.5 664 M1066 677 L1083.5 690 M1083.5 677 L1066 664" stroke="#ff2a2a" stroke-width="0.9" fill="none" stroke-dasharray="3 1.5"/><path d="M1083.5 677 L1101 664 M1083.5 677 L1101 690 M1101 677 L1083.5 664" stroke="#ff2a2a" stroke-width="0.9" fill="none" stroke-dasharray="3 1.5"/><rect x="1065" y="691" width="37" height="3" fill="#ffff00" stroke="#ff2a2a" stroke-width="0.6" /><rect x="1065" y="658" width="37" height="3" fill="#ffff00" stroke="#ff2a2a" stroke-width="0.6" /><rect x="1066" y="535" width="35" height="25" fill="#808080" stroke="none" stroke-width="1" /><rect x="1066" y="638" width="35" height="26" fill="#808080" stroke="none" stroke-width="1" /><rect x="1066" y="715" width="35" height="40" fill="#ffffff" stroke="#ff2a2a" stroke-width="1.6" /><line x1="1083.5" y1="715" x2="1083.5" y2="755" stroke="#ff2a2a" stroke-width="2.2" /><path d="M1066 735 L1083.5 715 M1066 735 L1083.5 755 M1083.5 735 L1066 715" stroke="#ff2a2a" stroke-width="0.9" fill="none" stroke-dasharray="3 1.5"/><path d="M1083.5 735 L1101 715 M1083.5 735 L1101 755 M1101 735 L1083.5 715" stroke="#ff2a2a" stroke-width="0.9" fill="none" stroke-dasharray="3 1.5"/><rect x="1083.5" y="736" width="17.5" height="19" fill="#ffffff" stroke="#ff2a2a" stroke-width="1.3" /><rect x="1065" y="756" width="37" height="3" fill="#ffff00" stroke="#ff2a2a" stroke-width="0.6" /><line x1="578" y1="485" x2="720" y2="485" stroke="#ffff00" stroke-width="1.4" /><line x1="578" y1="483.7" x2="720" y2="483.7" stroke="#ff2a2a" stroke-width="0.8" /><line x1="715" y1="485" x2="800" y2="485" stroke="#ffff00" stroke-width="1.4" /><line x1="715" y1="483.7" x2="800" y2="483.7" stroke="#ff2a2a" stroke-width="0.8" /><line x1="1060" y1="485" x2="1135" y2="485" stroke="#ffff00" stroke-width="1.4" /><line x1="1060" y1="483.7" x2="1135" y2="483.7" stroke="#ff2a2a" stroke-width="0.8" /><line x1="578" y1="589" x2="720" y2="589" stroke="#ffff00" stroke-width="1.4" /><line x1="578" y1="587.7" x2="720" y2="587.7" stroke="#ff2a2a" stroke-width="0.8" /><line x1="715" y1="589" x2="800" y2="589" stroke="#ffff00" stroke-width="1.4" /><line x1="715" y1="587.7" x2="800" y2="587.7" stroke="#ff2a2a" stroke-width="0.8" /><line x1="1060" y1="589" x2="1135" y2="589" stroke="#ffff00" stroke-width="1.4" /><line x1="1060" y1="587.7" x2="1135" y2="587.7" stroke="#ff2a2a" stroke-width="0.8" /><line x1="578" y1="693" x2="720" y2="693" stroke="#ffff00" stroke-width="1.4" /><line x1="578" y1="691.7" x2="720" y2="691.7" stroke="#ff2a2a" stroke-width="0.8" /><line x1="715" y1="693" x2="800" y2="693" stroke="#ffff00" stroke-width="1.4" /><line x1="715" y1="691.7" x2="800" y2="691.7" stroke="#ff2a2a" stroke-width="0.8" /><line x1="1060" y1="693" x2="1135" y2="693" stroke="#ffff00" stroke-width="1.4" /><line x1="1060" y1="691.7" x2="1135" y2="691.7" stroke="#ff2a2a" stroke-width="0.8" /><rect x="907" y="456" width="48" height="22" fill="#ffffff" stroke="#ff2a2a" stroke-width="1.6" /><line x1="923" y1="456" x2="923" y2="478" stroke="#ff2a2a" stroke-width="1.4" /><line x1="939" y1="456" x2="939" y2="478" stroke="#ff2a2a" stroke-width="1.4" /><rect x="921" y="468.1" width="20" height="3" fill="#ffff00" stroke="#ff2a2a" stroke-width="0.6" /><rect x="901" y="478" width="60" height="16" fill="#ffffff" stroke="#ff2a2a" stroke-width="1.5" /><rect x="904" y="480" width="16" height="12" fill="#00e8f0" stroke="none" stroke-width="1" /><rect x="923" y="480" width="16" height="12" fill="#00e8f0" stroke="none" stroke-width="1" /><rect x="942" y="480" width="16" height="12" fill="#00e8f0" stroke="none" stroke-width="1" /><rect x="899" y="493" width="64" height="3" fill="#ff2a2a" stroke="none" stroke-width="1" /><rect x="901" y="531" width="60" height="16" fill="#ffffff" stroke="#ff2a2a" stroke-width="1.5" /><rect x="904" y="533" width="16" height="12" fill="#00e8f0" stroke="none" stroke-width="1" /><rect x="923" y="533" width="16" height="12" fill="#00e8f0" stroke="none" stroke-width="1" /><rect x="942" y="533" width="16" height="12" fill="#00e8f0" stroke="none" stroke-width="1" /><rect x="899" y="546" width="64" height="3" fill="#ff2a2a" stroke="none" stroke-width="1" /><rect x="907" y="502" width="48" height="5" fill="url(#hatch)" stroke="none" stroke-width="1" /><rect x="907" y="555" width="48" height="5" fill="url(#hatch)" stroke="none" stroke-width="1" /><rect x="907" y="507" width="48" height="24" fill="#ffffff" stroke="#ff2a2a" stroke-width="1.6" /><line x1="923" y1="507" x2="923" y2="531" stroke="#ff2a2a" stroke-width="1.4" /><line x1="939" y1="507" x2="939" y2="531" stroke="#ff2a2a" stroke-width="1.4" /><rect x="921" y="520.2" width="20" height="3" fill="#ffff00" stroke="#ff2a2a" stroke-width="0.6" /><rect x="907" y="560" width="48" height="27" fill="#ffffff" stroke="#ff2a2a" stroke-width="1.6" /><line x1="931" y1="560" x2="931" y2="587" stroke="#ff2a2a" stroke-width="2.2" /><path d="M907 573.5 L931 560 M907 573.5 L931 587 M931 573.5 L907 560" stroke="#ff2a2a" stroke-width="0.9" fill="none" stroke-dasharray="3 1.5"/><path d="M931 573.5 L955 560 M931 573.5 L955 587 M955 573.5 L931 560" stroke="#ff2a2a" stroke-width="0.9" fill="none" stroke-dasharray="3 1.5"/><rect x="907" y="611" width="48" height="28" fill="#ffffff" stroke="#ff2a2a" stroke-width="1.6" /><line x1="931" y1="611" x2="931" y2="639" stroke="#ff2a2a" stroke-width="2.2" /><path d="M907 625 L931 611 M907 625 L931 639 M931 625 L907 611" stroke="#ff2a2a" stroke-width="0.9" fill="none" stroke-dasharray="3 1.5"/><path d="M931 625 L955 611 M931 625 L955 639 M955 625 L931 611" stroke="#ff2a2a" stroke-width="0.9" fill="none" stroke-dasharray="3 1.5"/><rect x="897" y="650" width="68" height="3" fill="#22e022" stroke="none" stroke-width="1" /><line x1="895" y1="654" x2="967" y2="654" stroke="#ff2a2a" stroke-width="1.5" /><rect x="913" y="662" width="36" height="40" fill="#ffffff" stroke="#ff2a2a" stroke-width="1.6" /><line x1="931" y1="662" x2="931" y2="702" stroke="#ff2a2a" stroke-width="2.2" /><path d="M913 682 L931 662 M913 682 L931 702 M931 682 L913 662" stroke="#ff2a2a" stroke-width="0.9" fill="none" stroke-dasharray="3 1.5"/><path d="M931 682 L949 662 M931 682 L949 702 M949 682 L931 662" stroke="#ff2a2a" stroke-width="0.9" fill="none" stroke-dasharray="3 1.5"/><rect x="928" y="672" width="6" height="24" fill="#ff2a2a" stroke="none" stroke-width="1" /><line x1="903" y1="685" x2="903" y2="703" stroke="#777" stroke-width="2" /><line x1="959" y1="685" x2="959" y2="703" stroke="#777" stroke-width="2" /><rect x="900" y="703" width="62" height="3" fill="#ff40ff" stroke="none" stroke-width="1" /><rect x="905" y="715" width="21" height="42" fill="#ffffff" stroke="#ff2a2a" stroke-width="1.6" /><path d="M905 731.8 L926 715 M905 731.8 L926 757 M926 733.9 L905 715 M915.5 715 L911.3 757" stroke="#ff2a2a" stroke-width="0.9" fill="none" stroke-dasharray="3 1.5"/><rect x="935" y="715" width="22" height="42" fill="#ffffff" stroke="#ff2a2a" stroke-width="1.6" /><path d="M935 731.8 L957 715 M935 731.8 L957 757 M957 733.9 L935 715 M946 715 L941.6 757" stroke="#ff2a2a" stroke-width="0.9" fill="none" stroke-dasharray="3 1.5"/><rect x="380" y="508" width="94" height="27" fill="#ffffff" stroke="#ff2a2a" stroke-width="1.5" /><rect x="384" y="509" width="6" height="25" fill="url(#hatch)" stroke="none" stroke-width="1" /><rect x="391" y="509" width="10" height="25" fill="url(#hatch)" stroke="none" stroke-width="1" /><rect x="443" y="509" width="15" height="25" fill="url(#hatch)" stroke="none" stroke-width="1" /><rect x="459" y="509" width="7" height="25" fill="url(#hatch)" stroke="none" stroke-width="1" /><line x1="384" y1="508" x2="384" y2="535" stroke="#ff2a2a" stroke-width="1.5" /><line x1="390" y1="508" x2="390" y2="535" stroke="#ff2a2a" stroke-width="1.5" /><line x1="401" y1="508" x2="401" y2="535" stroke="#ff2a2a" stroke-width="1.5" /><line x1="413" y1="508" x2="413" y2="535" stroke="#ff2a2a" stroke-width="1.5" /><line x1="427" y1="508" x2="427" y2="535" stroke="#ff2a2a" stroke-width="1.5" /><line x1="443" y1="508" x2="443" y2="535" stroke="#ff2a2a" stroke-width="1.5" /><line x1="458" y1="508" x2="458" y2="535" stroke="#ff2a2a" stroke-width="1.5" /><line x1="466" y1="508" x2="466" y2="535" stroke="#ff2a2a" stroke-width="1.5" /><rect x="401" y="508" width="12" height="27" fill="#ffffff" stroke="#ff2a2a" stroke-width="1.6" /><path d="M401 518.8 L413 508 M401 518.8 L413 535 M413 520.1 L401 508 M407 508 L404.6 535" stroke="#ff2a2a" stroke-width="0.9" fill="none" stroke-dasharray="3 1.5"/><rect x="427" y="508" width="16" height="27" fill="#ffffff" stroke="#ff2a2a" stroke-width="1.6" /><path d="M427 518.8 L443 508 M427 518.8 L443 535 M443 520.1 L427 508 M435 508 L431.8 535" stroke="#ff2a2a" stroke-width="0.9" fill="none" stroke-dasharray="3 1.5"/><rect x="466" y="508" width="8" height="27" fill="#ffffff" stroke="#ff2a2a" stroke-width="1.6" /><path d="M466 518.8 L474 508 M466 518.8 L474 535 M474 520.1 L466 508 M470 508 L468.4 535" stroke="#ff2a2a" stroke-width="0.9" fill="none" stroke-dasharray="3 1.5"/><rect x="376" y="536" width="101" height="3.5" fill="#ffff00" stroke="none" stroke-width="1" /><rect x="394" y="539" width="22" height="3" fill="#ffff00" stroke="#ff2a2a" stroke-width="0.6" /><rect x="461" y="539" width="22" height="3" fill="#ffff00" stroke="#ff2a2a" stroke-width="0.6" /><rect x="521" y="508" width="17" height="27" fill="#ffffff" stroke="#ff2a2a" stroke-width="1.6" /><path d="M521 518.8 L538 508 M521 518.8 L538 535 M538 520.1 L521 508 M529.5 508 L526.1 535" stroke="#ff2a2a" stroke-width="0.9" fill="none" stroke-dasharray="3 1.5"/><rect x="518" y="536" width="21" height="3" fill="#ffff00" stroke="#ff2a2a" stroke-width="0.6" /><rect x="380" y="560" width="94" height="27" fill="#ffffff" stroke="#ff2a2a" stroke-width="1.5" /><rect x="384" y="561" width="6" height="25" fill="url(#hatch)" stroke="none" stroke-width="1" /><rect x="391" y="561" width="10" height="25" fill="url(#hatch)" stroke="none" stroke-width="1" /><rect x="443" y="561" width="15" height="25" fill="url(#hatch)" stroke="none" stroke-width="1" /><rect x="459" y="561" width="7" height="25" fill="url(#hatch)" stroke="none" stroke-width="1" /><line x1="384" y1="560" x2="384" y2="587" stroke="#ff2a2a" stroke-width="1.5" /><line x1="390" y1="560" x2="390" y2="587" stroke="#ff2a2a" stroke-width="1.5" /><line x1="401" y1="560" x2="401" y2="587" stroke="#ff2a2a" stroke-width="1.5" /><line x1="413" y1="560" x2="413" y2="587" stroke="#ff2a2a" stroke-width="1.5" /><line x1="427" y1="560" x2="427" y2="587" stroke="#ff2a2a" stroke-width="1.5" /><line x1="443" y1="560" x2="443" y2="587" stroke="#ff2a2a" stroke-width="1.5" /><line x1="458" y1="560" x2="458" y2="587" stroke="#ff2a2a" stroke-width="1.5" /><line x1="466" y1="560" x2="466" y2="587" stroke="#ff2a2a" stroke-width="1.5" /><rect x="401" y="560" width="12" height="27" fill="#ffffff" stroke="#ff2a2a" stroke-width="1.6" /><path d="M401 570.8 L413 560 M401 570.8 L413 587 M413 572.1 L401 560 M407 560 L404.6 587" stroke="#ff2a2a" stroke-width="0.9" fill="none" stroke-dasharray="3 1.5"/><rect x="427" y="560" width="16" height="27" fill="#ffffff" stroke="#ff2a2a" stroke-width="1.6" /><path d="M427 570.8 L443 560 M427 570.8 L443 587 M443 572.1 L427 560 M435 560 L431.8 587" stroke="#ff2a2a" stroke-width="0.9" fill="none" stroke-dasharray="3 1.5"/><rect x="466" y="560" width="8" height="27" fill="#ffffff" stroke="#ff2a2a" stroke-width="1.6" /><path d="M466 570.8 L474 560 M466 570.8 L474 587 M474 572.1 L466 560 M470 560 L468.4 587" stroke="#ff2a2a" stroke-width="0.9" fill="none" stroke-dasharray="3 1.5"/><rect x="376" y="588" width="101" height="3.5" fill="#ffff00" stroke="none" stroke-width="1" /><rect x="394" y="591" width="22" height="3" fill="#ffff00" stroke="#ff2a2a" stroke-width="0.6" /><rect x="461" y="591" width="22" height="3" fill="#ffff00" stroke="#ff2a2a" stroke-width="0.6" /><rect x="521" y="560" width="17" height="27" fill="#ffffff" stroke="#ff2a2a" stroke-width="1.6" /><path d="M521 570.8 L538 560 M521 570.8 L538 587 M538 572.1 L521 560 M529.5 560 L526.1 587" stroke="#ff2a2a" stroke-width="0.9" fill="none" stroke-dasharray="3 1.5"/><rect x="518" y="588" width="21" height="3" fill="#ffff00" stroke="#ff2a2a" stroke-width="0.6" /><rect x="380" y="613" width="94" height="27" fill="#ffffff" stroke="#ff2a2a" stroke-width="1.5" /><rect x="384" y="614" width="6" height="25" fill="url(#hatch)" stroke="none" stroke-width="1" /><rect x="391" y="614" width="10" height="25" fill="url(#hatch)" stroke="none" stroke-width="1" /><rect x="443" y="614" width="15" height="25" fill="url(#hatch)" stroke="none" stroke-width="1" /><rect x="459" y="614" width="7" height="25" fill="url(#hatch)" stroke="none" stroke-width="1" /><line x1="384" y1="613" x2="384" y2="640" stroke="#ff2a2a" stroke-width="1.5" /><line x1="390" y1="613" x2="390" y2="640" stroke="#ff2a2a" stroke-width="1.5" /><line x1="401" y1="613" x2="401" y2="640" stroke="#ff2a2a" stroke-width="1.5" /><line x1="413" y1="613" x2="413" y2="640" stroke="#ff2a2a" stroke-width="1.5" /><line x1="427" y1="613" x2="427" y2="640" stroke="#ff2a2a" stroke-width="1.5" /><line x1="443" y1="613" x2="443" y2="640" stroke="#ff2a2a" stroke-width="1.5" /><line x1="458" y1="613" x2="458" y2="640" stroke="#ff2a2a" stroke-width="1.5" /><line x1="466" y1="613" x2="466" y2="640" stroke="#ff2a2a" stroke-width="1.5" /><rect x="401" y="613" width="12" height="27" fill="#ffffff" stroke="#ff2a2a" stroke-width="1.6" /><path d="M401 623.8 L413 613 M401 623.8 L413 640 M413 625.1 L401 613 M407 613 L404.6 640" stroke="#ff2a2a" stroke-width="0.9" fill="none" stroke-dasharray="3 1.5"/><rect x="427" y="613" width="16" height="27" fill="#ffffff" stroke="#ff2a2a" stroke-width="1.6" /><path d="M427 623.8 L443 613 M427 623.8 L443 640 M443 625.1 L427 613 M435 613 L431.8 640" stroke="#ff2a2a" stroke-width="0.9" fill="none" stroke-dasharray="3 1.5"/><rect x="466" y="613" width="8" height="27" fill="#ffffff" stroke="#ff2a2a" stroke-width="1.6" /><path d="M466 623.8 L474 613 M466 623.8 L474 640 M474 625.1 L466 613 M470 613 L468.4 640" stroke="#ff2a2a" stroke-width="0.9" fill="none" stroke-dasharray="3 1.5"/><rect x="376" y="641" width="101" height="3.5" fill="#ffff00" stroke="none" stroke-width="1" /><rect x="394" y="644" width="22" height="3" fill="#ffff00" stroke="#ff2a2a" stroke-width="0.6" /><rect x="461" y="644" width="22" height="3" fill="#ffff00" stroke="#ff2a2a" stroke-width="0.6" /><rect x="521" y="613" width="17" height="27" fill="#ffffff" stroke="#ff2a2a" stroke-width="1.6" /><path d="M521 623.8 L538 613 M521 623.8 L538 640 M538 625.1 L521 613 M529.5 613 L526.1 640" stroke="#ff2a2a" stroke-width="0.9" fill="none" stroke-dasharray="3 1.5"/><rect x="518" y="641" width="21" height="3" fill="#ffff00" stroke="#ff2a2a" stroke-width="0.6" /><rect x="380" y="665" width="94" height="27" fill="#ffffff" stroke="#ff2a2a" stroke-width="1.5" /><rect x="384" y="666" width="6" height="25" fill="url(#hatch)" stroke="none" stroke-width="1" /><rect x="391" y="666" width="10" height="25" fill="url(#hatch)" stroke="none" stroke-width="1" /><rect x="443" y="666" width="15" height="25" fill="url(#hatch)" stroke="none" stroke-width="1" /><rect x="459" y="666" width="7" height="25" fill="url(#hatch)" stroke="none" stroke-width="1" /><line x1="384" y1="665" x2="384" y2="692" stroke="#ff2a2a" stroke-width="1.5" /><line x1="390" y1="665" x2="390" y2="692" stroke="#ff2a2a" stroke-width="1.5" /><line x1="401" y1="665" x2="401" y2="692" stroke="#ff2a2a" stroke-width="1.5" /><line x1="413" y1="665" x2="413" y2="692" stroke="#ff2a2a" stroke-width="1.5" /><line x1="427" y1="665" x2="427" y2="692" stroke="#ff2a2a" stroke-width="1.5" /><line x1="443" y1="665" x2="443" y2="692" stroke="#ff2a2a" stroke-width="1.5" /><line x1="458" y1="665" x2="458" y2="692" stroke="#ff2a2a" stroke-width="1.5" /><line x1="466" y1="665" x2="466" y2="692" stroke="#ff2a2a" stroke-width="1.5" /><rect x="401" y="665" width="12" height="27" fill="#ffffff" stroke="#ff2a2a" stroke-width="1.6" /><path d="M401 675.8 L413 665 M401 675.8 L413 692 M413 677.1 L401 665 M407 665 L404.6 692" stroke="#ff2a2a" stroke-width="0.9" fill="none" stroke-dasharray="3 1.5"/><rect x="427" y="665" width="16" height="27" fill="#ffffff" stroke="#ff2a2a" stroke-width="1.6" /><path d="M427 675.8 L443 665 M427 675.8 L443 692 M443 677.1 L427 665 M435 665 L431.8 692" stroke="#ff2a2a" stroke-width="0.9" fill="none" stroke-dasharray="3 1.5"/><rect x="466" y="665" width="8" height="27" fill="#ffffff" stroke="#ff2a2a" stroke-width="1.6" /><path d="M466 675.8 L474 665 M466 675.8 L474 692 M474 677.1 L466 665 M470 665 L468.4 692" stroke="#ff2a2a" stroke-width="0.9" fill="none" stroke-dasharray="3 1.5"/><rect x="376" y="693" width="101" height="3.5" fill="#ffff00" stroke="none" stroke-width="1" /><rect x="394" y="696" width="22" height="3" fill="#ffff00" stroke="#ff2a2a" stroke-width="0.6" /><rect x="461" y="696" width="22" height="3" fill="#ffff00" stroke="#ff2a2a" stroke-width="0.6" /><rect x="521" y="665" width="17" height="27" fill="#ffffff" stroke="#ff2a2a" stroke-width="1.6" /><path d="M521 675.8 L538 665 M521 675.8 L538 692 M538 677.1 L521 665 M529.5 665 L526.1 692" stroke="#ff2a2a" stroke-width="0.9" fill="none" stroke-dasharray="3 1.5"/><rect x="518" y="693" width="21" height="3" fill="#ffff00" stroke="#ff2a2a" stroke-width="0.6" /><rect x="383" y="715" width="91" height="32" fill="#ffffff" stroke="#ff2a2a" stroke-width="1.5" /><rect x="390" y="716" width="12" height="30" fill="url(#hatch)" stroke="none" stroke-width="1" /><rect x="449" y="716" width="17" height="30" fill="url(#hatch)" stroke="none" stroke-width="1" /><rect x="402" y="715" width="14" height="36" fill="#ffffff" stroke="#ff2a2a" stroke-width="1.6" /><path d="M402 729.4 L416 715 M402 729.4 L416 751 M416 731.2 L402 715 M409 715 L406.2 751" stroke="#ff2a2a" stroke-width="0.9" fill="none" stroke-dasharray="3 1.5"/><rect x="418" y="715" width="16" height="32" fill="#ffffff" stroke="#ff2a2a" stroke-width="1.6" /><path d="M418 727.8 L434 715 M418 727.8 L434 747 M434 729.4 L418 715 M426 715 L422.8 747" stroke="#ff2a2a" stroke-width="0.9" fill="none" stroke-dasharray="3 1.5"/><rect x="378" y="748" width="100" height="3" fill="#ffff00" stroke="none" stroke-width="1" /><rect x="380" y="757" width="20" height="3" fill="#ffff00" stroke="#ff2a2a" stroke-width="0.6" /><rect x="455" y="757" width="20" height="3" fill="#ffff00" stroke="#ff2a2a" stroke-width="0.6" /><rect x="521" y="715" width="17" height="27" fill="#ffffff" stroke="#ff2a2a" stroke-width="1.6" /><path d="M521 725.8 L538 715 M521 725.8 L538 742 M538 727.1 L521 715 M529.5 715 L526.1 742" stroke="#ff2a2a" stroke-width="0.9" fill="none" stroke-dasharray="3 1.5"/><rect x="518" y="743" width="21" height="3" fill="#ffff00" stroke="#ff2a2a" stroke-width="0.6" /><rect x="518" y="757" width="21" height="3" fill="#ffff00" stroke="#ff2a2a" stroke-width="0.6" /><line x1="378" y1="504" x2="538" y2="504" stroke="#ffff00" stroke-width="1" /><line x1="378" y1="557" x2="538" y2="557" stroke="#ffff00" stroke-width="1" /><line x1="378" y1="609" x2="538" y2="609" stroke="#ffff00" stroke-width="1" /><line x1="378" y1="660" x2="538" y2="660" stroke="#ffff00" stroke-width="1" /><line x1="378" y1="713" x2="538" y2="713" stroke="#ffff00" stroke-width="1" /><line x1="538" y1="432" x2="538" y2="757" stroke="#ffff00" stroke-width="1.2" /><path d="M395 373A6.1 6.1 0 0 1 406 373A6.1 6.1 0 0 1 416.9 373A6.1 6.1 0 0 1 427.9 373A6.1 6.1 0 0 1 438.9 373A6.1 6.1 0 0 1 449.8 373A6.1 6.1 0 0 1 460.8 373A6.1 6.1 0 0 1 471.8 373A6.1 6.1 0 0 1 482.7 373A6.1 6.1 0 0 1 493.7 373A6.1 6.1 0 0 1 504.7 373A6.1 6.1 0 0 1 515.6 373A6.1 6.1 0 0 1 526.6 373A6.1 6.1 0 0 1 537.6 373A6.1 6.1 0 0 1 548.5 373A6.1 6.1 0 0 1 559.5 373A6.1 6.1 0 0 1 570.5 373A6.1 6.1 0 0 1 581.5 373A6.1 6.1 0 0 1 592.4 373A6.1 6.1 0 0 1 603.4 373A6.1 6.1 0 0 1 614.4 373A6.1 6.1 0 0 1 625.3 373A6.1 6.1 0 0 1 636.3 373A6.1 6.1 0 0 1 647.3 373A6.1 6.1 0 0 1 658.2 373A6.1 6.1 0 0 1 669.2 373A6.1 6.1 0 0 1 680.2 373A6.1 6.1 0 0 1 691.1 373A6.1 6.1 0 0 1 702.1 373A6.1 6.1 0 0 1 713.1 373A6.1 6.1 0 0 1 724 373A6.1 6.1 0 0 1 735 373M395 420A6.1 6.1 0 0 1 406 420A6.1 6.1 0 0 1 416.9 420A6.1 6.1 0 0 1 427.9 420A6.1 6.1 0 0 1 438.9 420A6.1 6.1 0 0 1 449.8 420A6.1 6.1 0 0 1 460.8 420A6.1 6.1 0 0 1 471.8 420A6.1 6.1 0 0 1 482.7 420A6.1 6.1 0 0 1 493.7 420A6.1 6.1 0 0 1 504.7 420A6.1 6.1 0 0 1 515.6 420A6.1 6.1 0 0 1 526.6 420A6.1 6.1 0 0 1 537.6 420A6.1 6.1 0 0 1 548.5 420A6.1 6.1 0 0 1 559.5 420A6.1 6.1 0 0 1 570.5 420A6.1 6.1 0 0 1 581.5 420A6.1 6.1 0 0 1 592.4 420A6.1 6.1 0 0 1 603.4 420A6.1 6.1 0 0 1 614.4 420A6.1 6.1 0 0 1 625.3 420A6.1 6.1 0 0 1 636.3 420A6.1 6.1 0 0 1 647.3 420A6.1 6.1 0 0 1 658.2 420A6.1 6.1 0 0 1 669.2 420A6.1 6.1 0 0 1 680.2 420A6.1 6.1 0 0 1 691.1 420A6.1 6.1 0 0 1 702.1 420A6.1 6.1 0 0 1 713.1 420A6.1 6.1 0 0 1 724 420A6.1 6.1 0 0 1 735 420M395 448A6.2 6.2 0 0 1 406 448A6.2 6.2 0 0 1 417 448A6.2 6.2 0 0 1 428 448A6.2 6.2 0 0 1 439 448A6.2 6.2 0 0 1 450 448A6.2 6.2 0 0 1 461 448A6.2 6.2 0 0 1 472 448A6.2 6.2 0 0 1 483 448A6.2 6.2 0 0 1 494 448A6.2 6.2 0 0 1 505 448A6.2 6.2 0 0 1 516 448A6.2 6.2 0 0 1 527 448A6.2 6.2 0 0 1 538 448M380 497A6.3 6.3 0 0 1 391.3 497A6.3 6.3 0 0 1 402.6 497A6.3 6.3 0 0 1 413.9 497A6.3 6.3 0 0 1 425.1 497A6.3 6.3 0 0 1 436.4 497A6.3 6.3 0 0 1 447.7 497A6.3 6.3 0 0 1 459 497A6.3 6.3 0 0 1 470.3 497A6.3 6.3 0 0 1 481.6 497A6.3 6.3 0 0 1 492.9 497A6.3 6.3 0 0 1 504.1 497A6.3 6.3 0 0 1 515.4 497A6.3 6.3 0 0 1 526.7 497A6.3 6.3 0 0 1 538 497M538 432Q540.8 434.2 543.5 432Q546.3 429.8 549 432Q551.8 434.2 554.6 432Q557.3 429.8 560.1 432Q562.9 434.2 565.6 432Q568.4 429.8 571.1 432Q573.9 434.2 576.7 432Q579.4 429.8 582.2 432Q584.9 434.2 587.7 432Q590.5 429.8 593.2 432Q596 434.2 598.8 432Q601.5 429.8 604.3 432Q607 434.2 609.8 432Q612.6 429.8 615.3 432Q618.1 434.2 620.8 432Q623.6 429.8 626.4 432Q629.1 434.2 631.9 432Q634.7 429.8 637.4 432Q640.2 434.2 642.9 432Q645.7 429.8 648.5 432Q651.2 434.2 654 432Q656.7 429.8 659.5 432Q662.3 434.2 665 432Q667.8 429.8 670.6 432Q673.3 434.2 676.1 432Q678.8 429.8 681.6 432Q684.4 434.2 687.1 432Q689.9 429.8 692.6 432Q695.4 434.2 698.2 432Q700.9 429.8 703.7 432Q706.4 434.2 709.2 432Q712 429.8 714.7 432Q717.5 434.2 720.3 432Q723 429.8 725.8 432Q728.5 434.2 731.3 432Q734.1 429.8 736.8 432Q739.6 434.2 742.3 432Q745.1 429.8 747.9 432Q750.6 434.2 753.4 432Q756.2 429.8 758.9 432Q761.7 434.2 764.4 432Q767.2 429.8 770 432Q772.7 434.2 775.5 432Q778.2 429.8 781 432Q783.8 434.2 786.5 432Q789.3 429.8 792.1 432Q794.8 434.2 797.6 432Q800.3 429.8 803.1 432Q805.9 434.2 808.6 432Q811.4 429.8 814.1 432Q816.9 434.2 819.7 432Q822.4 429.8 825.2 432Q828 434.2 830.7 432Q833.5 429.8 836.2 432Q839 434.2 841.8 432Q844.5 429.8 847.3 432Q850 434.2 852.8 432Q855.6 429.8 858.3 432Q861.1 434.2 863.9 432Q866.6 429.8 869.4 432Q872.1 434.2 874.9 432Q877.7 429.8 880.4 432Q883.2 434.2 885.9 432Q888.7 429.8 891.5 432Q894.2 434.2 897 432Q899.8 429.8 902.5 432Q905.3 434.2 908 432Q910.8 429.8 913.6 432Q916.3 434.2 919.1 432Q921.8 429.8 924.6 432Q927.4 434.2 930.1 432Q932.9 429.8 935.7 432Q938.4 434.2 941.2 432Q943.9 429.8 946.7 432Q949.5 434.2 952.2 432Q955 429.8 957.7 432Q960.5 434.2 963.3 432Q966 429.8 968.8 432Q971.6 434.2 974.3 432Q977.1 429.8 979.8 432Q982.6 434.2 985.4 432Q988.1 429.8 990.9 432Q993.6 434.2 996.4 432Q999.2 429.8 1001.9 432Q1004.7 434.2 1007.4 432Q1010.2 429.8 1013 432Q1015.7 434.2 1018.5 432Q1021.3 429.8 1024 432Q1026.8 434.2 1029.5 432Q1032.3 429.8 1035.1 432Q1037.8 434.2 1040.6 432Q1043.3 429.8 1046.1 432Q1048.9 434.2 1051.6 432Q1054.4 429.8 1057.2 432Q1059.9 434.2 1062.7 432Q1065.4 429.8 1068.2 432Q1071 434.2 1073.7 432Q1076.5 429.8 1079.2 432Q1082 434.2 1084.8 432Q1087.5 429.8 1090.3 432Q1093.1 434.2 1095.8 432Q1098.6 429.8 1101.3 432Q1104.1 434.2 1106.9 432Q1109.6 429.8 1112.4 432Q1115.1 434.2 1117.9 432Q1120.7 429.8 1123.4 432Q1126.2 434.2 1129 432Q1131.7 429.8 1134.5 432Q1137.2 434.2 1140 432M538 447Q540.7 449.2 543.5 447Q546.2 444.8 549 447Q551.7 449.2 554.4 447Q557.2 444.8 559.9 447Q562.6 449.2 565.4 447Q568.1 444.8 570.9 447Q573.6 449.2 576.3 447Q579.1 444.8 581.8 447Q584.5 449.2 587.3 447Q590 444.8 592.8 447Q595.5 449.2 598.2 447Q601 444.8 603.7 447Q606.4 449.2 609.2 447Q611.9 444.8 614.7 447Q617.4 449.2 620.1 447Q622.9 444.8 625.6 447Q628.3 449.2 631.1 447Q633.8 444.8 636.6 447Q639.3 449.2 642 447Q644.8 444.8 647.5 447Q650.2 449.2 653 447Q655.7 444.8 658.5 447Q661.2 449.2 663.9 447Q666.7 444.8 669.4 447Q672.1 449.2 674.9 447Q677.6 444.8 680.4 447Q683.1 449.2 685.8 447Q688.6 444.8 691.3 447Q694 449.2 696.8 447Q699.5 444.8 702.3 447Q705 449.2 707.7 447Q710.5 444.8 713.2 447Q716 449.2 718.7 447Q721.4 444.8 724.2 447Q726.9 449.2 729.6 447Q732.4 444.8 735.1 447Q737.9 449.2 740.6 447Q743.3 444.8 746.1 447Q748.8 449.2 751.5 447Q754.3 444.8 757 447Q759.8 449.2 762.5 447Q765.2 444.8 768 447Q770.7 449.2 773.4 447Q776.2 444.8 778.9 447Q781.7 449.2 784.4 447Q787.1 444.8 789.9 447Q792.6 449.2 795.3 447Q798.1 444.8 800.8 447Q803.6 449.2 806.3 447Q809 444.8 811.8 447Q814.5 449.2 817.2 447Q820 444.8 822.7 447Q825.5 449.2 828.2 447Q830.9 444.8 833.7 447Q836.4 449.2 839.1 447Q841.9 444.8 844.6 447Q847.4 449.2 850.1 447Q852.8 444.8 855.6 447Q858.3 449.2 861 447Q863.8 444.8 866.5 447Q869.3 449.2 872 447M992 447Q994.7 449.2 997.4 447Q1000.1 444.8 1002.8 447Q1005.5 449.2 1008.2 447Q1010.9 444.8 1013.6 447Q1016.3 449.2 1019 447Q1021.7 444.8 1024.4 447Q1027.1 449.2 1029.9 447Q1032.6 444.8 1035.3 447Q1038 449.2 1040.7 447Q1043.4 444.8 1046.1 447Q1048.8 449.2 1051.5 447Q1054.2 444.8 1056.9 447Q1059.6 449.2 1062.3 447Q1065 444.8 1067.7 447Q1070.4 449.2 1073.1 447Q1075.8 444.8 1078.5 447Q1081.2 449.2 1083.9 447Q1086.6 444.8 1089.3 447Q1092 449.2 1094.7 447Q1097.4 444.8 1100.1 447Q1102.9 449.2 1105.6 447Q1108.3 444.8 1111 447Q1113.7 449.2 1116.4 447Q1119.1 444.8 1121.8 447Q1124.5 449.2 1127.2 447Q1129.9 444.8 1132.6 447Q1135.3 449.2 1138 447M738 421A6.2 6.2 0 0 1 749 421A6.2 6.2 0 0 1 760.1 421A6.2 6.2 0 0 1 771.1 421A6.2 6.2 0 0 1 782.1 421A6.2 6.2 0 0 1 793.1 421A6.2 6.2 0 0 1 804.2 421A6.2 6.2 0 0 1 815.2 421A6.2 6.2 0 0 1 826.2 421A6.2 6.2 0 0 1 837.2 421A6.2 6.2 0 0 1 848.3 421A6.2 6.2 0 0 1 859.3 421A6.2 6.2 0 0 1 870.3 421A6.2 6.2 0 0 1 881.4 421A6.2 6.2 0 0 1 892.4 421A6.2 6.2 0 0 1 903.4 421A6.2 6.2 0 0 1 914.4 421A6.2 6.2 0 0 1 925.5 421A6.2 6.2 0 0 1 936.5 421A6.2 6.2 0 0 1 947.5 421A6.2 6.2 0 0 1 958.6 421A6.2 6.2 0 0 1 969.6 421A6.2 6.2 0 0 1 980.6 421A6.2 6.2 0 0 1 991.6 421A6.2 6.2 0 0 1 1002.7 421A6.2 6.2 0 0 1 1013.7 421A6.2 6.2 0 0 1 1024.7 421A6.2 6.2 0 0 1 1035.8 421A6.2 6.2 0 0 1 1046.8 421A6.2 6.2 0 0 1 1057.8 421A6.2 6.2 0 0 1 1068.8 421A6.2 6.2 0 0 1 1079.9 421A6.2 6.2 0 0 1 1090.9 421A6.2 6.2 0 0 1 1101.9 421A6.2 6.2 0 0 1 1112.9 421A6.2 6.2 0 0 1 1124 421A6.2 6.2 0 0 1 1135 421M1090 377A6.3 6.3 0 0 1 1101.2 377A6.3 6.3 0 0 1 1112.5 377A6.3 6.3 0 0 1 1123.8 377A6.3 6.3 0 0 1 1135 377A6.7 6.7 0 0 1 1135 389A6.7 6.7 0 0 1 1135 401A6.7 6.7 0 0 1 1135 413A6.7 6.7 0 0 1 1135 425M735 377A6.2 6.2 0 0 1 746.1 377A6.2 6.2 0 0 1 757.2 377A6.2 6.2 0 0 1 768.3 377A6.2 6.2 0 0 1 779.4 377A6.2 6.2 0 0 1 790.6 377A6.2 6.2 0 0 1 801.7 377A6.2 6.2 0 0 1 812.8 377A6.2 6.2 0 0 1 823.9 377A6.2 6.2 0 0 1 835 377A6.2 6.2 0 0 1 846.1 377A6.2 6.2 0 0 1 857.2 377A6.2 6.2 0 0 1 868.3 377A6.2 6.2 0 0 1 879.4 377A6.2 6.2 0 0 1 890.6 377A6.2 6.2 0 0 1 901.7 377A6.2 6.2 0 0 1 912.8 377A6.2 6.2 0 0 1 923.9 377A6.2 6.2 0 0 1 935 377A6.2 6.2 0 0 1 946.1 377A6.2 6.2 0 0 1 957.2 377A6.2 6.2 0 0 1 968.3 377A6.2 6.2 0 0 1 979.4 377A6.2 6.2 0 0 1 990.6 377A6.2 6.2 0 0 1 1001.7 377A6.2 6.2 0 0 1 1012.8 377A6.2 6.2 0 0 1 1023.9 377A6.2 6.2 0 0 1 1035 377A6.2 6.2 0 0 1 1046.1 377A6.2 6.2 0 0 1 1057.2 377A6.2 6.2 0 0 1 1068.3 377A6.2 6.2 0 0 1 1079.4 377A6.2 6.2 0 0 1 1090.6 377A6.2 6.2 0 0 1 1101.7 377A6.2 6.2 0 0 1 1112.8 377A6.2 6.2 0 0 1 1123.9 377A6.2 6.2 0 0 1 1135 377M392 372A6.2 6.2 0 0 1 403 372A6.2 6.2 0 0 1 414 372A6.2 6.2 0 0 1 425 372A6.3 6.3 0 0 1 425 383.2A6.3 6.3 0 0 1 425 394.4A6.3 6.3 0 0 1 425 405.5A6.3 6.3 0 0 1 425 416.7A6.3 6.3 0 0 1 425 427.9A6.3 6.3 0 0 1 425 439.1A6.3 6.3 0 0 1 425 450.3A6.3 6.3 0 0 1 425 461.5A6.3 6.3 0 0 1 425 472.6A6.3 6.3 0 0 1 425 483.8A6.3 6.3 0 0 1 425 495A6.2 6.2 0 0 1 414 495A6.2 6.2 0 0 1 403 495A6.2 6.2 0 0 1 392 495A6.3 6.3 0 0 1 392 483.8A6.3 6.3 0 0 1 392 472.6A6.3 6.3 0 0 1 392 461.5A6.3 6.3 0 0 1 392 450.3A6.3 6.3 0 0 1 392 439.1A6.3 6.3 0 0 1 392 427.9A6.3 6.3 0 0 1 392 416.7A6.3 6.3 0 0 1 392 405.5A6.3 6.3 0 0 1 392 394.4A6.3 6.3 0 0 1 392 383.2A6.3 6.3 0 0 1 392 372M374 418A5.9 5.9 0 0 1 384.5 418A5.9 5.9 0 0 1 395 418A6.3 6.3 0 0 1 395 429.3A6.3 6.3 0 0 1 395 440.7A6.3 6.3 0 0 1 395 452A5.9 5.9 0 0 1 384.5 452A5.9 5.9 0 0 1 374 452A6.3 6.3 0 0 1 374 440.7A6.3 6.3 0 0 1 374 429.3A6.3 6.3 0 0 1 374 418M363 478A4.8 4.8 0 0 1 371.5 478A4.8 4.8 0 0 1 380 478A6.2 6.2 0 0 1 380 489A6.2 6.2 0 0 1 380 500.1A6.2 6.2 0 0 1 380 511.1A6.2 6.2 0 0 1 380 522.2A6.2 6.2 0 0 1 380 533.2A6.2 6.2 0 0 1 380 544.2A6.2 6.2 0 0 1 380 555.3A6.2 6.2 0 0 1 380 566.3A6.2 6.2 0 0 1 380 577.3A6.2 6.2 0 0 1 380 588.4A6.2 6.2 0 0 1 380 599.4A6.2 6.2 0 0 1 380 610.5A6.2 6.2 0 0 1 380 621.5A6.2 6.2 0 0 1 380 632.5A6.2 6.2 0 0 1 380 643.6A6.2 6.2 0 0 1 380 654.6A6.2 6.2 0 0 1 380 665.7A6.2 6.2 0 0 1 380 676.7A6.2 6.2 0 0 1 380 687.7A6.2 6.2 0 0 1 380 698.8A6.2 6.2 0 0 1 380 709.8A6.2 6.2 0 0 1 380 720.8A6.2 6.2 0 0 1 380 731.9A6.2 6.2 0 0 1 380 742.9A6.2 6.2 0 0 1 380 754A6.2 6.2 0 0 1 380 765A4.8 4.8 0 0 1 371.5 765A4.8 4.8 0 0 1 363 765A6.2 6.2 0 0 1 363 754A6.2 6.2 0 0 1 363 742.9A6.2 6.2 0 0 1 363 731.9A6.2 6.2 0 0 1 363 720.8A6.2 6.2 0 0 1 363 709.8A6.2 6.2 0 0 1 363 698.8A6.2 6.2 0 0 1 363 687.7A6.2 6.2 0 0 1 363 676.7A6.2 6.2 0 0 1 363 665.7A6.2 6.2 0 0 1 363 654.6A6.2 6.2 0 0 1 363 643.6A6.2 6.2 0 0 1 363 632.5A6.2 6.2 0 0 1 363 621.5A6.2 6.2 0 0 1 363 610.5A6.2 6.2 0 0 1 363 599.4A6.2 6.2 0 0 1 363 588.4A6.2 6.2 0 0 1 363 577.3A6.2 6.2 0 0 1 363 566.3A6.2 6.2 0 0 1 363 555.3A6.2 6.2 0 0 1 363 544.2A6.2 6.2 0 0 1 363 533.2A6.2 6.2 0 0 1 363 522.2A6.2 6.2 0 0 1 363 511.1A6.2 6.2 0 0 1 363 500.1A6.2 6.2 0 0 1 363 489A6.2 6.2 0 0 1 363 478M378 497A6 6 0 0 1 388.7 497A6 6 0 0 1 399.4 497A6 6 0 0 1 410.1 497A6 6 0 0 1 420.8 497A6 6 0 0 1 431.5 497A6 6 0 0 1 442.2 497A6 6 0 0 1 452.9 497A6 6 0 0 1 463.6 497A6 6 0 0 1 474.3 497A6 6 0 0 1 485 497A6.3 6.3 0 0 1 485 508.2A6.3 6.3 0 0 1 485 519.3A6.3 6.3 0 0 1 485 530.5A6.3 6.3 0 0 1 485 541.7A6.3 6.3 0 0 1 485 552.8A6.3 6.3 0 0 1 485 564A6.3 6.3 0 0 1 485 575.2A6.3 6.3 0 0 1 485 586.3A6.3 6.3 0 0 1 485 597.5A6.3 6.3 0 0 1 485 608.7A6.3 6.3 0 0 1 485 619.8A6.3 6.3 0 0 1 485 631A6.3 6.3 0 0 1 485 642.2A6.3 6.3 0 0 1 485 653.3A6.3 6.3 0 0 1 485 664.5A6.3 6.3 0 0 1 485 675.7A6.3 6.3 0 0 1 485 686.8A6.3 6.3 0 0 1 485 698A6.3 6.3 0 0 1 485 709.2A6.3 6.3 0 0 1 485 720.3A6.3 6.3 0 0 1 485 731.5A6.3 6.3 0 0 1 485 742.7A6.3 6.3 0 0 1 485 753.8A6.3 6.3 0 0 1 485 765A6 6 0 0 1 474.3 765A6 6 0 0 1 463.6 765A6 6 0 0 1 452.9 765A6 6 0 0 1 442.2 765A6 6 0 0 1 431.5 765A6 6 0 0 1 420.8 765A6 6 0 0 1 410.1 765A6 6 0 0 1 399.4 765A6 6 0 0 1 388.7 765A6 6 0 0 1 378 765A6.3 6.3 0 0 1 378 753.8A6.3 6.3 0 0 1 378 742.7A6.3 6.3 0 0 1 378 731.5A6.3 6.3 0 0 1 378 720.3A6.3 6.3 0 0 1 378 709.2A6.3 6.3 0 0 1 378 698A6.3 6.3 0 0 1 378 686.8A6.3 6.3 0 0 1 378 675.7A6.3 6.3 0 0 1 378 664.5A6.3 6.3 0 0 1 378 653.3A6.3 6.3 0 0 1 378 642.2A6.3 6.3 0 0 1 378 631A6.3 6.3 0 0 1 378 619.8A6.3 6.3 0 0 1 378 608.7A6.3 6.3 0 0 1 378 597.5A6.3 6.3 0 0 1 378 586.3A6.3 6.3 0 0 1 378 575.2A6.3 6.3 0 0 1 378 564A6.3 6.3 0 0 1 378 552.8A6.3 6.3 0 0 1 378 541.7A6.3 6.3 0 0 1 378 530.5A6.3 6.3 0 0 1 378 519.3A6.3 6.3 0 0 1 378 508.2A6.3 6.3 0 0 1 378 497M507 497A7.1 7.1 0 0 1 519.7 497A7.1 7.1 0 0 1 532.3 497A7.1 7.1 0 0 1 545 497A6.3 6.3 0 0 1 545 508.2A6.3 6.3 0 0 1 545 519.3A6.3 6.3 0 0 1 545 530.5A6.3 6.3 0 0 1 545 541.7A6.3 6.3 0 0 1 545 552.8A6.3 6.3 0 0 1 545 564A6.3 6.3 0 0 1 545 575.2A6.3 6.3 0 0 1 545 586.3A6.3 6.3 0 0 1 545 597.5A6.3 6.3 0 0 1 545 608.7A6.3 6.3 0 0 1 545 619.8A6.3 6.3 0 0 1 545 631A6.3 6.3 0 0 1 545 642.2A6.3 6.3 0 0 1 545 653.3A6.3 6.3 0 0 1 545 664.5A6.3 6.3 0 0 1 545 675.7A6.3 6.3 0 0 1 545 686.8A6.3 6.3 0 0 1 545 698A6.3 6.3 0 0 1 545 709.2A6.3 6.3 0 0 1 545 720.3A6.3 6.3 0 0 1 545 731.5A6.3 6.3 0 0 1 545 742.7A6.3 6.3 0 0 1 545 753.8A6.3 6.3 0 0 1 545 765A7.1 7.1 0 0 1 532.3 765A7.1 7.1 0 0 1 519.7 765A7.1 7.1 0 0 1 507 765A6.3 6.3 0 0 1 507 753.8A6.3 6.3 0 0 1 507 742.7A6.3 6.3 0 0 1 507 731.5A6.3 6.3 0 0 1 507 720.3A6.3 6.3 0 0 1 507 709.2A6.3 6.3 0 0 1 507 698A6.3 6.3 0 0 1 507 686.8A6.3 6.3 0 0 1 507 675.7A6.3 6.3 0 0 1 507 664.5A6.3 6.3 0 0 1 507 653.3A6.3 6.3 0 0 1 507 642.2A6.3 6.3 0 0 1 507 631A6.3 6.3 0 0 1 507 619.8A6.3 6.3 0 0 1 507 608.7A6.3 6.3 0 0 1 507 597.5A6.3 6.3 0 0 1 507 586.3A6.3 6.3 0 0 1 507 575.2A6.3 6.3 0 0 1 507 564A6.3 6.3 0 0 1 507 552.8A6.3 6.3 0 0 1 507 541.7A6.3 6.3 0 0 1 507 530.5A6.3 6.3 0 0 1 507 519.3A6.3 6.3 0 0 1 507 508.2A6.3 6.3 0 0 1 507 497M714.5 447Q716.7 449.7 714.5 452.5Q712.3 455.2 714.5 458Q716.7 460.7 714.5 463.5Q712.3 466.2 714.5 469Q716.7 471.7 714.5 474.5Q712.3 477.2 714.5 479.9Q716.7 482.7 714.5 485.4Q712.3 488.2 714.5 490.9Q716.7 493.7 714.5 496.4Q712.3 499.2 714.5 501.9Q716.7 504.7 714.5 507.4Q712.3 510.1 714.5 512.9Q716.7 515.6 714.5 518.4Q712.3 521.1 714.5 523.9Q716.7 526.6 714.5 529.4Q712.3 532.1 714.5 534.9Q716.7 537.6 714.5 540.4Q712.3 543.1 714.5 545.8Q716.7 548.6 714.5 551.3Q712.3 554.1 714.5 556.8Q716.7 559.6 714.5 562.3Q712.3 565.1 714.5 567.8Q716.7 570.6 714.5 573.3Q712.3 576 714.5 578.8Q716.7 581.5 714.5 584.3Q712.3 587 714.5 589.8Q716.7 592.5 714.5 595.3Q712.3 598 714.5 600.8Q716.7 603.5 714.5 606.2Q712.3 609 714.5 611.7Q716.7 614.5 714.5 617.2Q712.3 620 714.5 622.7Q716.7 625.5 714.5 628.2Q712.3 631 714.5 633.7Q716.7 636.4 714.5 639.2Q712.3 641.9 714.5 644.7Q716.7 647.4 714.5 650.2Q712.3 652.9 714.5 655.7Q716.7 658.4 714.5 661.2Q712.3 663.9 714.5 666.6Q716.7 669.4 714.5 672.1Q712.3 674.9 714.5 677.6Q716.7 680.4 714.5 683.1Q712.3 685.9 714.5 688.6Q716.7 691.4 714.5 694.1Q712.3 696.9 714.5 699.6Q716.7 702.3 714.5 705.1Q712.3 707.8 714.5 710.6Q716.7 713.3 714.5 716.1Q712.3 718.8 714.5 721.6Q716.7 724.3 714.5 727.1Q712.3 729.8 714.5 732.5Q716.7 735.3 714.5 738Q712.3 740.8 714.5 743.5Q716.7 746.3 714.5 749Q712.3 751.8 714.5 754.5Q716.7 757.3 714.5 760M732 447Q734.2 449.7 732 452.5Q729.8 455.2 732 458Q734.2 460.7 732 463.5Q729.8 466.2 732 469Q734.2 471.7 732 474.5Q729.8 477.2 732 479.9Q734.2 482.7 732 485.4Q729.8 488.2 732 490.9Q734.2 493.7 732 496.4Q729.8 499.2 732 501.9Q734.2 504.7 732 507.4Q729.8 510.1 732 512.9Q734.2 515.6 732 518.4Q729.8 521.1 732 523.9Q734.2 526.6 732 529.4Q729.8 532.1 732 534.9Q734.2 537.6 732 540.4Q729.8 543.1 732 545.8Q734.2 548.6 732 551.3Q729.8 554.1 732 556.8Q734.2 559.6 732 562.3Q729.8 565.1 732 567.8Q734.2 570.6 732 573.3Q729.8 576 732 578.8Q734.2 581.5 732 584.3Q729.8 587 732 589.8Q734.2 592.5 732 595.3Q729.8 598 732 600.8Q734.2 603.5 732 606.2Q729.8 609 732 611.7Q734.2 614.5 732 617.2Q729.8 620 732 622.7Q734.2 625.5 732 628.2Q729.8 631 732 633.7Q734.2 636.4 732 639.2Q729.8 641.9 732 644.7Q734.2 647.4 732 650.2Q729.8 652.9 732 655.7Q734.2 658.4 732 661.2Q729.8 663.9 732 666.6Q734.2 669.4 732 672.1Q729.8 674.9 732 677.6Q734.2 680.4 732 683.1Q729.8 685.9 732 688.6Q734.2 691.4 732 694.1Q729.8 696.9 732 699.6Q734.2 702.3 732 705.1Q729.8 707.8 732 710.6Q734.2 713.3 732 716.1Q729.8 718.8 732 721.6Q734.2 724.3 732 727.1Q729.8 729.8 732 732.5Q734.2 735.3 732 738Q729.8 740.8 732 743.5Q734.2 746.3 732 749Q729.8 751.8 732 754.5Q734.2 757.3 732 760M732 760A4.9 4.9 0 0 1 723.2 760A4.9 4.9 0 0 1 714.5 760M1131 425Q1133.2 427.7 1131 430.5Q1128.8 433.2 1131 436Q1133.2 438.7 1131 441.5Q1128.8 444.2 1131 447Q1133.2 449.7 1131 452.5Q1128.8 455.2 1131 458Q1133.2 460.7 1131 463.4Q1128.8 466.2 1131 468.9Q1133.2 471.7 1131 474.4Q1128.8 477.2 1131 479.9Q1133.2 482.7 1131 485.4Q1128.8 488.2 1131 490.9Q1133.2 493.6 1131 496.4Q1128.8 499.1 1131 501.9Q1133.2 504.6 1131 507.4Q1128.8 510.1 1131 512.9Q1133.2 515.6 1131 518.4Q1128.8 521.1 1131 523.9Q1133.2 526.6 1131 529.3Q1128.8 532.1 1131 534.8Q1133.2 537.6 1131 540.3Q1128.8 543.1 1131 545.8Q1133.2 548.6 1131 551.3Q1128.8 554.1 1131 556.8Q1133.2 559.5 1131 562.3Q1128.8 565 1131 567.8Q1133.2 570.5 1131 573.3Q1128.8 576 1131 578.8Q1133.2 581.5 1131 584.3Q1128.8 587 1131 589.8Q1133.2 592.5 1131 595.2Q1128.8 598 1131 600.7Q1133.2 603.5 1131 606.2Q1128.8 609 1131 611.7Q1133.2 614.5 1131 617.2Q1128.8 620 1131 622.7Q1133.2 625.5 1131 628.2Q1128.8 630.9 1131 633.7Q1133.2 636.4 1131 639.2Q1128.8 641.9 1131 644.7Q1133.2 647.4 1131 650.2Q1128.8 652.9 1131 655.7Q1133.2 658.4 1131 661.1Q1128.8 663.9 1131 666.6Q1133.2 669.4 1131 672.1Q1128.8 674.9 1131 677.6Q1133.2 680.4 1131 683.1Q1128.8 685.9 1131 688.6Q1133.2 691.4 1131 694.1Q1128.8 696.8 1131 699.6Q1133.2 702.3 1131 705.1Q1128.8 707.8 1131 710.6Q1133.2 713.3 1131 716.1Q1128.8 718.8 1131 721.6Q1133.2 724.3 1131 727Q1128.8 729.8 1131 732.5Q1133.2 735.3 1131 738Q1128.8 740.8 1131 743.5Q1133.2 746.3 1131 749Q1128.8 751.8 1131 754.5Q1133.2 757.3 1131 760M1148 425Q1150.2 427.7 1148 430.5Q1145.8 433.2 1148 436Q1150.2 438.7 1148 441.5Q1145.8 444.2 1148 447Q1150.2 449.7 1148 452.5Q1145.8 455.2 1148 458Q1150.2 460.7 1148 463.4Q1145.8 466.2 1148 468.9Q1150.2 471.7 1148 474.4Q1145.8 477.2 1148 479.9Q1150.2 482.7 1148 485.4Q1145.8 488.2 1148 490.9Q1150.2 493.6 1148 496.4Q1145.8 499.1 1148 501.9Q1150.2 504.6 1148 507.4Q1145.8 510.1 1148 512.9Q1150.2 515.6 1148 518.4Q1145.8 521.1 1148 523.9Q1150.2 526.6 1148 529.3Q1145.8 532.1 1148 534.8Q1150.2 537.6 1148 540.3Q1145.8 543.1 1148 545.8Q1150.2 548.6 1148 551.3Q1145.8 554.1 1148 556.8Q1150.2 559.5 1148 562.3Q1145.8 565 1148 567.8Q1150.2 570.5 1148 573.3Q1145.8 576 1148 578.8Q1150.2 581.5 1148 584.3Q1145.8 587 1148 589.8Q1150.2 592.5 1148 595.2Q1145.8 598 1148 600.7Q1150.2 603.5 1148 606.2Q1145.8 609 1148 611.7Q1150.2 614.5 1148 617.2Q1145.8 620 1148 622.7Q1150.2 625.5 1148 628.2Q1145.8 630.9 1148 633.7Q1150.2 636.4 1148 639.2Q1145.8 641.9 1148 644.7Q1150.2 647.4 1148 650.2Q1145.8 652.9 1148 655.7Q1150.2 658.4 1148 661.1Q1145.8 663.9 1148 666.6Q1150.2 669.4 1148 672.1Q1145.8 674.9 1148 677.6Q1150.2 680.4 1148 683.1Q1145.8 685.9 1148 688.6Q1150.2 691.4 1148 694.1Q1145.8 696.8 1148 699.6Q1150.2 702.3 1148 705.1Q1145.8 707.8 1148 710.6Q1150.2 713.3 1148 716.1Q1145.8 718.8 1148 721.6Q1150.2 724.3 1148 727Q1145.8 729.8 1148 732.5Q1150.2 735.3 1148 738Q1145.8 740.8 1148 743.5Q1150.2 746.3 1148 749Q1145.8 751.8 1148 754.5Q1150.2 757.3 1148 760M1148 760A4.8 4.8 0 0 1 1139.5 760A4.8 4.8 0 0 1 1131 760M1120 440A6.2 6.2 0 0 1 1120 429A6.2 6.2 0 0 1 1120 418A5.6 5.6 0 0 1 1130 418A5.6 5.6 0 0 1 1140 418A5.6 5.6 0 0 1 1150 418A5.6 5.6 0 0 1 1160 418A6.2 6.2 0 0 1 1160 429A6.2 6.2 0 0 1 1160 440M884 437A5.8 5.8 0 0 1 894.4 437A5.8 5.8 0 0 1 904.9 437A5.8 5.8 0 0 1 915.3 437A5.8 5.8 0 0 1 925.8 437A5.8 5.8 0 0 1 936.2 437A5.8 5.8 0 0 1 946.7 437A5.8 5.8 0 0 1 957.1 437A5.8 5.8 0 0 1 967.6 437A5.8 5.8 0 0 1 978 437A6.2 6.2 0 0 1 978 448A6.2 6.2 0 0 1 978 459A5.8 5.8 0 0 1 967.6 459A5.8 5.8 0 0 1 957.1 459A5.8 5.8 0 0 1 946.7 459A5.8 5.8 0 0 1 936.2 459A5.8 5.8 0 0 1 925.8 459A5.8 5.8 0 0 1 915.3 459A5.8 5.8 0 0 1 904.9 459A5.8 5.8 0 0 1 894.4 459A5.8 5.8 0 0 1 884 459A6.2 6.2 0 0 1 884 448A6.2 6.2 0 0 1 884 437M893 470A6.2 6.2 0 0 1 904 470A6.2 6.2 0 0 1 915 470A6.2 6.2 0 0 1 926 470A6.2 6.2 0 0 1 937 470A6.2 6.2 0 0 1 948 470A6.2 6.2 0 0 1 959 470A6.2 6.2 0 0 1 970 470A6.4 6.4 0 0 1 970 481.5A6.4 6.4 0 0 1 970 493A6.4 6.4 0 0 1 970 504.5A6.4 6.4 0 0 1 970 516A6.4 6.4 0 0 1 970 527.5A6.4 6.4 0 0 1 970 539A6.4 6.4 0 0 1 970 550.5A6.4 6.4 0 0 1 970 562A6.2 6.2 0 0 1 959 562A6.2 6.2 0 0 1 948 562A6.2 6.2 0 0 1 937 562A6.2 6.2 0 0 1 926 562A6.2 6.2 0 0 1 915 562A6.2 6.2 0 0 1 904 562A6.2 6.2 0 0 1 893 562A6.4 6.4 0 0 1 893 550.5A6.4 6.4 0 0 1 893 539A6.4 6.4 0 0 1 893 527.5A6.4 6.4 0 0 1 893 516A6.4 6.4 0 0 1 893 504.5A6.4 6.4 0 0 1 893 493A6.4 6.4 0 0 1 893 481.5A6.4 6.4 0 0 1 893 470M893 648A5.3 5.3 0 0 1 902.4 648A5.3 5.3 0 0 1 911.8 648A5.3 5.3 0 0 1 921.1 648A5.3 5.3 0 0 1 930.5 648A5.3 5.3 0 0 1 939.9 648A5.3 5.3 0 0 1 949.2 648A5.3 5.3 0 0 1 958.6 648A5.3 5.3 0 0 1 968 648A5.6 5.6 0 0 1 968 658A5.6 5.6 0 0 1 968 668A5.6 5.6 0 0 1 968 678A5.6 5.6 0 0 1 968 688A5.6 5.6 0 0 1 968 698A5.6 5.6 0 0 1 968 708A5.3 5.3 0 0 1 958.6 708A5.3 5.3 0 0 1 949.2 708A5.3 5.3 0 0 1 939.9 708A5.3 5.3 0 0 1 930.5 708A5.3 5.3 0 0 1 921.1 708A5.3 5.3 0 0 1 911.8 708A5.3 5.3 0 0 1 902.4 708A5.3 5.3 0 0 1 893 708A5.6 5.6 0 0 1 893 698A5.6 5.6 0 0 1 893 688A5.6 5.6 0 0 1 893 678A5.6 5.6 0 0 1 893 668A5.6 5.6 0 0 1 893 658A5.6 5.6 0 0 1 893 648" stroke="#ffff00" stroke-width="1.4" fill="none"/><line x1="378" y1="790" x2="1157" y2="790" stroke="#ff2a2a" stroke-width="1.3" /><line x1="378" y1="787" x2="1157" y2="787" stroke="#ff2a2a" stroke-width="0.8" /><line x1="378" y1="780" x2="378" y2="800" stroke="#ff2a2a" stroke-width="1.3" /><line x1="722" y1="780" x2="722" y2="800" stroke="#ff2a2a" stroke-width="1.3" /><line x1="1157" y1="780" x2="1157" y2="800" stroke="#ff2a2a" stroke-width="1.3" /><rect x="517" y="787" width="94" height="3" fill="#ff8c00" stroke="none" stroke-width="1" /><rect x="907" y="787" width="88" height="3" fill="#ff8c00" stroke="none" stroke-width="1" /></svg>
<div class="r" style="left:645px;top:951px;width:635px;height:28px;background:#898989;border-radius:3px"></div><div class="t" style="left:648px;top:952.8px;font-size:12px;color:#ffffff;font-family:Liberation Mono;letter-spacing:-0.2px">Autodesk DWG.&nbsp; This file is a TrustedDWG last saved by an Autodesk application or Autodesk</div><div class="t" style="left:648px;top:967.8px;font-size:12px;color:#ffffff;font-family:Liberation Mono;letter-spacing:-0.33px">licensed application.</div><div class="r" style="left:645px;top:985px;width:61px;height:15px;background:#5c5c5c;border-radius:2px"></div><div class="t" style="left:647px;top:986.8px;font-size:12px;color:#ffffff;font-family:Liberation Mono;letter-spacing:-0.33px">Command:</div><div class="r" style="left:645px;top:1005px;width:61px;height:15px;background:#5c5c5c;border-radius:2px"></div><div class="t" style="left:647px;top:1006.8px;font-size:12px;color:#ffffff;font-family:Liberation Mono;letter-spacing:-0.33px">Command:</div><div class="r" style="left:584px;top:1023px;width:57px;height:26px;background:#6f6f6f;border-radius:3px 0 0 3px"></div><svg class="s" style="left:584px;top:1023px;" width="57" height="26" viewBox="0 0 57 26"><path d="M6 6 L6 20 M9 6 L9 20" stroke="#aaa" stroke-dasharray="1 1"/><path d="M16 9 L24 17 M24 9 L16 17" stroke="#fff" stroke-width="2"/><path d="M33 19 L41 11 M40 8 Q46 6 45 12 L42 11Z" stroke="#fff" stroke-width="2" fill="#fff"/></svg><div class="r" style="left:641px;top:1023px;width:694px;height:26px;background:#ffffff;border:1px solid #9a9a9a;box-sizing:border-box"></div><svg class="s" style="left:645px;top:1028px;" width="30" height="16" viewBox="0 0 30 16"><rect x="1" y="2" width="14" height="11" fill="none" stroke="#666"/><rect x="1" y="2" width="14" height="2" fill="#666"/><path d="M4 7 L6 9 L4 11 M7 11 L10 11" stroke="#666" fill="none"/><path d="M18 6 L23 6 L20.5 9Z" fill="#666"/></svg><div class="t" style="left:677px;top:1029.8px;font-size:12px;color:#9a9a9a;font-family:Liberation Mono;font-style:italic;letter-spacing:-0.3px">Type a command</div><svg class="s" style="left:1322px;top:1031px;" width="12" height="8" viewBox="0 0 12 8"><path d="M1 6 L10 6 L5.5 1Z" fill="#444"/></svg>
</body></html>
